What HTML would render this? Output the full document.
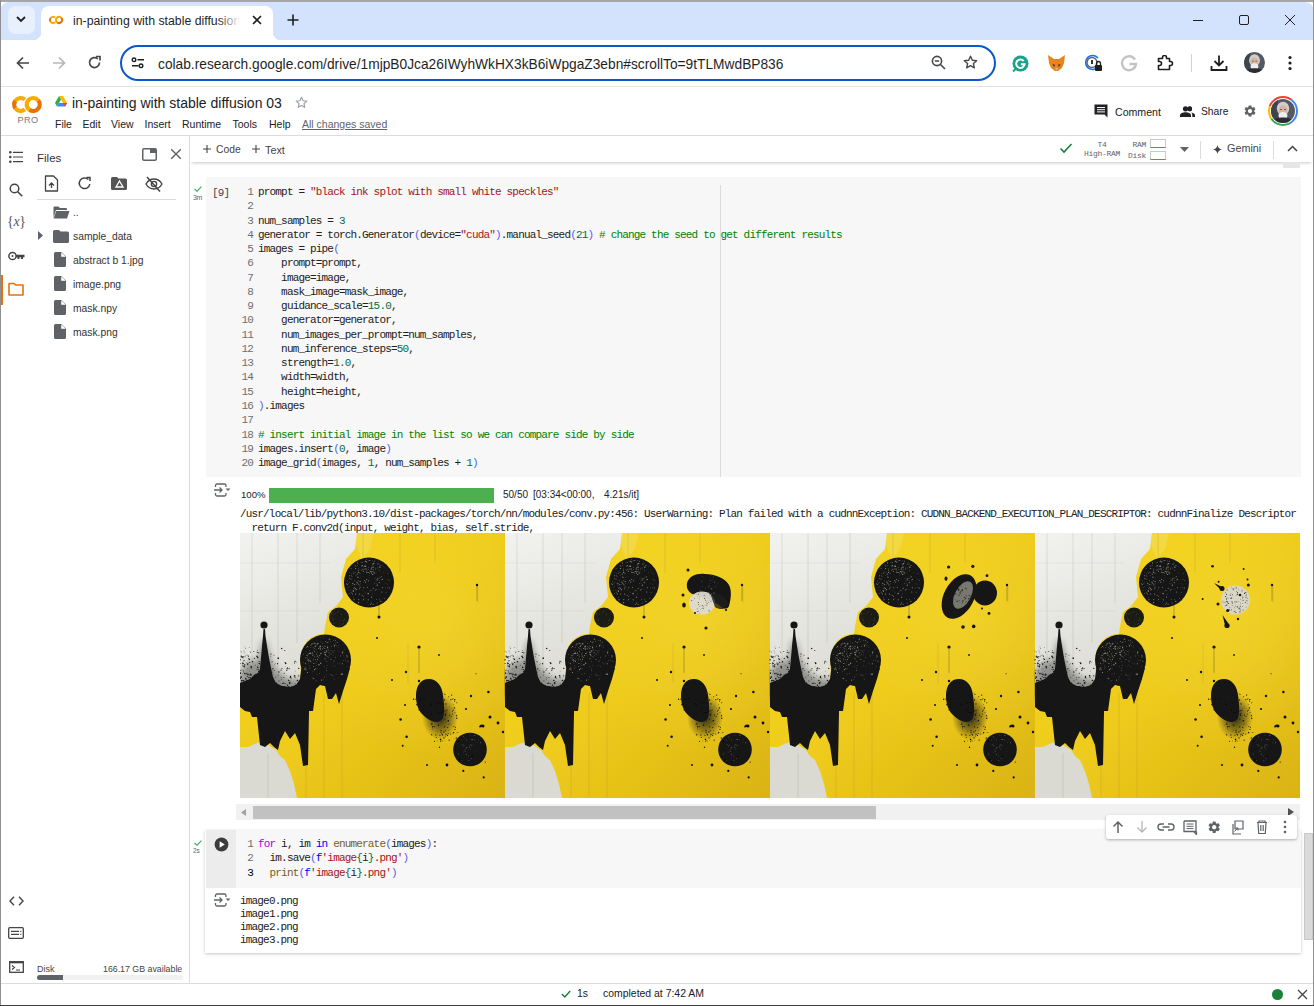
<!DOCTYPE html>
<html><head><meta charset="utf-8">
<style>
*{box-sizing:border-box;margin:0;padding:0}
html,body{width:1314px;height:1006px;overflow:hidden;background:#fff;font-family:"Liberation Sans",sans-serif;color:#202124}
.a{position:absolute}
svg{display:block}
.mono{font-family:"Liberation Mono",monospace}
#tabstrip{left:0;top:0;width:1314px;height:40px;background:#d3e3fd}
.code{font-family:"Liberation Mono",monospace;font-size:11px;letter-spacing:-0.82px;white-space:pre;line-height:14.26px;color:#212121}
.ln{color:#6e6e6e}
.str{color:#a31515}
.num{color:#116644}
.cm{color:#008000}
.br{color:#5060f0}
.kw{color:#af00db}
.kb{color:#0000ff}
.fn{color:#795e26}
</style></head>
<body>
<!-- desktop strip -->
<div class="a" style="left:0;top:0;width:1314px;height:2px;background:#a6a6a6"></div>
<div class="a" id="tabstrip" style="top:1.5px;height:38.5px;border-radius:9px 9px 0 0"></div>
<!-- window borders -->
<div class="a" style="left:0;top:91px;width:1px;height:31px;background:#c0504d"></div>
<div class="a" style="left:0;top:0;width:1px;height:1006px;background:#8f8f8f"></div>
<div class="a" style="left:1313px;top:0;width:1px;height:1006px;background:#8f8f8f"></div>

<!-- tab search button -->
<div class="a" style="left:8px;top:6px;width:27px;height:28px;border-radius:7px;background:#e8f0fe"></div>
<svg class="a" style="left:15px;top:14px" width="12" height="10" viewBox="0 0 12 10"><path d="M2 3 L6 7 L10 3" fill="none" stroke="#1f1f1f" stroke-width="1.8"/></svg>

<!-- active tab -->
<div class="a" style="left:41px;top:6px;width:232px;height:34px;background:#fff;border-radius:8px 8px 0 0"></div>
<div class="a" style="left:33px;top:32px;width:8px;height:8px;background:radial-gradient(circle at 0 0,#d3e3fd 8px,#fff 8.5px)"></div>
<div class="a" style="left:273px;top:32px;width:8px;height:8px;background:radial-gradient(circle at 100% 0,#d3e3fd 8px,#fff 8.5px)"></div>
<!-- colab favicon -->
<svg class="a" style="left:46.9px;top:14.0px" width="18.1" height="11.9" viewBox="0 0 38 25"><path d="M16.88 7.52A6.5 6.5 0 0 0 7.38 8.77" fill="none" stroke="#f9ab00" stroke-width="4.2"/><path d="M7.38 8.77A6.5 6.5 0 0 0 7.38 16.23" fill="none" stroke="#e8710a" stroke-width="4.2"/><path d="M7.38 16.23A6.5 6.5 0 0 0 16.88 17.48" fill="none" stroke="#f9ab00" stroke-width="4.2"/><path d="M30.18 8.32A6.5 6.5 0 1 0 21.47 17.82" fill="none" stroke="#f9ab00" stroke-width="4.2"/><path d="M21.47 17.82A6.5 6.5 0 0 0 30.18 8.32" fill="none" stroke="#e8710a" stroke-width="4.2"/></svg>
<div class="a" style="left:73px;top:14px;width:170px;height:18px;font-size:12.3px;color:#1f1f1f;white-space:nowrap;overflow:hidden">in-painting with stable diffusion 03</div>
<div class="a" style="left:218px;top:10px;width:26px;height:20px;background:linear-gradient(90deg,rgba(255,255,255,0),#fff 85%)"></div>
<svg class="a" style="left:252px;top:15px" width="10" height="10" viewBox="0 0 10 10"><path d="M1 1L9 9M9 1L1 9" stroke="#1f1f1f" stroke-width="1.6"/></svg>
<svg class="a" style="left:287px;top:14px" width="12" height="12" viewBox="0 0 12 12"><path d="M6 0.5V11.5M0.5 6H11.5" stroke="#1f1f1f" stroke-width="1.6"/></svg>

<!-- window controls -->
<div class="a" style="left:1193px;top:20px;width:10px;height:1px;background:#1f1f1f"></div>
<div class="a" style="left:1239px;top:15px;width:10px;height:10px;border:1px solid #1f1f1f;border-radius:2px"></div>
<svg class="a" style="left:1285px;top:15px" width="10" height="10" viewBox="0 0 10 10"><path d="M0 0L10 10M10 0L0 10" stroke="#1f1f1f" stroke-width="1"/></svg>

<!-- toolbar -->
<div class="a" style="left:1px;top:40px;width:1312px;height:46px;background:#fff"></div>
<div class="a" style="left:1px;top:86px;width:1312px;height:1px;background:#e3e3e3"></div>
<svg class="a" style="left:16px;top:56px" width="14" height="14" viewBox="0 0 14 14"><path d="M13 7H1.5M7 1.5L1.5 7L7 12.5" fill="none" stroke="#474747" stroke-width="1.7"/></svg>
<svg class="a" style="left:52px;top:56px" width="14" height="14" viewBox="0 0 14 14"><path d="M1 7H12.5M7 1.5L12.5 7L7 12.5" fill="none" stroke="#b8b8b8" stroke-width="1.7"/></svg>
<svg class="a" style="left:87px;top:55px" width="15" height="15" viewBox="0 0 15 15"><path d="M12.5 7.5A5 5 0 1 1 10.8 3.8" fill="none" stroke="#474747" stroke-width="1.7"/><path d="M9 1.5H13V5.5" fill="none" stroke="#474747" stroke-width="1.7"/></svg>
<div class="a" style="left:120px;top:45px;width:876px;height:36px;border:2px solid #0b57d0;border-radius:18px;background:#fff"></div>
<svg class="a" style="left:131px;top:57px" width="14" height="12" viewBox="0 0 14 12"><circle cx="3" cy="2.8" r="1.8" fill="none" stroke="#1f1f1f" stroke-width="1.4"/><path d="M6.5 2.8H13M1 8.8H7.5" stroke="#1f1f1f" stroke-width="1.5"/><circle cx="10" cy="8.8" r="1.8" fill="none" stroke="#1f1f1f" stroke-width="1.4"/></svg>
<div class="a" style="left:158px;top:56.5px;font-size:13.75px;color:#1f1f1f;white-space:nowrap">colab.research.google.com/drive/1mjpB0Jca26IWyhWkHX3kB6iWpgaZ3ebn#scrollTo=9tTLMwdBP836</div>

<!-- toolbar right icons -->
<svg class="a" style="left:931px;top:55px" width="15" height="15" viewBox="0 0 15 15"><circle cx="6" cy="6" r="4.6" fill="none" stroke="#474747" stroke-width="1.6"/><path d="M9.5 9.5L14 14M3.8 6H8.2" stroke="#474747" stroke-width="1.6"/></svg>
<svg class="a" style="left:962px;top:54px" width="17" height="17" viewBox="0 0 24 24"><path d="M12 3.2l2.6 5.6 6.1.6-4.6 4.1 1.3 6-5.4-3.1-5.4 3.1 1.3-6-4.6-4.1 6.1-.6z" fill="none" stroke="#474747" stroke-width="2" stroke-linejoin="round"/></svg>
<svg class="a" style="left:1012px;top:55px" width="17" height="17" viewBox="0 0 17 17"><circle cx="8.5" cy="8.5" r="8" fill="#15a38a"/><path d="M11.8 6.2A4.2 4.2 0 1 0 12.6 9.2H8.8" fill="none" stroke="#fff" stroke-width="2"/><path d="M1 16.5L4.5 13" stroke="#15a38a" stroke-width="2"/></svg>
<svg class="a" style="left:1047px;top:54px" width="19" height="18" viewBox="0 0 19 18"><path d="M1 1L7 5H12L18 1L17 9L15 14L11 17H8L4 14L2 9Z" fill="#e8831d"/><path d="M5 9L8 11L7 13ZM14 9L11 11L12 13Z" fill="#233447"/><path d="M8 14H11L9.5 16Z" fill="#d7c1b3"/><path d="M3 6L7 8L6 11Z M16 6L12 8L13 11Z" fill="#f6851b"/></svg>
<svg class="a" style="left:1084px;top:54px" width="19" height="18" viewBox="0 0 19 18"><path d="M14 4A7 7 0 1 0 14 13" fill="none" stroke="#1a73e8" stroke-width="1.6"/><circle cx="8" cy="8.5" r="5" fill="#fff" stroke="#5f6368" stroke-width="1.4"/><path d="M8 6V10" stroke="#1f1f1f" stroke-width="1.8"/><rect x="11" y="11" width="7" height="6" rx="1" fill="#1f1f1f"/><path d="M12.5 11V9.5A2 2 0 0 1 16.5 9.5V11" fill="none" stroke="#1f1f1f" stroke-width="1.3"/></svg>
<svg class="a" style="left:1120px;top:54px" width="18" height="18" viewBox="0 0 18 18"><path d="M15 5.5A7 7 0 1 0 16 10H9.5" fill="none" stroke="#c4c4c4" stroke-width="2.4"/></svg>
<svg class="a" style="left:1157px;top:55px" width="17" height="16" viewBox="0 0 17 16"><path d="M1.5 3.5H5.5V2.5A2 2 0 0 1 9.5 2.5V3.5H12.5V6.5H13.5A2 2 0 0 1 13.5 10.5H12.5V14.5H1.5V10.5H2.5A2 2 0 0 0 2.5 6.5H1.5Z" fill="none" stroke="#1f1f1f" stroke-width="1.6" stroke-linejoin="round"/></svg>
<div class="a" style="left:1191px;top:54px;width:1px;height:18px;background:#c2d3f2"></div>
<svg class="a" style="left:1210px;top:54px" width="18" height="18" viewBox="0 0 18 18"><path d="M9 1.5V11.5M4.5 7L9 11.5L13.5 7M1.5 12V16H16.5V12" fill="none" stroke="#1f1f1f" stroke-width="1.8"/></svg>
<svg class="a" style="left:1244px;top:52px" width="21" height="21" viewBox="0 0 24 24"><defs><clipPath id="avc"><circle cx="12" cy="12" r="12"/></clipPath></defs><g clip-path="url(#avc)"><rect width="24" height="24" fill="#555b63"/><rect x="0" y="0" width="7" height="24" fill="#3f454d"/><ellipse cx="12" cy="9.5" rx="6.2" ry="6.8" fill="#cfcfcf"/><ellipse cx="12" cy="11.5" rx="4.6" ry="5.2" fill="#d8b3a3"/><ellipse cx="12" cy="16.5" rx="4.4" ry="3.6" fill="#ededed"/><path d="M2 24C3 19 7 18.5 12 18.5S21 19 22 24Z" fill="#2a2d33"/><path d="M9 10.5H11M13 10.5H15" stroke="#6a5048" stroke-width="0.9"/></g></svg>
<svg class="a" style="left:1288px;top:55px" width="4" height="16" viewBox="0 0 4 16"><circle cx="2" cy="2.5" r="1.6" fill="#1f1f1f"/><circle cx="2" cy="8" r="1.6" fill="#1f1f1f"/><circle cx="2" cy="13.5" r="1.6" fill="#1f1f1f"/></svg>

<!-- colab header -->
<svg class="a" style="left:8px;top:92px" width="38.0" height="25.0" viewBox="0 0 38 25"><path d="M16.88 7.52A6.5 6.5 0 0 0 7.38 8.77" fill="none" stroke="#f9ab00" stroke-width="4.2"/><path d="M7.38 8.77A6.5 6.5 0 0 0 7.38 16.23" fill="none" stroke="#e8710a" stroke-width="4.2"/><path d="M7.38 16.23A6.5 6.5 0 0 0 16.88 17.48" fill="none" stroke="#f9ab00" stroke-width="4.2"/><path d="M30.18 8.32A6.5 6.5 0 1 0 21.47 17.82" fill="none" stroke="#f9ab00" stroke-width="4.2"/><path d="M21.47 17.82A6.5 6.5 0 0 0 30.18 8.32" fill="none" stroke="#e8710a" stroke-width="4.2"/></svg>
<div class="a" style="left:17.5px;top:114.5px;font-size:9.2px;color:#777;letter-spacing:0.4px">PRO</div>
<svg class="a" style="left:55px;top:96px" width="12" height="11" viewBox="0 0 12 11"><path d="M4 0H8L12 7L10 10.5Z" fill="#fbbc04"/><path d="M4 0L0 7L2 10.5L6 3.5Z" fill="#34a853"/><path d="M2 10.5H10L12 7H4Z" fill="#4285f4"/><path d="M10 10.5L12 7L8 7Z" fill="#ea4335"/></svg>
<div class="a" style="left:72px;top:95px;font-size:14px;color:#202124;white-space:nowrap">in-painting with stable diffusion 03</div>
<svg class="a" style="left:295px;top:96px" width="13" height="13" viewBox="0 0 24 24"><path d="M12 2.5l2.9 6.3 6.8.7-5.1 4.6 1.4 6.8L12 17.4l-6 3.5 1.4-6.8-5.1-4.6 6.8-.7z" fill="none" stroke="#9aa0a6" stroke-width="2.2" stroke-linejoin="round"/></svg>
<div class="a" style="top:118px;font-size:10.5px;color:#202124;white-space:nowrap;left:0;width:400px;height:14px">
<span class="a" style="left:55px">File</span><span class="a" style="left:82.5px">Edit</span><span class="a" style="left:111px">View</span><span class="a" style="left:144.5px">Insert</span><span class="a" style="left:182px">Runtime</span><span class="a" style="left:232.5px">Tools</span><span class="a" style="left:269px">Help</span><span class="a" style="left:302px;color:#5f6368;text-decoration:underline">All changes saved</span>
</div>
<svg class="a" style="left:1094px;top:104px" width="14" height="14" viewBox="0 0 14 14"><path d="M0.5 0.5H13.5V13.5L10.5 10.5H0.5Z" fill="#202124"/><path d="M3 3.5H11M3 5.7H11M3 7.9H11" stroke="#fff" stroke-width="1"/></svg>
<div class="a" style="left:1115px;top:105.5px;font-size:10.6px;color:#202124">Comment</div>
<svg class="a" style="left:1180px;top:106px" width="15" height="11" viewBox="0 0 15 11"><circle cx="5.5" cy="2.8" r="2.6" fill="#202124"/><path d="M0 11V9.3C0 7.3 3 6.3 5.5 6.3S11 7.3 11 9.3V11Z" fill="#202124"/><path d="M9.3 5.4A2.6 2.6 0 0 0 9.3 0.2A2.8 2.8 0 0 1 9.3 5.4Z" fill="#202124"/><circle cx="9.6" cy="2.8" r="2.5" fill="#202124"/><path d="M11.3 6.5C13.3 6.9 15 7.8 15 9.3V11H12.3V9.3C12.3 8.2 12 7.2 11.3 6.5Z" fill="#202124"/></svg>
<div class="a" style="left:1201px;top:106px;font-size:10.3px;color:#202124">Share</div>
<svg class="a" style="left:1243px;top:104px" width="14" height="14" viewBox="0 0 24 24"><path fill="#5f6368" d="M19.14 12.94c.04-.3.06-.61.06-.94 0-.32-.02-.64-.07-.94l2.03-1.58a.49.49 0 0 0 .12-.61l-1.92-3.32a.488.488 0 0 0-.59-.22l-2.39.96c-.5-.38-1.03-.7-1.62-.94l-.36-2.54a.484.484 0 0 0-.48-.41h-3.84c-.24 0-.43.17-.47.41l-.36 2.54c-.59.24-1.13.57-1.62.94l-2.39-.96c-.22-.08-.47 0-.59.22L2.74 8.87c-.12.21-.08.47.12.61l2.03 1.58c-.05.3-.09.63-.09.94s.02.64.07.94l-2.03 1.58a.49.49 0 0 0-.12.61l1.92 3.32c.12.22.37.29.59.22l2.39-.96c.5.38 1.03.7 1.62.94l.36 2.54c.05.24.24.41.48.41h3.84c.24 0 .44-.17.47-.41l.36-2.54c.59-.24 1.13-.56 1.62-.94l2.39.96c.22.08.47 0 .59-.22l1.92-3.32c.12-.22.07-.47-.12-.61l-2.01-1.58zM12 15.6c-1.98 0-3.6-1.62-3.6-3.6s1.62-3.6 3.6-3.6 3.6 1.62 3.6 3.6-1.62 3.6-3.6 3.6z"/></svg>
<div class="a" style="left:1268px;top:96px;width:30px;height:30px;border-radius:50%;background:conic-gradient(#ea4335 0 35deg,#4285f4 35deg 150deg,#34a853 150deg 235deg,#fbbc04 235deg 290deg,#ea4335 290deg 360deg)"></div>
<div class="a" style="left:1270px;top:98px;width:26px;height:26px;border-radius:50%;background:#fff"></div>
<svg class="a" style="left:1271px;top:99px" width="24" height="24" viewBox="0 0 24 24"><defs><clipPath id="avc2"><circle cx="12" cy="12" r="12"/></clipPath></defs><g clip-path="url(#avc2)"><rect width="24" height="24" fill="#555b63"/><rect x="0" y="0" width="7" height="24" fill="#3f454d"/><ellipse cx="12" cy="9.5" rx="6.2" ry="6.8" fill="#cfcfcf"/><ellipse cx="12" cy="11.5" rx="4.6" ry="5.2" fill="#d8b3a3"/><ellipse cx="12" cy="16.5" rx="4.4" ry="3.6" fill="#ededed"/><path d="M2 24C3 19 7 18.5 12 18.5S21 19 22 24Z" fill="#2a2d33"/><path d="M9 10.5H11M13 10.5H15" stroke="#6a5048" stroke-width="0.9"/></g></svg>
<div class="a" style="left:1px;top:135px;width:1312px;height:1px;background:#dadce0"></div>

<!-- notebook toolbar -->
<div class="a" style="left:190px;top:136px;width:1123px;height:26px;background:#fff;box-shadow:0 3px 3px -2px rgba(0,0,0,0.22)"></div>
<svg class="a" style="left:203px;top:145px" width="8" height="8" viewBox="0 0 8 8"><path d="M4 0V8M0 4H8" stroke="#444" stroke-width="1.1"/></svg>
<div class="a" style="left:216px;top:144px;font-size:10.3px;color:#444">Code</div>
<svg class="a" style="left:252px;top:145px" width="8" height="8" viewBox="0 0 8 8"><path d="M4 0V8M0 4H8" stroke="#444" stroke-width="1.1"/></svg>
<div class="a" style="left:265px;top:144px;font-size:10.8px;color:#444">Text</div>
<svg class="a" style="left:1059px;top:142px" width="14" height="12" viewBox="0 0 14 12"><path d="M1.5 6.5L5 10L12.5 2" fill="none" stroke="#188038" stroke-width="1.6"/></svg>
<div class="a mono" style="left:1084px;top:140px;font-size:8px;line-height:9px;color:#5f6368;text-align:center;width:36px;letter-spacing:-0.3px">T4<br>High-RAM</div>
<div class="a mono" style="left:1127px;top:139px;font-size:8px;line-height:11px;color:#5f6368;text-align:right;width:19px;letter-spacing:-0.3px">RAM<br>Disk</div>
<div class="a" style="left:1150px;top:139px;width:16px;height:9px;border:1px solid #c8c8c8;border-bottom:1px solid #34a853"></div>
<div class="a" style="left:1150px;top:151px;width:16px;height:9px;border:1px solid #c8c8c8;border-bottom:1px solid #34a853"></div>
<svg class="a" style="left:1180px;top:147px" width="9" height="5" viewBox="0 0 9 5"><path d="M0 0H9L4.5 5Z" fill="#5f6368"/></svg>
<div class="a" style="left:1200px;top:141px;width:1px;height:18px;background:#dadce0"></div>
<svg class="a" style="left:1213px;top:145px" width="9" height="9" viewBox="0 0 10 10"><path d="M5 0C5.5 3 7 4.5 10 5C7 5.5 5.5 7 5 10C4.5 7 3 5.5 0 5C3 4.5 4.5 3 5 0Z" fill="#444"/></svg>
<div class="a" style="left:1227px;top:142px;font-size:10.8px;color:#444">Gemini</div>
<div class="a" style="left:1273px;top:141px;width:1px;height:18px;background:#dadce0"></div>
<svg class="a" style="left:1287px;top:145px" width="11" height="7" viewBox="0 0 11 7"><path d="M1 6L5.5 1.5L10 6" fill="none" stroke="#444" stroke-width="1.5"/></svg>

<!-- sidebar -->
<div class="a" style="left:189px;top:136px;width:1px;height:847px;background:#dadce0"></div>
<svg class="a" style="left:9px;top:151px" width="14" height="12" viewBox="0 0 14 12"><circle cx="1.3" cy="1.3" r="1.3" fill="#444"/><circle cx="1.3" cy="6" r="1.3" fill="#444"/><circle cx="1.3" cy="10.7" r="1.3" fill="#444"/><path d="M4 1.3H14M4 6H14M4 10.7H14" stroke="#444" stroke-width="1.2"/></svg>
<div class="a" style="left:37px;top:151.5px;font-size:11.5px;color:#333">Files</div>
<svg class="a" style="left:141.5px;top:148px" width="15" height="13" viewBox="0 0 15 13"><rect x="0.75" y="0.75" width="13.5" height="11.5" rx="1.2" fill="none" stroke="#5f6368" stroke-width="1.5"/><rect x="8" y="1" width="6" height="4" fill="#5f6368"/></svg>
<svg class="a" style="left:170px;top:148px" width="12" height="12" viewBox="0 0 12 12"><path d="M1.2 1.2L10.8 10.8M10.8 1.2L1.2 10.8" stroke="#5f6368" stroke-width="1.4"/></svg>
<svg class="a" style="left:9px;top:183px" width="14" height="14" viewBox="0 0 14 14"><circle cx="5.5" cy="5.5" r="4.3" fill="none" stroke="#444" stroke-width="1.5"/><path d="M8.7 8.7L13.3 13.3" stroke="#444" stroke-width="1.6"/></svg>
<div class="a" style="left:7px;top:214px;font-family:'Liberation Serif',serif;font-size:14px;color:#555;letter-spacing:-0.3px">{<i>x</i>}</div>
<svg class="a" style="left:8px;top:250px" width="17" height="12" viewBox="0 0 17 12"><circle cx="4.5" cy="6" r="3.6" fill="none" stroke="#444" stroke-width="1.5"/><circle cx="4.5" cy="6" r="1" fill="#444"/><path d="M8 4.8H16.5V7.2H15V9H13V7.2H11.5V9H9.5V7.2H8" fill="#444"/></svg>
<div class="a" style="left:1px;top:275px;width:2px;height:30px;background:#e8710a"></div>
<svg class="a" style="left:8px;top:282px" width="16" height="14" viewBox="0 0 16 14"><path d="M1 1.5H6L7.5 3H15V13H1Z" fill="none" stroke="#e8710a" stroke-width="1.6" stroke-linejoin="round"/></svg>
<svg class="a" style="left:44px;top:175px" width="15" height="17" viewBox="0 0 15 17"><path d="M1.5 1H9.5L13.5 5V16H1.5Z" fill="none" stroke="#444" stroke-width="1.3" stroke-linejoin="round"/><path d="M7.5 13V8M5 10.5L7.5 8L10 10.5" fill="none" stroke="#444" stroke-width="1.3"/></svg>
<svg class="a" style="left:77px;top:176px" width="15" height="15" viewBox="0 0 15 15"><path d="M12.8 8A5.3 5.3 0 1 1 11.4 3.6" fill="none" stroke="#444" stroke-width="1.5"/><path d="M9.5 1.5H13V5" fill="none" stroke="#444" stroke-width="1.5"/></svg>
<svg class="a" style="left:111px;top:177px" width="16" height="13" viewBox="0 0 16 13"><path d="M0 1.5A1.5 1.5 0 0 1 1.5 0H6L7.5 1.5H14.5A1.5 1.5 0 0 1 16 3V11.5A1.5 1.5 0 0 1 14.5 13H1.5A1.5 1.5 0 0 1 0 11.5Z" fill="#555"/><path d="M8.5 4L12 10H5Z" fill="none" stroke="#fff" stroke-width="1.3"/></svg>
<svg class="a" style="left:145px;top:176px" width="18" height="16" viewBox="0 0 18 16"><path d="M1 8C3 4.5 6 3 9 3S15 4.5 17 8C15 11.5 12 13 9 13S3 11.5 1 8Z" fill="none" stroke="#444" stroke-width="1.4"/><circle cx="9" cy="8" r="2.6" fill="none" stroke="#444" stroke-width="1.4"/><path d="M2 1L15 15.5" stroke="#444" stroke-width="1.5"/></svg>
<div class="a" style="left:37px;top:199px;width:139px;height:1px;background:#dadce0"></div>
<svg class="a" style="left:53px;top:206px" width="17" height="13" viewBox="0 0 17 13"><path d="M0.5 12V1.5A1 1 0 0 1 1.5 0.5H5.5L7 2H13A1 1 0 0 1 14 3V4H3L0.5 12Z" fill="#5f6368"/><path d="M3.2 5H16.5L14 12.5H0.7Z" fill="#5f6368"/></svg>
<div class="a" style="left:73px;top:207px;font-size:10.3px;color:#444">..</div>
<svg class="a" style="left:38px;top:231px" width="5" height="9" viewBox="0 0 5 9"><path d="M0 0L5 4.5L0 9Z" fill="#5f6368"/></svg>
<svg class="a" style="left:53px;top:230px" width="16" height="13" viewBox="0 0 16 13"><path d="M0 1.5A1.5 1.5 0 0 1 1.5 0H6L7.5 1.5H14.5A1.5 1.5 0 0 1 16 3V11.5A1.5 1.5 0 0 1 14.5 13H1.5A1.5 1.5 0 0 1 0 11.5Z" fill="#5f6368"/></svg>
<div class="a" style="left:73px;top:231px;font-size:10.3px;color:#333">sample_data</div>
<svg class="a" style="left:54px;top:252px" width="12" height="15" viewBox="0 0 12 15"><path d="M1.5 0H7.5L12 4.5V13.5A1.5 1.5 0 0 1 10.5 15H1.5A1.5 1.5 0 0 1 0 13.5V1.5A1.5 1.5 0 0 1 1.5 0Z" fill="#5f6368"/><path d="M7.5 0.5V4.5H11.5" fill="#fff" stroke="#fff" stroke-width="0.6"/></svg>
<div class="a" style="left:73px;top:255px;font-size:10.3px;color:#333">abstract b 1.jpg</div>
<svg class="a" style="left:54px;top:276px" width="12" height="15" viewBox="0 0 12 15"><path d="M1.5 0H7.5L12 4.5V13.5A1.5 1.5 0 0 1 10.5 15H1.5A1.5 1.5 0 0 1 0 13.5V1.5A1.5 1.5 0 0 1 1.5 0Z" fill="#5f6368"/><path d="M7.5 0.5V4.5H11.5" fill="#fff" stroke="#fff" stroke-width="0.6"/></svg>
<div class="a" style="left:73px;top:279px;font-size:10.3px;color:#333">image.png</div>
<svg class="a" style="left:54px;top:300px" width="12" height="15" viewBox="0 0 12 15"><path d="M1.5 0H7.5L12 4.5V13.5A1.5 1.5 0 0 1 10.5 15H1.5A1.5 1.5 0 0 1 0 13.5V1.5A1.5 1.5 0 0 1 1.5 0Z" fill="#5f6368"/><path d="M7.5 0.5V4.5H11.5" fill="#fff" stroke="#fff" stroke-width="0.6"/></svg>
<div class="a" style="left:73px;top:303px;font-size:10.3px;color:#333">mask.npy</div>
<svg class="a" style="left:54px;top:324px" width="12" height="15" viewBox="0 0 12 15"><path d="M1.5 0H7.5L12 4.5V13.5A1.5 1.5 0 0 1 10.5 15H1.5A1.5 1.5 0 0 1 0 13.5V1.5A1.5 1.5 0 0 1 1.5 0Z" fill="#5f6368"/><path d="M7.5 0.5V4.5H11.5" fill="#fff" stroke="#fff" stroke-width="0.6"/></svg>
<div class="a" style="left:73px;top:327px;font-size:10.3px;color:#333">mask.png</div>

<svg class="a" style="left:9px;top:896px" width="15" height="10" viewBox="0 0 15 10"><path d="M5 0.8L1 5L5 9.2M10 0.8L14 5L10 9.2" fill="none" stroke="#444" stroke-width="1.4"/></svg>
<svg class="a" style="left:8px;top:927px" width="16" height="12" viewBox="0 0 16 12"><rect x="0.7" y="0.7" width="14.6" height="10.6" rx="1" fill="none" stroke="#444" stroke-width="1.3"/><path d="M3 4.3H11M3 7.3H11M12.3 4.3H13.3M12.3 7.3H13.3" stroke="#444" stroke-width="1.2"/></svg>
<svg class="a" style="left:9px;top:961px" width="15" height="12" viewBox="0 0 15 12"><rect x="0.7" y="0.7" width="13.6" height="10.6" fill="none" stroke="#444" stroke-width="1.3"/><rect x="0.7" y="0.7" width="13.6" height="1.6" fill="#444"/><path d="M3 4.5L5.5 6.5L3 8.5M7 9H11" fill="none" stroke="#444" stroke-width="1.2"/></svg>
<div class="a" style="left:37px;top:964px;font-size:9px;color:#444">Disk</div>
<div class="a" style="left:103px;top:964px;font-size:8.8px;color:#444">166.17 GB available</div>
<div class="a" style="left:37px;top:975px;width:146px;height:5px;border-radius:3px;background:#f1f1f1"></div>
<div class="a" style="left:37px;top:975px;width:26px;height:5px;border-radius:3px 0 0 3px;background:#5f6368"></div>

<!-- status bar -->
<div class="a" style="left:1px;top:983px;width:1312px;height:1px;background:#dadce0"></div>
<svg class="a" style="left:561px;top:990px" width="10" height="8" viewBox="0 0 10 8"><path d="M0.8 4L3.8 7L9.2 1" fill="none" stroke="#188038" stroke-width="1.4"/></svg>
<div class="a" style="left:577px;top:988px;font-size:10.4px;color:#202124">1s</div>
<div class="a" style="left:603px;top:988px;font-size:10.44px;color:#202124">completed at 7:42 AM</div>
<div class="a" style="left:1272px;top:989px;width:11px;height:11px;border-radius:50%;background:#188038"></div>
<svg class="a" style="left:1297px;top:989px" width="11" height="11" viewBox="0 0 11 11"><path d="M1 1L10 10M10 1L1 10" stroke="#444" stroke-width="1.3"/></svg>
<div class="a" style="left:0;top:1005px;width:1314px;height:1px;background:#3c3c3c"></div>
<!-- NB START -->
<div class="a" style="left:1283px;top:162px;width:17px;height:6px;background:#e6e6e6"></div>
<!-- cell 1 -->
<div class="a" style="left:206px;top:177px;width:1095px;height:300px;background:#f7f7f7"></div>
<svg class="a" style="left:194px;top:186px" width="8" height="6" viewBox="0 0 8 6"><path d="M0.6 3L3 5.3L7.4 0.7" fill="none" stroke="#34a853" stroke-width="1.1"/></svg>
<div class="a" style="left:193px;top:193.5px;font-size:7px;color:#5f6368;letter-spacing:-0.3px">3m</div>
<div class="a code" style="left:212px;top:186px;color:#444">[9]</div>
<div class="a" style="left:720px;top:185px;width:1px;height:292px;background:#dcdcdc"></div>
<div class="a code ln" style="left:221px;top:185px;width:32px;text-align:right">1
2
3
4
5
6
7
8
9
10
11
12
13
14
15
16
17
18
19
20</div>
<div class="a code" style="left:258px;top:185px">prompt = <span class="str">"black ink splot with small white speckles"</span>

num_samples = <span class="num">3</span>
generator = torch.Generator<span class="br">(</span>device=<span class="str">"cuda"</span><span class="br">)</span>.manual_seed<span class="br">(</span><span class="num">21</span><span class="br">)</span> <span class="cm"># change the seed to get different results</span>
images = pipe<span class="br">(</span>
    prompt=prompt,
    image=image,
    mask_image=mask_image,
    guidance_scale=<span class="num">15.0</span>,
    generator=generator,
    num_images_per_prompt=num_samples,
    num_inference_steps=<span class="num">50</span>,
    strength=<span class="num">1.0</span>,
    width=width,
    height=height,
<span class="br">)</span>.images

<span class="cm"># insert initial image in the list so we can compare side by side</span>
images.insert<span class="br">(</span><span class="num">0</span>, image<span class="br">)</span>
image_grid<span class="br">(</span>images, <span class="num">1</span>, num_samples + <span class="num">1</span><span class="br">)</span></div>

<!-- output 1 -->
<svg class="a" style="left:214px;top:483px" width="17" height="14" viewBox="0 0 17 14"><path d="M1.5 4V2.5A1.5 1.5 0 0 1 3 1H10.5A1.5 1.5 0 0 1 12 2.5V4M1.5 10V11.5A1.5 1.5 0 0 0 3 13H10.5A1.5 1.5 0 0 0 12 11.5V10" fill="none" stroke="#5f6368" stroke-width="1.3"/><path d="M0 7H8M5.5 4.5L8 7L5.5 9.5" fill="none" stroke="#5f6368" stroke-width="1.3"/><path d="M11.5 5.5H16.5L14 8Z" fill="#5f6368"/></svg>
<div class="a" style="left:241px;top:489px;font-size:9.6px;color:#202124">100%</div>
<div class="a" style="left:269px;top:488px;width:225px;height:15px;background:#4caf50"></div>
<div class="a" style="left:503px;top:489px;font-size:10px;color:#202124">50/50</div><div class="a" style="left:533px;top:489px;font-size:10px;color:#202124">[03:34&lt;00:00,</div><div class="a" style="left:604px;top:489px;font-size:10px;color:#202124">4.21s/it]</div>
<div class="a code" style="left:240px;top:508px;line-height:13.5px;letter-spacing:-0.83px">/usr/local/lib/python3.10/dist-packages/torch/nn/modules/conv.py:456: UserWarning: Plan failed with a cudnnException: CUDNN_BACKEND_EXECUTION_PLAN_DESCRIPTOR: cudnnFinalize Descriptor
  return F.conv2d(input, weight, bias, self.stride,</div>
<div class="a" id="imgs" style="left:240px;top:533px;width:1060px;height:265px;overflow:hidden"><svg width="1060" height="265" viewBox="0 0 1060 265"><defs>
<linearGradient id="yel" x1="0" y1="0" x2="1" y2="1"><stop offset="0" stop-color="#f6d824"/><stop offset="0.5" stop-color="#eecb1c"/><stop offset="1" stop-color="#dab312"/></linearGradient>
<radialGradient id="yel2" cx="0.75" cy="0.35" r="0.5"><stop offset="0" stop-color="#f8e040" stop-opacity="0.35"/><stop offset="1" stop-color="#f8e040" stop-opacity="0"/></radialGradient>
<linearGradient id="lig" x1="0" y1="0" x2="0.3" y2="1"><stop offset="0" stop-color="#f2f2f0"/><stop offset="1" stop-color="#dcdcd4"/></linearGradient>
<radialGradient id="scat"><stop offset="0" stop-color="#151515" stop-opacity="0.9"/><stop offset="0.55" stop-color="#151515" stop-opacity="0.45"/><stop offset="1" stop-color="#151515" stop-opacity="0"/></radialGradient>
<filter id="blur3" x="-0.2" y="-0.2" width="1.4" height="1.4"><feGaussianBlur stdDeviation="3"/></filter><filter id="soft" x="0" y="0" width="1" height="1"><feGaussianBlur stdDeviation="0.4"/></filter></defs><g filter="url(#soft)" transform="translate(0,0)">
<rect width="265" height="265" fill="url(#yel)"/>
<rect width="265" height="265" fill="url(#yel2)"/>
<path d="M117 0H134L130 16L122 26L116 12Z" fill="#f3df6a" opacity="0.45"/>
<path d="M0 0H117L115 16L106 26L101 44L103 64L96 73L88 79L85 93L84 101L78 101.5L72 104L67 108L63.5 113L61.5 119L60.5 125L60.5 165L0 165Z" fill="url(#lig)"/>
<path d="M0 214L8 214L14.5 211L20 209L28 212L36 217L40 223L45 227L50 238L54 251L57 265H0Z" fill="#dadad3"/>
<g stroke="#5a5a40" stroke-width="0.45" opacity="0.3" fill="none"><path d="M38 0V140M57 0V110M80 0V70M28 220V265M84 160V265M102 150V265M66 232V265M123 0V24M160 0V40M195 0V30M238 52V70M168 110V150M12 0V130"/></g>
<g stroke="#b0b0a8" stroke-width="0.45" opacity="0.3" fill="none"><path d="M0 30H90M0 78H80"/></g>
<path d="M0 138L6 132L12 126L16 130L20 120L22 108L26 108L30 124L36 136L44 144L52 147L60 144L60 165L0 165Z" fill="#1c1c1c" opacity="0.4" filter="url(#blur3)"/>
<g fill="#1a1a1a"><circle cx="3.0" cy="133.0" r="0.63"/><circle cx="10.7" cy="119.8" r="0.48"/><circle cx="10.1" cy="118.6" r="0.32"/><circle cx="1.4" cy="137.0" r="0.35"/><circle cx="16.5" cy="136.7" r="0.36"/><circle cx="12.5" cy="128.8" r="0.77"/><circle cx="7.9" cy="141.4" r="0.79"/><circle cx="17.2" cy="117.5" r="0.44"/><circle cx="2.4" cy="124.7" r="0.45"/><circle cx="3.6" cy="147.7" r="0.59"/><circle cx="7.4" cy="143.2" r="0.57"/><circle cx="1.2" cy="119.0" r="0.40"/><circle cx="8.6" cy="144.3" r="0.46"/><circle cx="9.1" cy="141.7" r="0.45"/><circle cx="14.0" cy="147.2" r="0.42"/><circle cx="10.5" cy="141.3" r="0.74"/><circle cx="5.8" cy="145.6" r="0.79"/><circle cx="8.4" cy="123.1" r="0.68"/><circle cx="9.8" cy="125.2" r="0.32"/><circle cx="15.3" cy="144.0" r="0.59"/><circle cx="6.3" cy="149.2" r="0.65"/><circle cx="11.6" cy="141.9" r="0.53"/><circle cx="18.9" cy="148.3" r="0.54"/><circle cx="1.2" cy="143.9" r="0.65"/><circle cx="19.9" cy="143.4" r="0.71"/><circle cx="7.7" cy="131.5" r="0.63"/><circle cx="9.2" cy="114.6" r="0.38"/><circle cx="1.2" cy="123.1" r="0.68"/><circle cx="5.0" cy="123.8" r="0.50"/><circle cx="1.6" cy="149.1" r="0.52"/><circle cx="17.7" cy="140.6" r="0.71"/><circle cx="5.6" cy="148.9" r="0.51"/><circle cx="17.7" cy="134.4" r="0.78"/><circle cx="3.5" cy="125.1" r="0.42"/><circle cx="9.7" cy="129.3" r="0.59"/><circle cx="0.1" cy="130.6" r="0.51"/><circle cx="11.3" cy="134.7" r="0.78"/><circle cx="10.3" cy="144.6" r="0.61"/><circle cx="1.1" cy="144.2" r="0.75"/><circle cx="17.5" cy="146.9" r="0.70"/><circle cx="8.0" cy="135.6" r="0.35"/><circle cx="1.2" cy="143.0" r="0.33"/><circle cx="3.2" cy="128.1" r="0.47"/><circle cx="0.0" cy="118.1" r="0.38"/><circle cx="7.3" cy="122.0" r="0.31"/><circle cx="12.3" cy="149.1" r="0.37"/><circle cx="6.9" cy="130.1" r="0.48"/><circle cx="17.0" cy="123.4" r="0.80"/><circle cx="9.7" cy="138.0" r="0.34"/><circle cx="6.9" cy="122.1" r="0.43"/><circle cx="3.2" cy="148.1" r="0.31"/><circle cx="10.6" cy="150.9" r="0.37"/><circle cx="0.5" cy="140.4" r="0.56"/><circle cx="17.3" cy="151.5" r="0.65"/><circle cx="7.3" cy="130.5" r="0.38"/><circle cx="10.7" cy="146.7" r="0.69"/><circle cx="4.5" cy="133.3" r="0.71"/><circle cx="17.1" cy="151.7" r="0.70"/><circle cx="14.8" cy="147.8" r="0.41"/><circle cx="7.1" cy="139.7" r="0.31"/><circle cx="5.6" cy="115.4" r="0.43"/><circle cx="19.1" cy="144.6" r="0.52"/><circle cx="19.8" cy="150.6" r="0.78"/><circle cx="4.4" cy="134.6" r="0.41"/><circle cx="4.1" cy="127.5" r="0.61"/><circle cx="16.8" cy="149.7" r="0.54"/><circle cx="16.0" cy="143.6" r="0.34"/><circle cx="18.2" cy="143.8" r="0.69"/><circle cx="9.6" cy="146.1" r="0.39"/><circle cx="6.7" cy="147.1" r="0.70"/><circle cx="7.9" cy="151.4" r="0.50"/><circle cx="14.5" cy="150.8" r="0.39"/><circle cx="3.0" cy="123.7" r="0.75"/><circle cx="2.9" cy="147.5" r="0.71"/><circle cx="13.1" cy="151.6" r="0.48"/><circle cx="2.6" cy="140.6" r="0.31"/><circle cx="13.0" cy="151.4" r="0.56"/><circle cx="8.7" cy="150.5" r="0.74"/><circle cx="4.2" cy="148.0" r="0.43"/><circle cx="4.8" cy="131.8" r="0.59"/><circle cx="8.4" cy="130.4" r="0.37"/><circle cx="7.1" cy="150.0" r="0.53"/><circle cx="18.1" cy="141.6" r="0.51"/><circle cx="10.0" cy="150.2" r="0.57"/><circle cx="0.4" cy="139.8" r="0.52"/><circle cx="0.1" cy="126.8" r="0.70"/><circle cx="9.5" cy="126.3" r="0.66"/><circle cx="6.5" cy="140.8" r="0.56"/><circle cx="15.7" cy="140.8" r="0.35"/><circle cx="5.0" cy="140.9" r="0.44"/><circle cx="10.2" cy="146.7" r="0.58"/><circle cx="18.2" cy="146.4" r="0.52"/><circle cx="10.1" cy="142.4" r="0.56"/><circle cx="9.0" cy="144.6" r="0.57"/><circle cx="18.8" cy="138.4" r="0.65"/><circle cx="18.8" cy="149.2" r="0.43"/><circle cx="18.9" cy="140.9" r="0.72"/><circle cx="2.4" cy="124.3" r="0.52"/><circle cx="4.8" cy="119.9" r="0.34"/><circle cx="15.7" cy="144.0" r="0.75"/><circle cx="14.3" cy="125.3" r="0.63"/><circle cx="17.7" cy="124.6" r="0.78"/><circle cx="19.1" cy="128.6" r="0.50"/><circle cx="19.8" cy="138.7" r="0.72"/><circle cx="8.6" cy="125.7" r="0.56"/><circle cx="3.9" cy="133.6" r="0.46"/><circle cx="0.4" cy="145.4" r="0.58"/><circle cx="0.4" cy="137.2" r="0.47"/><circle cx="10.2" cy="142.8" r="0.33"/><circle cx="15.8" cy="151.7" r="0.79"/><circle cx="5.3" cy="122.2" r="0.32"/><circle cx="5.4" cy="146.8" r="0.36"/><circle cx="18.2" cy="136.6" r="0.71"/><circle cx="3.0" cy="130.4" r="0.76"/><circle cx="14.0" cy="141.2" r="0.34"/><circle cx="13.8" cy="118.6" r="0.51"/><circle cx="18.8" cy="119.8" r="0.62"/><circle cx="1.7" cy="147.4" r="0.73"/><circle cx="17.3" cy="119.4" r="0.53"/><circle cx="11.1" cy="133.6" r="0.76"/><circle cx="2.6" cy="130.8" r="0.56"/><circle cx="2.2" cy="129.5" r="0.38"/><circle cx="4.0" cy="117.9" r="0.46"/><circle cx="15.2" cy="132.3" r="0.44"/><circle cx="3.6" cy="139.1" r="0.47"/><circle cx="5.0" cy="113.9" r="0.31"/><circle cx="11.0" cy="145.7" r="0.39"/><circle cx="18.7" cy="138.3" r="0.35"/><circle cx="8.6" cy="147.8" r="0.55"/><circle cx="7.9" cy="148.2" r="0.55"/><circle cx="19.6" cy="144.5" r="0.47"/><circle cx="14.1" cy="148.1" r="0.62"/><circle cx="7.0" cy="136.0" r="0.33"/><circle cx="1.4" cy="123.9" r="0.67"/><circle cx="3.3" cy="130.2" r="0.34"/><circle cx="17.4" cy="148.4" r="0.64"/><circle cx="4.8" cy="131.4" r="0.45"/><circle cx="3.2" cy="137.8" r="0.52"/><circle cx="19.2" cy="130.6" r="0.79"/><circle cx="4.9" cy="140.5" r="0.78"/></g>
<g fill="#1a1a1a"><circle cx="40.7" cy="137.8" r="0.30"/><circle cx="44.2" cy="140.3" r="0.55"/><circle cx="45.1" cy="133.4" r="0.30"/><circle cx="32.7" cy="136.1" r="0.50"/><circle cx="30.7" cy="123.4" r="0.45"/><circle cx="47.6" cy="134.8" r="0.56"/><circle cx="49.7" cy="150.5" r="0.66"/><circle cx="41.7" cy="153.4" r="0.46"/><circle cx="34.5" cy="155.7" r="0.66"/><circle cx="31.3" cy="147.9" r="0.72"/><circle cx="48.8" cy="153.7" r="0.67"/><circle cx="34.2" cy="152.0" r="0.56"/><circle cx="55.0" cy="144.1" r="0.70"/><circle cx="47.5" cy="152.3" r="0.75"/><circle cx="50.8" cy="148.9" r="0.41"/><circle cx="34.0" cy="122.2" r="0.48"/><circle cx="55.1" cy="128.3" r="0.58"/><circle cx="48.8" cy="147.5" r="0.64"/><circle cx="30.1" cy="143.7" r="0.70"/><circle cx="45.1" cy="150.5" r="0.57"/><circle cx="32.0" cy="148.3" r="0.67"/><circle cx="32.2" cy="135.6" r="0.43"/><circle cx="36.2" cy="150.0" r="0.67"/><circle cx="44.8" cy="155.5" r="0.49"/><circle cx="50.5" cy="143.4" r="0.68"/><circle cx="49.3" cy="147.2" r="0.34"/><circle cx="37.6" cy="130.7" r="0.67"/><circle cx="47.0" cy="137.6" r="0.31"/><circle cx="38.1" cy="125.1" r="0.64"/><circle cx="50.3" cy="149.1" r="0.45"/><circle cx="43.9" cy="144.5" r="0.53"/><circle cx="56.8" cy="129.1" r="0.40"/><circle cx="58.1" cy="155.5" r="0.31"/><circle cx="54.6" cy="142.8" r="0.78"/><circle cx="38.1" cy="142.5" r="0.40"/><circle cx="36.3" cy="154.9" r="0.59"/><circle cx="45.7" cy="130.4" r="0.78"/><circle cx="54.6" cy="129.9" r="0.55"/><circle cx="51.1" cy="153.6" r="0.42"/><circle cx="44.6" cy="153.8" r="0.31"/><circle cx="44.8" cy="117.5" r="0.53"/><circle cx="34.2" cy="137.5" r="0.47"/><circle cx="55.2" cy="138.1" r="0.30"/><circle cx="55.2" cy="150.5" r="0.36"/><circle cx="51.4" cy="154.5" r="0.75"/><circle cx="41.2" cy="137.1" r="0.50"/><circle cx="47.7" cy="156.0" r="0.48"/><circle cx="38.3" cy="141.8" r="0.32"/><circle cx="55.0" cy="128.1" r="0.44"/><circle cx="37.5" cy="154.7" r="0.43"/><circle cx="35.7" cy="144.3" r="0.49"/><circle cx="56.5" cy="155.1" r="0.71"/><circle cx="57.4" cy="147.6" r="0.77"/><circle cx="51.6" cy="145.4" r="0.32"/><circle cx="43.5" cy="150.1" r="0.68"/><circle cx="38.6" cy="147.9" r="0.32"/><circle cx="33.8" cy="154.5" r="0.54"/><circle cx="38.9" cy="139.0" r="0.67"/><circle cx="37.8" cy="155.5" r="0.63"/><circle cx="46.7" cy="137.5" r="0.50"/><circle cx="34.8" cy="131.8" r="0.40"/><circle cx="44.9" cy="154.0" r="0.41"/><circle cx="59.9" cy="154.0" r="0.52"/><circle cx="35.8" cy="130.3" r="0.35"/><circle cx="32.7" cy="139.0" r="0.42"/><circle cx="47.1" cy="135.8" r="0.74"/><circle cx="42.4" cy="150.5" r="0.51"/><circle cx="41.3" cy="144.7" r="0.47"/><circle cx="38.3" cy="125.2" r="0.78"/><circle cx="45.1" cy="129.5" r="0.61"/><circle cx="36.5" cy="153.1" r="0.44"/><circle cx="42.0" cy="135.4" r="0.52"/><circle cx="55.5" cy="155.0" r="0.74"/><circle cx="31.0" cy="121.1" r="0.65"/><circle cx="44.2" cy="153.8" r="0.59"/><circle cx="41.7" cy="115.5" r="0.76"/><circle cx="55.7" cy="152.3" r="0.79"/><circle cx="33.3" cy="135.4" r="0.38"/><circle cx="50.5" cy="144.6" r="0.77"/><circle cx="49.4" cy="149.8" r="0.68"/><circle cx="46.5" cy="142.7" r="0.32"/><circle cx="37.0" cy="151.3" r="0.76"/><circle cx="39.1" cy="147.9" r="0.36"/><circle cx="49.1" cy="135.6" r="0.65"/><circle cx="32.1" cy="128.7" r="0.56"/><circle cx="41.6" cy="146.3" r="0.41"/><circle cx="30.3" cy="146.8" r="0.45"/><circle cx="58.8" cy="142.8" r="0.62"/><circle cx="44.3" cy="153.5" r="0.42"/><circle cx="58.8" cy="135.4" r="0.65"/></g>
<path d="M0 150L5 148L10 146L14 142L18 140L20 136L21 125L22 113L23 103L23.5 96L25 96L25.5 103L27 113L29 125L31 135L33 144L36 150L42 153L50 154L56 152L60 146L62 130L110 135L107 146L103 158L99 171L96 160L92 166L88 166L85 153L80 152L76 156L73 178L69 178L68 232L63 233L60 212L55 200L50 206L45 198L40 208L38 217L34 214L30 210L25 214L20 212L17 184L12 184L10 179L5 178L0 174Z" fill="#121212"/>
<circle cx="24" cy="92" r="3.6" fill="#161616"/>
<circle cx="129" cy="49.5" r="25" fill="#151514"/>
<circle cx="99" cy="84.5" r="10" fill="#1a1a16"/>
<circle cx="85.5" cy="127" r="25.5" fill="#151514"/>
<g fill="#8d8d84"><circle cx="122.2" cy="36.2" r="0.48"/><circle cx="121.2" cy="62.2" r="0.32"/><circle cx="134.8" cy="30.6" r="0.32"/><circle cx="141.6" cy="47.1" r="0.33"/><circle cx="131.5" cy="64.1" r="0.58"/><circle cx="142.4" cy="54.8" r="0.56"/><circle cx="126.5" cy="26.7" r="0.37"/><circle cx="137.8" cy="69.9" r="0.26"/><circle cx="121.8" cy="37.3" r="0.37"/><circle cx="138.1" cy="30.7" r="0.27"/><circle cx="115.2" cy="51.8" r="0.32"/><circle cx="111.4" cy="60.5" r="0.26"/><circle cx="134.6" cy="50.7" r="0.34"/><circle cx="128.6" cy="27.7" r="0.35"/><circle cx="126.3" cy="36.8" r="0.25"/><circle cx="129.8" cy="27.5" r="0.58"/><circle cx="137.9" cy="45.2" r="0.51"/><circle cx="137.9" cy="31.4" r="0.36"/><circle cx="123.1" cy="62.0" r="0.28"/><circle cx="118.6" cy="69.7" r="0.60"/><circle cx="109.6" cy="49.7" r="0.33"/><circle cx="113.3" cy="58.5" r="0.51"/><circle cx="139.7" cy="34.1" r="0.54"/><circle cx="128.2" cy="39.3" r="0.34"/><circle cx="122.3" cy="62.3" r="0.43"/><circle cx="131.4" cy="70.0" r="0.60"/><circle cx="141.7" cy="59.0" r="0.54"/><circle cx="136.3" cy="56.3" r="0.45"/><circle cx="141.7" cy="43.5" r="0.41"/><circle cx="127.7" cy="69.7" r="0.29"/><circle cx="114.1" cy="39.2" r="0.38"/><circle cx="113.9" cy="38.6" r="0.25"/><circle cx="125.0" cy="59.1" r="0.44"/><circle cx="111.5" cy="43.8" r="0.31"/><circle cx="124.0" cy="35.6" r="0.36"/><circle cx="119.7" cy="61.1" r="0.60"/><circle cx="122.3" cy="57.2" r="0.32"/><circle cx="135.3" cy="36.3" r="0.41"/><circle cx="115.1" cy="32.5" r="0.47"/><circle cx="125.6" cy="65.7" r="0.29"/><circle cx="108.4" cy="50.7" r="0.32"/><circle cx="144.6" cy="65.5" r="0.42"/><circle cx="143.9" cy="39.2" r="0.31"/><circle cx="131.4" cy="38.9" r="0.55"/><circle cx="133.7" cy="40.9" r="0.39"/><circle cx="114.8" cy="47.9" r="0.34"/><circle cx="125.6" cy="28.0" r="0.45"/><circle cx="129.2" cy="45.0" r="0.29"/><circle cx="115.2" cy="39.5" r="0.36"/><circle cx="113.6" cy="58.0" r="0.48"/><circle cx="114.6" cy="54.5" r="0.47"/><circle cx="117.9" cy="50.2" r="0.52"/><circle cx="119.6" cy="52.0" r="0.29"/><circle cx="113.7" cy="55.4" r="0.47"/><circle cx="146.1" cy="59.2" r="0.43"/><circle cx="137.1" cy="46.9" r="0.60"/><circle cx="126.7" cy="28.9" r="0.59"/><circle cx="106.5" cy="50.6" r="0.31"/><circle cx="134.3" cy="28.0" r="0.37"/><circle cx="129.4" cy="40.3" r="0.35"/><circle cx="132.5" cy="41.5" r="0.57"/><circle cx="140.8" cy="68.4" r="0.56"/><circle cx="111.0" cy="46.0" r="0.56"/><circle cx="112.5" cy="43.5" r="0.29"/><circle cx="132.5" cy="38.2" r="0.45"/><circle cx="133.9" cy="39.0" r="0.59"/><circle cx="112.9" cy="39.9" r="0.25"/><circle cx="137.7" cy="51.4" r="0.40"/><circle cx="107.3" cy="47.8" r="0.33"/><circle cx="127.0" cy="46.7" r="0.37"/><circle cx="113.7" cy="40.6" r="0.47"/><circle cx="120.7" cy="50.8" r="0.34"/><circle cx="133.2" cy="55.2" r="0.55"/><circle cx="131.9" cy="35.2" r="0.25"/><circle cx="118.4" cy="35.9" r="0.48"/><circle cx="108.1" cy="57.2" r="0.34"/><circle cx="119.7" cy="55.7" r="0.52"/><circle cx="146.0" cy="50.8" r="0.30"/><circle cx="115.9" cy="33.4" r="0.36"/><circle cx="127.4" cy="54.3" r="0.52"/><circle cx="128.6" cy="47.7" r="0.51"/><circle cx="109.7" cy="53.8" r="0.33"/><circle cx="118.8" cy="66.6" r="0.55"/><circle cx="126.2" cy="38.0" r="0.40"/><circle cx="133.0" cy="33.3" r="0.47"/><circle cx="139.5" cy="47.2" r="0.26"/><circle cx="128.3" cy="60.7" r="0.58"/><circle cx="128.7" cy="36.4" r="0.36"/><circle cx="130.5" cy="71.4" r="0.49"/><circle cx="117.4" cy="29.9" r="0.54"/><circle cx="122.1" cy="29.3" r="0.50"/><circle cx="117.5" cy="44.0" r="0.47"/><circle cx="136.4" cy="50.8" r="0.37"/><circle cx="122.5" cy="32.4" r="0.51"/><circle cx="137.6" cy="30.5" r="0.27"/><circle cx="143.8" cy="33.3" r="0.29"/><circle cx="140.9" cy="32.6" r="0.54"/><circle cx="120.6" cy="40.4" r="0.28"/><circle cx="129.5" cy="39.1" r="0.40"/><circle cx="126.0" cy="35.9" r="0.59"/><circle cx="107.8" cy="49.0" r="0.26"/><circle cx="116.0" cy="57.4" r="0.37"/><circle cx="124.3" cy="33.3" r="0.55"/><circle cx="139.3" cy="49.6" r="0.59"/><circle cx="131.9" cy="40.0" r="0.37"/><circle cx="134.8" cy="39.3" r="0.35"/><circle cx="133.5" cy="30.8" r="0.47"/><circle cx="134.2" cy="45.2" r="0.26"/><circle cx="132.2" cy="60.9" r="0.43"/><circle cx="113.3" cy="64.4" r="0.41"/><circle cx="109.4" cy="45.6" r="0.48"/><circle cx="139.3" cy="33.9" r="0.31"/><circle cx="110.2" cy="57.1" r="0.29"/><circle cx="108.0" cy="54.6" r="0.32"/><circle cx="122.9" cy="67.8" r="0.30"/><circle cx="119.9" cy="48.2" r="0.32"/><circle cx="149.4" cy="47.4" r="0.40"/><circle cx="112.5" cy="61.6" r="0.43"/><circle cx="118.5" cy="37.9" r="0.46"/><circle cx="112.6" cy="60.7" r="0.40"/><circle cx="111.2" cy="40.6" r="0.33"/><circle cx="125.3" cy="28.3" r="0.50"/><circle cx="140.4" cy="34.3" r="0.41"/><circle cx="111.2" cy="59.3" r="0.47"/><circle cx="118.4" cy="39.3" r="0.58"/><circle cx="136.6" cy="66.5" r="0.39"/><circle cx="106.3" cy="50.9" r="0.44"/><circle cx="139.8" cy="66.7" r="0.43"/><circle cx="125.6" cy="33.4" r="0.54"/><circle cx="114.4" cy="47.5" r="0.32"/><circle cx="123.2" cy="36.3" r="0.29"/><circle cx="116.0" cy="56.8" r="0.37"/><circle cx="128.0" cy="60.3" r="0.58"/><circle cx="118.4" cy="47.7" r="0.39"/><circle cx="131.0" cy="57.5" r="0.53"/><circle cx="118.5" cy="37.7" r="0.33"/><circle cx="142.3" cy="46.4" r="0.54"/><circle cx="135.4" cy="35.1" r="0.44"/><circle cx="136.0" cy="39.9" r="0.34"/><circle cx="120.1" cy="53.9" r="0.50"/><circle cx="114.1" cy="51.4" r="0.48"/><circle cx="114.6" cy="66.4" r="0.27"/><circle cx="139.3" cy="30.2" r="0.30"/><circle cx="138.0" cy="33.5" r="0.25"/><circle cx="131.2" cy="36.1" r="0.57"/><circle cx="131.4" cy="40.4" r="0.46"/><circle cx="132.7" cy="31.1" r="0.53"/><circle cx="134.4" cy="40.8" r="0.44"/><circle cx="128.2" cy="34.3" r="0.44"/><circle cx="123.4" cy="49.7" r="0.30"/><circle cx="112.8" cy="50.4" r="0.55"/><circle cx="111.7" cy="42.3" r="0.38"/><circle cx="109.3" cy="60.5" r="0.47"/><circle cx="126.5" cy="46.6" r="0.49"/><circle cx="141.0" cy="44.0" r="0.43"/><circle cx="107.3" cy="51.6" r="0.50"/><circle cx="119.6" cy="40.0" r="0.38"/><circle cx="112.5" cy="52.2" r="0.32"/><circle cx="115.3" cy="55.4" r="0.54"/><circle cx="117.0" cy="49.2" r="0.59"/><circle cx="117.4" cy="32.6" r="0.36"/><circle cx="123.6" cy="66.3" r="0.52"/><circle cx="147.9" cy="54.4" r="0.44"/><circle cx="137.1" cy="70.0" r="0.48"/><circle cx="134.3" cy="28.2" r="0.47"/><circle cx="115.6" cy="35.8" r="0.49"/><circle cx="129.6" cy="42.2" r="0.26"/><circle cx="132.4" cy="27.8" r="0.38"/><circle cx="138.0" cy="31.2" r="0.34"/><circle cx="112.3" cy="57.3" r="0.27"/><circle cx="124.8" cy="47.6" r="0.53"/><circle cx="109.4" cy="39.5" r="0.25"/><circle cx="115.6" cy="61.0" r="0.59"/><circle cx="114.4" cy="51.8" r="0.48"/><circle cx="135.7" cy="48.1" r="0.30"/><circle cx="128.0" cy="39.6" r="0.52"/><circle cx="124.2" cy="28.8" r="0.28"/><circle cx="115.6" cy="35.5" r="0.58"/><circle cx="128.4" cy="72.1" r="0.25"/><circle cx="147.5" cy="51.2" r="0.28"/><circle cx="139.3" cy="37.2" r="0.38"/><circle cx="115.4" cy="42.6" r="0.30"/><circle cx="133.1" cy="36.2" r="0.47"/><circle cx="116.6" cy="56.5" r="0.58"/><circle cx="132.7" cy="32.6" r="0.27"/><circle cx="148.0" cy="46.4" r="0.37"/><circle cx="111.1" cy="35.5" r="0.46"/><circle cx="123.6" cy="63.5" r="0.38"/><circle cx="121.9" cy="33.1" r="0.53"/><circle cx="113.4" cy="57.7" r="0.56"/><circle cx="149.3" cy="55.0" r="0.55"/><circle cx="118.2" cy="44.2" r="0.53"/><circle cx="120.2" cy="29.3" r="0.28"/><circle cx="109.6" cy="42.7" r="0.51"/><circle cx="139.1" cy="44.9" r="0.49"/><circle cx="118.8" cy="51.8" r="0.51"/><circle cx="133.0" cy="34.4" r="0.53"/><circle cx="130.5" cy="38.5" r="0.56"/><circle cx="120.5" cy="44.2" r="0.31"/><circle cx="124.8" cy="36.3" r="0.39"/><circle cx="120.2" cy="48.5" r="0.60"/><circle cx="123.7" cy="54.8" r="0.53"/><circle cx="125.7" cy="49.1" r="0.60"/><circle cx="139.7" cy="37.5" r="0.34"/><circle cx="131.7" cy="34.7" r="0.52"/><circle cx="138.5" cy="29.0" r="0.26"/><circle cx="145.3" cy="54.9" r="0.41"/><circle cx="117.2" cy="41.1" r="0.59"/><circle cx="128.2" cy="66.8" r="0.58"/><circle cx="122.0" cy="36.9" r="0.31"/><circle cx="146.9" cy="37.0" r="0.27"/><circle cx="133.4" cy="30.6" r="0.59"/><circle cx="137.2" cy="52.5" r="0.58"/><circle cx="123.4" cy="38.2" r="0.52"/><circle cx="129.6" cy="58.2" r="0.25"/><circle cx="126.9" cy="39.6" r="0.57"/><circle cx="133.1" cy="71.3" r="0.56"/><circle cx="148.0" cy="40.4" r="0.41"/><circle cx="123.0" cy="43.2" r="0.27"/><circle cx="125.1" cy="32.8" r="0.55"/><circle cx="135.4" cy="45.1" r="0.27"/><circle cx="116.8" cy="51.2" r="0.32"/><circle cx="113.9" cy="66.7" r="0.57"/><circle cx="139.1" cy="56.6" r="0.27"/><circle cx="127.2" cy="37.2" r="0.26"/><circle cx="133.7" cy="36.9" r="0.25"/><circle cx="137.2" cy="35.0" r="0.40"/><circle cx="135.3" cy="56.9" r="0.50"/></g>
<g fill="#8d8d84"><circle cx="72.9" cy="116.8" r="0.32"/><circle cx="70.8" cy="114.4" r="0.45"/><circle cx="87.2" cy="132.6" r="0.39"/><circle cx="84.5" cy="121.7" r="0.37"/><circle cx="97.2" cy="109.1" r="0.26"/><circle cx="98.9" cy="118.5" r="0.34"/><circle cx="77.5" cy="126.2" r="0.54"/><circle cx="94.1" cy="117.3" r="0.38"/><circle cx="85.5" cy="121.3" r="0.58"/><circle cx="69.0" cy="127.5" r="0.44"/><circle cx="87.1" cy="123.4" r="0.49"/><circle cx="70.8" cy="119.3" r="0.29"/><circle cx="98.8" cy="112.8" r="0.29"/><circle cx="69.2" cy="127.7" r="0.29"/><circle cx="78.4" cy="131.8" r="0.55"/><circle cx="96.0" cy="140.9" r="0.31"/><circle cx="95.7" cy="107.2" r="0.40"/><circle cx="94.4" cy="112.9" r="0.58"/><circle cx="87.8" cy="113.8" r="0.37"/><circle cx="64.6" cy="136.0" r="0.57"/><circle cx="93.9" cy="107.6" r="0.43"/><circle cx="69.4" cy="135.6" r="0.44"/><circle cx="94.0" cy="128.1" r="0.52"/><circle cx="102.4" cy="119.9" r="0.56"/><circle cx="88.7" cy="124.2" r="0.34"/><circle cx="80.3" cy="116.2" r="0.57"/><circle cx="77.2" cy="119.1" r="0.40"/><circle cx="80.7" cy="120.6" r="0.58"/><circle cx="73.6" cy="126.0" r="0.44"/><circle cx="95.1" cy="111.8" r="0.48"/><circle cx="68.3" cy="121.6" r="0.36"/><circle cx="72.4" cy="138.8" r="0.37"/><circle cx="92.8" cy="118.4" r="0.42"/><circle cx="86.8" cy="117.9" r="0.55"/><circle cx="80.2" cy="129.1" r="0.40"/><circle cx="84.8" cy="119.4" r="0.59"/><circle cx="84.9" cy="118.0" r="0.37"/><circle cx="77.3" cy="110.9" r="0.54"/><circle cx="65.9" cy="124.8" r="0.52"/><circle cx="65.4" cy="130.2" r="0.57"/><circle cx="87.2" cy="109.5" r="0.59"/><circle cx="72.1" cy="120.5" r="0.56"/><circle cx="74.4" cy="118.2" r="0.41"/><circle cx="83.4" cy="114.7" r="0.44"/><circle cx="75.7" cy="135.7" r="0.55"/><circle cx="70.2" cy="127.0" r="0.36"/><circle cx="97.2" cy="109.5" r="0.32"/><circle cx="65.9" cy="136.8" r="0.27"/><circle cx="70.6" cy="120.6" r="0.52"/><circle cx="63.2" cy="121.5" r="0.43"/><circle cx="79.8" cy="113.8" r="0.46"/><circle cx="72.2" cy="145.0" r="0.43"/><circle cx="69.4" cy="120.4" r="0.59"/><circle cx="70.3" cy="128.3" r="0.60"/><circle cx="76.2" cy="141.0" r="0.31"/><circle cx="76.1" cy="147.7" r="0.43"/><circle cx="102.2" cy="140.9" r="0.54"/><circle cx="75.5" cy="126.7" r="0.47"/><circle cx="74.6" cy="118.7" r="0.47"/><circle cx="99.7" cy="130.9" r="0.36"/><circle cx="85.0" cy="125.7" r="0.54"/><circle cx="69.4" cy="117.3" r="0.42"/><circle cx="74.3" cy="123.1" r="0.44"/><circle cx="92.1" cy="133.3" r="0.29"/><circle cx="93.5" cy="110.9" r="0.27"/><circle cx="82.6" cy="113.6" r="0.34"/><circle cx="100.3" cy="123.2" r="0.34"/><circle cx="106.8" cy="133.1" r="0.36"/><circle cx="67.5" cy="113.5" r="0.58"/><circle cx="86.1" cy="141.3" r="0.33"/><circle cx="88.5" cy="116.1" r="0.38"/><circle cx="78.3" cy="124.1" r="0.38"/><circle cx="80.7" cy="130.4" r="0.54"/><circle cx="78.6" cy="115.5" r="0.50"/><circle cx="95.5" cy="133.6" r="0.29"/><circle cx="65.8" cy="134.3" r="0.31"/><circle cx="95.6" cy="124.3" r="0.43"/><circle cx="82.3" cy="115.7" r="0.46"/><circle cx="77.8" cy="135.4" r="0.32"/><circle cx="91.1" cy="121.2" r="0.44"/><circle cx="76.0" cy="112.5" r="0.39"/><circle cx="93.8" cy="132.0" r="0.36"/><circle cx="81.5" cy="120.5" r="0.38"/><circle cx="73.0" cy="127.0" r="0.36"/><circle cx="86.7" cy="135.1" r="0.35"/><circle cx="67.5" cy="139.5" r="0.56"/><circle cx="90.9" cy="120.6" r="0.26"/><circle cx="77.5" cy="110.1" r="0.39"/><circle cx="75.1" cy="110.8" r="0.55"/><circle cx="102.0" cy="141.6" r="0.50"/><circle cx="97.9" cy="130.1" r="0.31"/><circle cx="94.8" cy="112.3" r="0.34"/><circle cx="68.0" cy="134.6" r="0.25"/><circle cx="95.7" cy="109.5" r="0.27"/><circle cx="96.4" cy="112.8" r="0.34"/><circle cx="80.6" cy="113.4" r="0.54"/><circle cx="84.2" cy="133.8" r="0.40"/><circle cx="102.8" cy="118.9" r="0.54"/><circle cx="74.8" cy="115.8" r="0.49"/><circle cx="70.7" cy="134.2" r="0.29"/><circle cx="85.9" cy="122.2" r="0.53"/><circle cx="84.3" cy="144.0" r="0.47"/><circle cx="74.4" cy="123.9" r="0.38"/><circle cx="76.7" cy="132.4" r="0.30"/><circle cx="80.5" cy="108.9" r="0.33"/><circle cx="70.2" cy="125.5" r="0.37"/><circle cx="73.3" cy="121.9" r="0.44"/><circle cx="86.1" cy="117.6" r="0.46"/><circle cx="66.0" cy="131.9" r="0.29"/><circle cx="80.9" cy="112.3" r="0.36"/><circle cx="71.9" cy="129.7" r="0.28"/><circle cx="108.4" cy="128.6" r="0.28"/><circle cx="80.8" cy="104.7" r="0.29"/><circle cx="70.4" cy="128.1" r="0.44"/><circle cx="107.5" cy="128.1" r="0.47"/><circle cx="88.7" cy="106.2" r="0.32"/><circle cx="71.8" cy="110.9" r="0.31"/><circle cx="90.0" cy="106.5" r="0.36"/><circle cx="91.0" cy="117.2" r="0.45"/><circle cx="71.1" cy="112.0" r="0.57"/><circle cx="64.3" cy="134.9" r="0.26"/><circle cx="76.2" cy="130.7" r="0.25"/><circle cx="97.0" cy="109.1" r="0.40"/><circle cx="73.7" cy="133.4" r="0.48"/><circle cx="95.6" cy="107.6" r="0.35"/><circle cx="69.3" cy="133.0" r="0.32"/><circle cx="107.1" cy="123.1" r="0.59"/><circle cx="103.1" cy="122.7" r="0.27"/><circle cx="77.5" cy="110.9" r="0.45"/><circle cx="100.8" cy="122.3" r="0.35"/><circle cx="72.5" cy="119.8" r="0.45"/><circle cx="79.3" cy="131.7" r="0.56"/><circle cx="78.1" cy="124.7" r="0.34"/><circle cx="68.4" cy="128.2" r="0.45"/><circle cx="65.7" cy="134.9" r="0.50"/><circle cx="85.8" cy="119.2" r="0.50"/><circle cx="86.8" cy="118.6" r="0.27"/><circle cx="76.7" cy="121.1" r="0.50"/><circle cx="66.1" cy="136.7" r="0.56"/><circle cx="65.2" cy="118.5" r="0.31"/><circle cx="85.1" cy="113.6" r="0.49"/><circle cx="89.2" cy="119.8" r="0.51"/><circle cx="79.7" cy="122.6" r="0.53"/><circle cx="102.3" cy="141.4" r="0.34"/><circle cx="90.9" cy="141.4" r="0.45"/><circle cx="88.6" cy="117.6" r="0.35"/><circle cx="80.0" cy="113.9" r="0.56"/><circle cx="67.0" cy="122.4" r="0.58"/><circle cx="64.0" cy="126.8" r="0.26"/><circle cx="94.1" cy="146.0" r="0.39"/><circle cx="76.5" cy="128.4" r="0.39"/><circle cx="98.1" cy="114.1" r="0.37"/><circle cx="68.4" cy="130.5" r="0.37"/><circle cx="101.0" cy="129.0" r="0.27"/><circle cx="70.3" cy="120.0" r="0.60"/><circle cx="102.3" cy="130.7" r="0.56"/><circle cx="88.3" cy="108.9" r="0.38"/><circle cx="81.5" cy="147.1" r="0.58"/><circle cx="80.2" cy="115.5" r="0.51"/><circle cx="67.2" cy="126.0" r="0.44"/><circle cx="80.8" cy="130.2" r="0.36"/><circle cx="86.8" cy="128.5" r="0.41"/><circle cx="69.2" cy="132.8" r="0.31"/><circle cx="83.0" cy="110.1" r="0.37"/><circle cx="93.1" cy="142.8" r="0.37"/><circle cx="87.8" cy="112.1" r="0.27"/><circle cx="63.8" cy="129.1" r="0.34"/><circle cx="82.5" cy="116.7" r="0.32"/><circle cx="68.4" cy="114.1" r="0.32"/><circle cx="83.2" cy="104.5" r="0.28"/><circle cx="93.4" cy="107.0" r="0.30"/><circle cx="91.9" cy="142.6" r="0.47"/><circle cx="85.4" cy="108.5" r="0.49"/><circle cx="67.7" cy="127.6" r="0.41"/><circle cx="90.9" cy="126.6" r="0.50"/><circle cx="91.4" cy="113.2" r="0.46"/><circle cx="68.0" cy="120.7" r="0.37"/><circle cx="84.8" cy="115.3" r="0.52"/><circle cx="87.6" cy="114.4" r="0.59"/><circle cx="73.9" cy="130.5" r="0.58"/><circle cx="74.2" cy="110.2" r="0.60"/><circle cx="68.4" cy="126.8" r="0.58"/><circle cx="83.8" cy="105.0" r="0.26"/><circle cx="87.5" cy="115.8" r="0.42"/><circle cx="76.6" cy="116.8" r="0.41"/><circle cx="84.9" cy="121.1" r="0.39"/><circle cx="89.2" cy="122.8" r="0.39"/><circle cx="105.0" cy="116.1" r="0.33"/><circle cx="86.7" cy="137.3" r="0.47"/><circle cx="77.2" cy="123.1" r="0.55"/><circle cx="83.3" cy="146.8" r="0.35"/><circle cx="77.6" cy="141.0" r="0.31"/><circle cx="78.2" cy="110.8" r="0.45"/><circle cx="93.3" cy="119.9" r="0.38"/><circle cx="89.5" cy="106.0" r="0.55"/><circle cx="93.1" cy="122.3" r="0.28"/><circle cx="73.7" cy="145.6" r="0.56"/><circle cx="90.5" cy="108.6" r="0.43"/><circle cx="82.0" cy="118.9" r="0.43"/><circle cx="106.7" cy="122.6" r="0.35"/><circle cx="72.5" cy="122.2" r="0.49"/><circle cx="75.8" cy="113.1" r="0.49"/><circle cx="106.9" cy="124.6" r="0.39"/><circle cx="79.3" cy="140.5" r="0.39"/><circle cx="74.4" cy="136.7" r="0.60"/><circle cx="103.4" cy="127.6" r="0.34"/><circle cx="74.7" cy="117.9" r="0.32"/><circle cx="101.2" cy="141.1" r="0.57"/><circle cx="75.2" cy="113.5" r="0.59"/><circle cx="105.4" cy="127.1" r="0.43"/><circle cx="66.3" cy="114.4" r="0.47"/><circle cx="84.9" cy="112.9" r="0.39"/><circle cx="67.7" cy="124.0" r="0.36"/><circle cx="73.8" cy="114.7" r="0.46"/><circle cx="82.5" cy="110.6" r="0.33"/><circle cx="69.0" cy="124.5" r="0.33"/><circle cx="72.2" cy="110.8" r="0.55"/></g>
<g fill="#6d6a50"><circle cx="104.4" cy="86.0" r="0.45"/><circle cx="101.5" cy="87.0" r="0.28"/><circle cx="94.0" cy="90.8" r="0.36"/><circle cx="103.8" cy="87.5" r="0.42"/><circle cx="93.1" cy="86.4" r="0.44"/><circle cx="103.4" cy="90.5" r="0.38"/><circle cx="99.4" cy="90.0" r="0.35"/><circle cx="103.0" cy="84.9" r="0.26"/><circle cx="102.3" cy="91.4" r="0.33"/><circle cx="99.4" cy="92.7" r="0.41"/><circle cx="101.6" cy="81.4" r="0.45"/><circle cx="95.0" cy="80.8" r="0.36"/><circle cx="93.9" cy="90.1" r="0.35"/><circle cx="94.2" cy="78.0" r="0.35"/><circle cx="91.4" cy="80.4" r="0.49"/><circle cx="97.7" cy="79.2" r="0.33"/><circle cx="106.1" cy="87.9" r="0.38"/><circle cx="90.5" cy="84.7" r="0.26"/><circle cx="93.9" cy="81.1" r="0.46"/><circle cx="93.7" cy="87.7" r="0.36"/><circle cx="92.6" cy="84.9" r="0.42"/><circle cx="98.7" cy="78.8" r="0.42"/><circle cx="91.6" cy="81.9" r="0.28"/><circle cx="99.5" cy="87.0" r="0.28"/><circle cx="105.6" cy="88.6" r="0.26"/></g>
<ellipse cx="200" cy="184" rx="18" ry="23" fill="url(#scat)"/>
<path d="M176 163C176 152 181 146 189 146C197 146 202 153 203 162C204 170 205 178 203 185C200 190 194 190 188 186C180 181 176 174 176 163Z" fill="#141414"/>
<g fill="#141414"><circle cx="183.3" cy="153.8" r="0.43"/><circle cx="185.3" cy="156.4" r="1.00"/><circle cx="195.1" cy="152.4" r="0.60"/><circle cx="187.8" cy="165.9" r="0.56"/><circle cx="188.3" cy="174.9" r="0.92"/><circle cx="178.3" cy="162.1" r="0.43"/><circle cx="184.0" cy="180.0" r="0.91"/><circle cx="188.7" cy="173.2" r="0.72"/><circle cx="181.3" cy="173.8" r="0.75"/><circle cx="179.5" cy="176.7" r="0.95"/><circle cx="185.6" cy="164.8" r="0.72"/><circle cx="178.9" cy="172.5" r="0.56"/><circle cx="191.5" cy="157.7" r="0.88"/><circle cx="180.0" cy="160.1" r="0.67"/><circle cx="191.8" cy="163.3" r="0.78"/><circle cx="203.2" cy="170.5" r="0.76"/><circle cx="195.5" cy="179.9" r="0.88"/><circle cx="175.9" cy="166.1" r="0.58"/><circle cx="192.6" cy="180.2" r="0.95"/><circle cx="190.4" cy="170.9" r="0.87"/><circle cx="198.8" cy="162.9" r="0.55"/><circle cx="200.0" cy="158.6" r="0.43"/><circle cx="187.9" cy="162.9" r="0.58"/><circle cx="190.3" cy="178.1" r="0.74"/><circle cx="197.7" cy="178.6" r="0.90"/><circle cx="197.3" cy="177.7" r="0.63"/><circle cx="198.7" cy="168.0" r="0.53"/><circle cx="184.3" cy="164.6" r="0.84"/><circle cx="177.1" cy="171.6" r="0.90"/><circle cx="200.1" cy="176.7" r="0.96"/><circle cx="180.5" cy="164.6" r="0.85"/><circle cx="173.6" cy="166.3" r="0.69"/><circle cx="197.1" cy="156.7" r="0.45"/><circle cx="194.3" cy="172.4" r="0.91"/><circle cx="191.2" cy="181.2" r="0.76"/><circle cx="198.2" cy="164.1" r="0.79"/><circle cx="197.8" cy="168.9" r="0.55"/><circle cx="188.7" cy="159.2" r="0.58"/><circle cx="199.8" cy="171.1" r="0.73"/><circle cx="191.9" cy="154.0" r="0.42"/><circle cx="184.0" cy="165.6" r="0.48"/><circle cx="180.6" cy="161.5" r="0.80"/><circle cx="192.4" cy="171.6" r="0.60"/><circle cx="197.2" cy="153.5" r="0.49"/><circle cx="201.5" cy="174.4" r="0.70"/><circle cx="183.7" cy="164.8" r="0.50"/><circle cx="177.9" cy="163.5" r="0.52"/><circle cx="183.1" cy="170.1" r="0.54"/><circle cx="196.8" cy="157.8" r="0.41"/><circle cx="199.5" cy="162.1" r="0.74"/><circle cx="186.1" cy="158.9" r="0.49"/><circle cx="188.7" cy="168.8" r="0.71"/><circle cx="185.1" cy="180.6" r="0.75"/><circle cx="190.2" cy="178.3" r="0.83"/><circle cx="196.3" cy="169.0" r="0.99"/><circle cx="201.2" cy="169.2" r="0.89"/><circle cx="181.1" cy="178.1" r="0.95"/><circle cx="204.5" cy="167.0" r="0.64"/><circle cx="195.7" cy="170.2" r="0.81"/><circle cx="194.5" cy="173.6" r="0.52"/></g>
<g fill="#111" opacity="1"><circle cx="196.2" cy="176.6" r="0.69"/><circle cx="217.9" cy="199.6" r="0.47"/><circle cx="203.9" cy="199.0" r="0.66"/><circle cx="211.0" cy="191.8" r="0.34"/><circle cx="207.5" cy="202.3" r="0.60"/><circle cx="192.6" cy="195.9" r="0.41"/><circle cx="194.5" cy="208.3" r="0.55"/><circle cx="210.9" cy="166.7" r="0.62"/><circle cx="216.2" cy="205.2" r="0.59"/><circle cx="213.3" cy="200.1" r="0.52"/><circle cx="202.2" cy="201.3" r="0.60"/><circle cx="214.4" cy="174.9" r="0.68"/><circle cx="204.9" cy="207.3" r="0.30"/><circle cx="217.1" cy="199.4" r="0.36"/><circle cx="213.5" cy="171.6" r="0.34"/><circle cx="202.8" cy="171.8" r="0.47"/><circle cx="215.4" cy="194.3" r="0.57"/><circle cx="201.0" cy="199.2" r="0.61"/><circle cx="209.1" cy="207.1" r="0.62"/><circle cx="201.4" cy="164.4" r="0.54"/><circle cx="213.4" cy="177.0" r="0.52"/><circle cx="213.4" cy="199.6" r="0.25"/><circle cx="203.7" cy="160.8" r="0.30"/><circle cx="212.7" cy="180.9" r="0.52"/><circle cx="202.8" cy="176.8" r="0.35"/><circle cx="199.9" cy="202.2" r="0.53"/><circle cx="198.2" cy="164.4" r="0.37"/><circle cx="209.6" cy="182.1" r="0.55"/><circle cx="212.6" cy="166.0" r="0.56"/><circle cx="191.2" cy="201.1" r="0.33"/><circle cx="197.6" cy="207.9" r="0.41"/><circle cx="196.3" cy="204.5" r="0.52"/><circle cx="215.0" cy="179.7" r="0.47"/><circle cx="216.8" cy="185.3" r="0.69"/><circle cx="195.3" cy="201.5" r="0.32"/><circle cx="204.8" cy="160.0" r="0.33"/><circle cx="216.5" cy="182.7" r="0.61"/><circle cx="197.0" cy="177.6" r="0.30"/><circle cx="205.5" cy="203.1" r="0.48"/><circle cx="200.5" cy="206.4" r="0.65"/><circle cx="208.7" cy="163.8" r="0.53"/><circle cx="202.4" cy="207.9" r="0.41"/><circle cx="208.5" cy="191.6" r="0.42"/><circle cx="204.6" cy="193.8" r="0.66"/><circle cx="203.9" cy="178.2" r="0.69"/><circle cx="191.6" cy="201.7" r="0.56"/><circle cx="205.6" cy="182.4" r="0.59"/><circle cx="215.0" cy="196.4" r="0.59"/><circle cx="191.0" cy="176.3" r="0.31"/><circle cx="216.7" cy="204.6" r="0.32"/><circle cx="206.5" cy="188.8" r="0.27"/><circle cx="201.0" cy="197.4" r="0.54"/><circle cx="197.9" cy="198.1" r="0.38"/><circle cx="205.2" cy="181.0" r="0.69"/><circle cx="208.2" cy="200.2" r="0.55"/><circle cx="200.7" cy="208.2" r="0.57"/><circle cx="209.3" cy="173.9" r="0.32"/><circle cx="206.1" cy="201.3" r="0.61"/><circle cx="199.7" cy="167.0" r="0.48"/><circle cx="214.6" cy="168.1" r="0.58"/><circle cx="194.8" cy="175.6" r="0.27"/><circle cx="198.3" cy="179.1" r="0.69"/><circle cx="216.9" cy="169.4" r="0.39"/><circle cx="216.4" cy="169.9" r="0.39"/><circle cx="202.3" cy="165.4" r="0.37"/><circle cx="201.0" cy="179.3" r="0.68"/><circle cx="197.5" cy="170.2" r="0.66"/><circle cx="202.6" cy="201.9" r="0.54"/><circle cx="211.8" cy="175.7" r="0.32"/><circle cx="211.2" cy="183.5" r="0.50"/><circle cx="208.8" cy="197.6" r="0.37"/><circle cx="200.2" cy="205.9" r="0.49"/><circle cx="198.1" cy="191.5" r="0.37"/><circle cx="211.6" cy="162.1" r="0.62"/><circle cx="205.9" cy="177.7" r="0.67"/><circle cx="197.4" cy="172.2" r="0.28"/><circle cx="205.4" cy="197.7" r="0.56"/><circle cx="201.6" cy="200.4" r="0.30"/><circle cx="198.6" cy="192.2" r="0.69"/><circle cx="207.7" cy="194.6" r="0.60"/><circle cx="201.0" cy="207.0" r="0.58"/><circle cx="199.6" cy="179.6" r="0.61"/><circle cx="199.8" cy="169.3" r="0.64"/><circle cx="204.9" cy="186.1" r="0.55"/><circle cx="215.2" cy="166.7" r="0.40"/><circle cx="191.8" cy="180.7" r="0.48"/><circle cx="213.9" cy="193.4" r="0.51"/><circle cx="201.3" cy="188.7" r="0.37"/><circle cx="213.7" cy="199.4" r="0.63"/><circle cx="194.2" cy="193.6" r="0.59"/><circle cx="204.0" cy="204.9" r="0.65"/><circle cx="210.8" cy="201.0" r="0.54"/><circle cx="214.6" cy="166.6" r="0.57"/><circle cx="209.7" cy="190.6" r="0.37"/><circle cx="191.9" cy="190.2" r="0.62"/><circle cx="197.6" cy="170.7" r="0.35"/><circle cx="192.6" cy="193.8" r="0.69"/><circle cx="212.5" cy="178.0" r="0.56"/><circle cx="192.0" cy="201.9" r="0.40"/><circle cx="190.1" cy="191.5" r="0.31"/><circle cx="197.7" cy="163.0" r="0.45"/><circle cx="205.5" cy="200.4" r="0.27"/><circle cx="213.2" cy="165.5" r="0.35"/><circle cx="207.6" cy="177.0" r="0.40"/><circle cx="205.9" cy="170.9" r="0.61"/><circle cx="195.9" cy="202.0" r="0.61"/><circle cx="205.0" cy="161.5" r="0.60"/><circle cx="190.8" cy="185.2" r="0.44"/><circle cx="191.8" cy="191.5" r="0.58"/><circle cx="206.4" cy="180.0" r="0.48"/></g>
<circle cx="230" cy="216.5" r="16.8" fill="#151515"/>
<g fill="#7a7a70"><circle cx="223.9" cy="212.7" r="0.50"/><circle cx="234.9" cy="202.6" r="0.50"/><circle cx="218.1" cy="220.0" r="0.36"/><circle cx="228.7" cy="223.0" r="0.38"/><circle cx="223.8" cy="219.0" r="0.30"/><circle cx="228.9" cy="227.7" r="0.49"/><circle cx="229.8" cy="201.9" r="0.43"/><circle cx="229.3" cy="212.8" r="0.25"/><circle cx="238.3" cy="206.9" r="0.32"/><circle cx="226.3" cy="221.3" r="0.50"/><circle cx="221.3" cy="227.7" r="0.36"/><circle cx="231.8" cy="206.4" r="0.48"/><circle cx="232.9" cy="206.6" r="0.28"/><circle cx="240.6" cy="209.7" r="0.50"/><circle cx="218.2" cy="221.5" r="0.45"/><circle cx="233.0" cy="211.9" r="0.30"/><circle cx="222.1" cy="211.8" r="0.46"/><circle cx="232.3" cy="206.5" r="0.47"/><circle cx="226.1" cy="215.6" r="0.41"/><circle cx="237.8" cy="209.6" r="0.30"/><circle cx="221.7" cy="207.0" r="0.27"/><circle cx="229.4" cy="213.1" r="0.35"/><circle cx="224.1" cy="205.3" r="0.41"/><circle cx="226.3" cy="206.9" r="0.48"/><circle cx="226.9" cy="214.3" r="0.50"/><circle cx="231.3" cy="225.8" r="0.46"/><circle cx="221.4" cy="206.9" r="0.27"/><circle cx="237.0" cy="218.7" r="0.30"/><circle cx="223.2" cy="203.7" r="0.48"/><circle cx="230.2" cy="211.7" r="0.43"/><circle cx="225.1" cy="216.1" r="0.47"/><circle cx="230.6" cy="216.1" r="0.39"/><circle cx="234.6" cy="206.9" r="0.40"/><circle cx="231.3" cy="212.5" r="0.39"/><circle cx="229.9" cy="214.2" r="0.45"/><circle cx="224.9" cy="217.9" r="0.30"/><circle cx="225.5" cy="218.6" r="0.39"/></g>
<g fill="#111" opacity="1"><circle cx="189.5" cy="149.9" r="1.08"/><circle cx="245.2" cy="229.1" r="0.58"/><circle cx="191.2" cy="171.8" r="1.11"/><circle cx="166.6" cy="203.7" r="1.28"/><circle cx="236.1" cy="140.7" r="0.56"/><circle cx="162.7" cy="212.7" r="0.98"/><circle cx="208.3" cy="187.8" r="0.83"/><circle cx="218.4" cy="208.1" r="1.23"/><circle cx="232.1" cy="223.6" r="1.23"/><circle cx="243.8" cy="215.3" r="0.52"/><circle cx="226.3" cy="229.2" r="0.84"/><circle cx="248.4" cy="158.9" r="1.25"/><circle cx="199.5" cy="214.2" r="0.70"/><circle cx="183.7" cy="176.6" r="0.76"/><circle cx="160.6" cy="186.5" r="1.28"/><circle cx="223.3" cy="237.9" r="1.11"/><circle cx="243.7" cy="244.4" r="1.10"/><circle cx="180.7" cy="166.2" r="0.83"/></g>
<g fill="#111"><circle cx="237" cy="52" r="1.2"/><circle cx="139" cy="84" r="1.5"/><circle cx="137" cy="105" r="1"/><circle cx="179" cy="114" r="1.6"/><circle cx="179" cy="148" r="1.2"/><circle cx="166" cy="139" r="1.2"/><circle cx="152" cy="147" r="1"/><circle cx="199" cy="122" r="0.9"/><circle cx="250" cy="184" r="1.5"/><circle cx="258" cy="190" r="1.4"/><circle cx="263" cy="199" r="1.2"/><circle cx="243" cy="193" r="1.5"/><circle cx="226" cy="176" r="1.1"/><circle cx="187" cy="232" r="1"/><circle cx="207" cy="232" r="1.4"/><circle cx="220" cy="227" r="1"/><circle cx="165" cy="172" r="1"/><circle cx="231" cy="163" r="1.2"/><ellipse cx="241" cy="193" rx="2" ry="1.2" transform="rotate(-30 241 193)"/></g>
<g stroke="#222" stroke-width="0.5" opacity="0.6"><path d="M139 84V72M179 114V140M237 52V68"/></g>
</g><g filter="url(#soft)" transform="translate(265,0)">
<rect width="265" height="265" fill="url(#yel)"/>
<rect width="265" height="265" fill="url(#yel2)"/>
<path d="M117 0H134L130 16L122 26L116 12Z" fill="#f3df6a" opacity="0.45"/>
<path d="M0 0H117L115 16L106 26L101 44L103 64L96 73L88 79L85 93L84 101L78 101.5L72 104L67 108L63.5 113L61.5 119L60.5 125L60.5 165L0 165Z" fill="url(#lig)"/>
<path d="M0 214L8 214L14.5 211L20 209L28 212L36 217L40 223L45 227L50 238L54 251L57 265H0Z" fill="#dadad3"/>
<g stroke="#5a5a40" stroke-width="0.45" opacity="0.3" fill="none"><path d="M38 0V140M57 0V110M80 0V70M28 220V265M84 160V265M102 150V265M66 232V265M123 0V24M160 0V40M195 0V30M238 52V70M168 110V150M12 0V130"/></g>
<g stroke="#b0b0a8" stroke-width="0.45" opacity="0.3" fill="none"><path d="M0 30H90M0 78H80"/></g>
<path d="M0 138L6 132L12 126L16 130L20 120L22 108L26 108L30 124L36 136L44 144L52 147L60 144L60 165L0 165Z" fill="#1c1c1c" opacity="0.4" filter="url(#blur3)"/>
<g fill="#1a1a1a"><circle cx="3.0" cy="133.0" r="0.63"/><circle cx="10.7" cy="119.8" r="0.48"/><circle cx="10.1" cy="118.6" r="0.32"/><circle cx="1.4" cy="137.0" r="0.35"/><circle cx="16.5" cy="136.7" r="0.36"/><circle cx="12.5" cy="128.8" r="0.77"/><circle cx="7.9" cy="141.4" r="0.79"/><circle cx="17.2" cy="117.5" r="0.44"/><circle cx="2.4" cy="124.7" r="0.45"/><circle cx="3.6" cy="147.7" r="0.59"/><circle cx="7.4" cy="143.2" r="0.57"/><circle cx="1.2" cy="119.0" r="0.40"/><circle cx="8.6" cy="144.3" r="0.46"/><circle cx="9.1" cy="141.7" r="0.45"/><circle cx="14.0" cy="147.2" r="0.42"/><circle cx="10.5" cy="141.3" r="0.74"/><circle cx="5.8" cy="145.6" r="0.79"/><circle cx="8.4" cy="123.1" r="0.68"/><circle cx="9.8" cy="125.2" r="0.32"/><circle cx="15.3" cy="144.0" r="0.59"/><circle cx="6.3" cy="149.2" r="0.65"/><circle cx="11.6" cy="141.9" r="0.53"/><circle cx="18.9" cy="148.3" r="0.54"/><circle cx="1.2" cy="143.9" r="0.65"/><circle cx="19.9" cy="143.4" r="0.71"/><circle cx="7.7" cy="131.5" r="0.63"/><circle cx="9.2" cy="114.6" r="0.38"/><circle cx="1.2" cy="123.1" r="0.68"/><circle cx="5.0" cy="123.8" r="0.50"/><circle cx="1.6" cy="149.1" r="0.52"/><circle cx="17.7" cy="140.6" r="0.71"/><circle cx="5.6" cy="148.9" r="0.51"/><circle cx="17.7" cy="134.4" r="0.78"/><circle cx="3.5" cy="125.1" r="0.42"/><circle cx="9.7" cy="129.3" r="0.59"/><circle cx="0.1" cy="130.6" r="0.51"/><circle cx="11.3" cy="134.7" r="0.78"/><circle cx="10.3" cy="144.6" r="0.61"/><circle cx="1.1" cy="144.2" r="0.75"/><circle cx="17.5" cy="146.9" r="0.70"/><circle cx="8.0" cy="135.6" r="0.35"/><circle cx="1.2" cy="143.0" r="0.33"/><circle cx="3.2" cy="128.1" r="0.47"/><circle cx="0.0" cy="118.1" r="0.38"/><circle cx="7.3" cy="122.0" r="0.31"/><circle cx="12.3" cy="149.1" r="0.37"/><circle cx="6.9" cy="130.1" r="0.48"/><circle cx="17.0" cy="123.4" r="0.80"/><circle cx="9.7" cy="138.0" r="0.34"/><circle cx="6.9" cy="122.1" r="0.43"/><circle cx="3.2" cy="148.1" r="0.31"/><circle cx="10.6" cy="150.9" r="0.37"/><circle cx="0.5" cy="140.4" r="0.56"/><circle cx="17.3" cy="151.5" r="0.65"/><circle cx="7.3" cy="130.5" r="0.38"/><circle cx="10.7" cy="146.7" r="0.69"/><circle cx="4.5" cy="133.3" r="0.71"/><circle cx="17.1" cy="151.7" r="0.70"/><circle cx="14.8" cy="147.8" r="0.41"/><circle cx="7.1" cy="139.7" r="0.31"/><circle cx="5.6" cy="115.4" r="0.43"/><circle cx="19.1" cy="144.6" r="0.52"/><circle cx="19.8" cy="150.6" r="0.78"/><circle cx="4.4" cy="134.6" r="0.41"/><circle cx="4.1" cy="127.5" r="0.61"/><circle cx="16.8" cy="149.7" r="0.54"/><circle cx="16.0" cy="143.6" r="0.34"/><circle cx="18.2" cy="143.8" r="0.69"/><circle cx="9.6" cy="146.1" r="0.39"/><circle cx="6.7" cy="147.1" r="0.70"/><circle cx="7.9" cy="151.4" r="0.50"/><circle cx="14.5" cy="150.8" r="0.39"/><circle cx="3.0" cy="123.7" r="0.75"/><circle cx="2.9" cy="147.5" r="0.71"/><circle cx="13.1" cy="151.6" r="0.48"/><circle cx="2.6" cy="140.6" r="0.31"/><circle cx="13.0" cy="151.4" r="0.56"/><circle cx="8.7" cy="150.5" r="0.74"/><circle cx="4.2" cy="148.0" r="0.43"/><circle cx="4.8" cy="131.8" r="0.59"/><circle cx="8.4" cy="130.4" r="0.37"/><circle cx="7.1" cy="150.0" r="0.53"/><circle cx="18.1" cy="141.6" r="0.51"/><circle cx="10.0" cy="150.2" r="0.57"/><circle cx="0.4" cy="139.8" r="0.52"/><circle cx="0.1" cy="126.8" r="0.70"/><circle cx="9.5" cy="126.3" r="0.66"/><circle cx="6.5" cy="140.8" r="0.56"/><circle cx="15.7" cy="140.8" r="0.35"/><circle cx="5.0" cy="140.9" r="0.44"/><circle cx="10.2" cy="146.7" r="0.58"/><circle cx="18.2" cy="146.4" r="0.52"/><circle cx="10.1" cy="142.4" r="0.56"/><circle cx="9.0" cy="144.6" r="0.57"/><circle cx="18.8" cy="138.4" r="0.65"/><circle cx="18.8" cy="149.2" r="0.43"/><circle cx="18.9" cy="140.9" r="0.72"/><circle cx="2.4" cy="124.3" r="0.52"/><circle cx="4.8" cy="119.9" r="0.34"/><circle cx="15.7" cy="144.0" r="0.75"/><circle cx="14.3" cy="125.3" r="0.63"/><circle cx="17.7" cy="124.6" r="0.78"/><circle cx="19.1" cy="128.6" r="0.50"/><circle cx="19.8" cy="138.7" r="0.72"/><circle cx="8.6" cy="125.7" r="0.56"/><circle cx="3.9" cy="133.6" r="0.46"/><circle cx="0.4" cy="145.4" r="0.58"/><circle cx="0.4" cy="137.2" r="0.47"/><circle cx="10.2" cy="142.8" r="0.33"/><circle cx="15.8" cy="151.7" r="0.79"/><circle cx="5.3" cy="122.2" r="0.32"/><circle cx="5.4" cy="146.8" r="0.36"/><circle cx="18.2" cy="136.6" r="0.71"/><circle cx="3.0" cy="130.4" r="0.76"/><circle cx="14.0" cy="141.2" r="0.34"/><circle cx="13.8" cy="118.6" r="0.51"/><circle cx="18.8" cy="119.8" r="0.62"/><circle cx="1.7" cy="147.4" r="0.73"/><circle cx="17.3" cy="119.4" r="0.53"/><circle cx="11.1" cy="133.6" r="0.76"/><circle cx="2.6" cy="130.8" r="0.56"/><circle cx="2.2" cy="129.5" r="0.38"/><circle cx="4.0" cy="117.9" r="0.46"/><circle cx="15.2" cy="132.3" r="0.44"/><circle cx="3.6" cy="139.1" r="0.47"/><circle cx="5.0" cy="113.9" r="0.31"/><circle cx="11.0" cy="145.7" r="0.39"/><circle cx="18.7" cy="138.3" r="0.35"/><circle cx="8.6" cy="147.8" r="0.55"/><circle cx="7.9" cy="148.2" r="0.55"/><circle cx="19.6" cy="144.5" r="0.47"/><circle cx="14.1" cy="148.1" r="0.62"/><circle cx="7.0" cy="136.0" r="0.33"/><circle cx="1.4" cy="123.9" r="0.67"/><circle cx="3.3" cy="130.2" r="0.34"/><circle cx="17.4" cy="148.4" r="0.64"/><circle cx="4.8" cy="131.4" r="0.45"/><circle cx="3.2" cy="137.8" r="0.52"/><circle cx="19.2" cy="130.6" r="0.79"/><circle cx="4.9" cy="140.5" r="0.78"/></g>
<g fill="#1a1a1a"><circle cx="40.7" cy="137.8" r="0.30"/><circle cx="44.2" cy="140.3" r="0.55"/><circle cx="45.1" cy="133.4" r="0.30"/><circle cx="32.7" cy="136.1" r="0.50"/><circle cx="30.7" cy="123.4" r="0.45"/><circle cx="47.6" cy="134.8" r="0.56"/><circle cx="49.7" cy="150.5" r="0.66"/><circle cx="41.7" cy="153.4" r="0.46"/><circle cx="34.5" cy="155.7" r="0.66"/><circle cx="31.3" cy="147.9" r="0.72"/><circle cx="48.8" cy="153.7" r="0.67"/><circle cx="34.2" cy="152.0" r="0.56"/><circle cx="55.0" cy="144.1" r="0.70"/><circle cx="47.5" cy="152.3" r="0.75"/><circle cx="50.8" cy="148.9" r="0.41"/><circle cx="34.0" cy="122.2" r="0.48"/><circle cx="55.1" cy="128.3" r="0.58"/><circle cx="48.8" cy="147.5" r="0.64"/><circle cx="30.1" cy="143.7" r="0.70"/><circle cx="45.1" cy="150.5" r="0.57"/><circle cx="32.0" cy="148.3" r="0.67"/><circle cx="32.2" cy="135.6" r="0.43"/><circle cx="36.2" cy="150.0" r="0.67"/><circle cx="44.8" cy="155.5" r="0.49"/><circle cx="50.5" cy="143.4" r="0.68"/><circle cx="49.3" cy="147.2" r="0.34"/><circle cx="37.6" cy="130.7" r="0.67"/><circle cx="47.0" cy="137.6" r="0.31"/><circle cx="38.1" cy="125.1" r="0.64"/><circle cx="50.3" cy="149.1" r="0.45"/><circle cx="43.9" cy="144.5" r="0.53"/><circle cx="56.8" cy="129.1" r="0.40"/><circle cx="58.1" cy="155.5" r="0.31"/><circle cx="54.6" cy="142.8" r="0.78"/><circle cx="38.1" cy="142.5" r="0.40"/><circle cx="36.3" cy="154.9" r="0.59"/><circle cx="45.7" cy="130.4" r="0.78"/><circle cx="54.6" cy="129.9" r="0.55"/><circle cx="51.1" cy="153.6" r="0.42"/><circle cx="44.6" cy="153.8" r="0.31"/><circle cx="44.8" cy="117.5" r="0.53"/><circle cx="34.2" cy="137.5" r="0.47"/><circle cx="55.2" cy="138.1" r="0.30"/><circle cx="55.2" cy="150.5" r="0.36"/><circle cx="51.4" cy="154.5" r="0.75"/><circle cx="41.2" cy="137.1" r="0.50"/><circle cx="47.7" cy="156.0" r="0.48"/><circle cx="38.3" cy="141.8" r="0.32"/><circle cx="55.0" cy="128.1" r="0.44"/><circle cx="37.5" cy="154.7" r="0.43"/><circle cx="35.7" cy="144.3" r="0.49"/><circle cx="56.5" cy="155.1" r="0.71"/><circle cx="57.4" cy="147.6" r="0.77"/><circle cx="51.6" cy="145.4" r="0.32"/><circle cx="43.5" cy="150.1" r="0.68"/><circle cx="38.6" cy="147.9" r="0.32"/><circle cx="33.8" cy="154.5" r="0.54"/><circle cx="38.9" cy="139.0" r="0.67"/><circle cx="37.8" cy="155.5" r="0.63"/><circle cx="46.7" cy="137.5" r="0.50"/><circle cx="34.8" cy="131.8" r="0.40"/><circle cx="44.9" cy="154.0" r="0.41"/><circle cx="59.9" cy="154.0" r="0.52"/><circle cx="35.8" cy="130.3" r="0.35"/><circle cx="32.7" cy="139.0" r="0.42"/><circle cx="47.1" cy="135.8" r="0.74"/><circle cx="42.4" cy="150.5" r="0.51"/><circle cx="41.3" cy="144.7" r="0.47"/><circle cx="38.3" cy="125.2" r="0.78"/><circle cx="45.1" cy="129.5" r="0.61"/><circle cx="36.5" cy="153.1" r="0.44"/><circle cx="42.0" cy="135.4" r="0.52"/><circle cx="55.5" cy="155.0" r="0.74"/><circle cx="31.0" cy="121.1" r="0.65"/><circle cx="44.2" cy="153.8" r="0.59"/><circle cx="41.7" cy="115.5" r="0.76"/><circle cx="55.7" cy="152.3" r="0.79"/><circle cx="33.3" cy="135.4" r="0.38"/><circle cx="50.5" cy="144.6" r="0.77"/><circle cx="49.4" cy="149.8" r="0.68"/><circle cx="46.5" cy="142.7" r="0.32"/><circle cx="37.0" cy="151.3" r="0.76"/><circle cx="39.1" cy="147.9" r="0.36"/><circle cx="49.1" cy="135.6" r="0.65"/><circle cx="32.1" cy="128.7" r="0.56"/><circle cx="41.6" cy="146.3" r="0.41"/><circle cx="30.3" cy="146.8" r="0.45"/><circle cx="58.8" cy="142.8" r="0.62"/><circle cx="44.3" cy="153.5" r="0.42"/><circle cx="58.8" cy="135.4" r="0.65"/></g>
<path d="M0 150L5 148L10 146L14 142L18 140L20 136L21 125L22 113L23 103L23.5 96L25 96L25.5 103L27 113L29 125L31 135L33 144L36 150L42 153L50 154L56 152L60 146L62 130L110 135L107 146L103 158L99 171L96 160L92 166L88 166L85 153L80 152L76 156L73 178L69 178L68 232L63 233L60 212L55 200L50 206L45 198L40 208L38 217L34 214L30 210L25 214L20 212L17 184L12 184L10 179L5 178L0 174Z" fill="#121212"/>
<circle cx="24" cy="92" r="3.6" fill="#161616"/>
<circle cx="129" cy="49.5" r="25" fill="#151514"/>
<circle cx="99" cy="84.5" r="10" fill="#1a1a16"/>
<circle cx="85.5" cy="127" r="25.5" fill="#151514"/>
<g fill="#8d8d84"><circle cx="122.2" cy="36.2" r="0.48"/><circle cx="121.2" cy="62.2" r="0.32"/><circle cx="134.8" cy="30.6" r="0.32"/><circle cx="141.6" cy="47.1" r="0.33"/><circle cx="131.5" cy="64.1" r="0.58"/><circle cx="142.4" cy="54.8" r="0.56"/><circle cx="126.5" cy="26.7" r="0.37"/><circle cx="137.8" cy="69.9" r="0.26"/><circle cx="121.8" cy="37.3" r="0.37"/><circle cx="138.1" cy="30.7" r="0.27"/><circle cx="115.2" cy="51.8" r="0.32"/><circle cx="111.4" cy="60.5" r="0.26"/><circle cx="134.6" cy="50.7" r="0.34"/><circle cx="128.6" cy="27.7" r="0.35"/><circle cx="126.3" cy="36.8" r="0.25"/><circle cx="129.8" cy="27.5" r="0.58"/><circle cx="137.9" cy="45.2" r="0.51"/><circle cx="137.9" cy="31.4" r="0.36"/><circle cx="123.1" cy="62.0" r="0.28"/><circle cx="118.6" cy="69.7" r="0.60"/><circle cx="109.6" cy="49.7" r="0.33"/><circle cx="113.3" cy="58.5" r="0.51"/><circle cx="139.7" cy="34.1" r="0.54"/><circle cx="128.2" cy="39.3" r="0.34"/><circle cx="122.3" cy="62.3" r="0.43"/><circle cx="131.4" cy="70.0" r="0.60"/><circle cx="141.7" cy="59.0" r="0.54"/><circle cx="136.3" cy="56.3" r="0.45"/><circle cx="141.7" cy="43.5" r="0.41"/><circle cx="127.7" cy="69.7" r="0.29"/><circle cx="114.1" cy="39.2" r="0.38"/><circle cx="113.9" cy="38.6" r="0.25"/><circle cx="125.0" cy="59.1" r="0.44"/><circle cx="111.5" cy="43.8" r="0.31"/><circle cx="124.0" cy="35.6" r="0.36"/><circle cx="119.7" cy="61.1" r="0.60"/><circle cx="122.3" cy="57.2" r="0.32"/><circle cx="135.3" cy="36.3" r="0.41"/><circle cx="115.1" cy="32.5" r="0.47"/><circle cx="125.6" cy="65.7" r="0.29"/><circle cx="108.4" cy="50.7" r="0.32"/><circle cx="144.6" cy="65.5" r="0.42"/><circle cx="143.9" cy="39.2" r="0.31"/><circle cx="131.4" cy="38.9" r="0.55"/><circle cx="133.7" cy="40.9" r="0.39"/><circle cx="114.8" cy="47.9" r="0.34"/><circle cx="125.6" cy="28.0" r="0.45"/><circle cx="129.2" cy="45.0" r="0.29"/><circle cx="115.2" cy="39.5" r="0.36"/><circle cx="113.6" cy="58.0" r="0.48"/><circle cx="114.6" cy="54.5" r="0.47"/><circle cx="117.9" cy="50.2" r="0.52"/><circle cx="119.6" cy="52.0" r="0.29"/><circle cx="113.7" cy="55.4" r="0.47"/><circle cx="146.1" cy="59.2" r="0.43"/><circle cx="137.1" cy="46.9" r="0.60"/><circle cx="126.7" cy="28.9" r="0.59"/><circle cx="106.5" cy="50.6" r="0.31"/><circle cx="134.3" cy="28.0" r="0.37"/><circle cx="129.4" cy="40.3" r="0.35"/><circle cx="132.5" cy="41.5" r="0.57"/><circle cx="140.8" cy="68.4" r="0.56"/><circle cx="111.0" cy="46.0" r="0.56"/><circle cx="112.5" cy="43.5" r="0.29"/><circle cx="132.5" cy="38.2" r="0.45"/><circle cx="133.9" cy="39.0" r="0.59"/><circle cx="112.9" cy="39.9" r="0.25"/><circle cx="137.7" cy="51.4" r="0.40"/><circle cx="107.3" cy="47.8" r="0.33"/><circle cx="127.0" cy="46.7" r="0.37"/><circle cx="113.7" cy="40.6" r="0.47"/><circle cx="120.7" cy="50.8" r="0.34"/><circle cx="133.2" cy="55.2" r="0.55"/><circle cx="131.9" cy="35.2" r="0.25"/><circle cx="118.4" cy="35.9" r="0.48"/><circle cx="108.1" cy="57.2" r="0.34"/><circle cx="119.7" cy="55.7" r="0.52"/><circle cx="146.0" cy="50.8" r="0.30"/><circle cx="115.9" cy="33.4" r="0.36"/><circle cx="127.4" cy="54.3" r="0.52"/><circle cx="128.6" cy="47.7" r="0.51"/><circle cx="109.7" cy="53.8" r="0.33"/><circle cx="118.8" cy="66.6" r="0.55"/><circle cx="126.2" cy="38.0" r="0.40"/><circle cx="133.0" cy="33.3" r="0.47"/><circle cx="139.5" cy="47.2" r="0.26"/><circle cx="128.3" cy="60.7" r="0.58"/><circle cx="128.7" cy="36.4" r="0.36"/><circle cx="130.5" cy="71.4" r="0.49"/><circle cx="117.4" cy="29.9" r="0.54"/><circle cx="122.1" cy="29.3" r="0.50"/><circle cx="117.5" cy="44.0" r="0.47"/><circle cx="136.4" cy="50.8" r="0.37"/><circle cx="122.5" cy="32.4" r="0.51"/><circle cx="137.6" cy="30.5" r="0.27"/><circle cx="143.8" cy="33.3" r="0.29"/><circle cx="140.9" cy="32.6" r="0.54"/><circle cx="120.6" cy="40.4" r="0.28"/><circle cx="129.5" cy="39.1" r="0.40"/><circle cx="126.0" cy="35.9" r="0.59"/><circle cx="107.8" cy="49.0" r="0.26"/><circle cx="116.0" cy="57.4" r="0.37"/><circle cx="124.3" cy="33.3" r="0.55"/><circle cx="139.3" cy="49.6" r="0.59"/><circle cx="131.9" cy="40.0" r="0.37"/><circle cx="134.8" cy="39.3" r="0.35"/><circle cx="133.5" cy="30.8" r="0.47"/><circle cx="134.2" cy="45.2" r="0.26"/><circle cx="132.2" cy="60.9" r="0.43"/><circle cx="113.3" cy="64.4" r="0.41"/><circle cx="109.4" cy="45.6" r="0.48"/><circle cx="139.3" cy="33.9" r="0.31"/><circle cx="110.2" cy="57.1" r="0.29"/><circle cx="108.0" cy="54.6" r="0.32"/><circle cx="122.9" cy="67.8" r="0.30"/><circle cx="119.9" cy="48.2" r="0.32"/><circle cx="149.4" cy="47.4" r="0.40"/><circle cx="112.5" cy="61.6" r="0.43"/><circle cx="118.5" cy="37.9" r="0.46"/><circle cx="112.6" cy="60.7" r="0.40"/><circle cx="111.2" cy="40.6" r="0.33"/><circle cx="125.3" cy="28.3" r="0.50"/><circle cx="140.4" cy="34.3" r="0.41"/><circle cx="111.2" cy="59.3" r="0.47"/><circle cx="118.4" cy="39.3" r="0.58"/><circle cx="136.6" cy="66.5" r="0.39"/><circle cx="106.3" cy="50.9" r="0.44"/><circle cx="139.8" cy="66.7" r="0.43"/><circle cx="125.6" cy="33.4" r="0.54"/><circle cx="114.4" cy="47.5" r="0.32"/><circle cx="123.2" cy="36.3" r="0.29"/><circle cx="116.0" cy="56.8" r="0.37"/><circle cx="128.0" cy="60.3" r="0.58"/><circle cx="118.4" cy="47.7" r="0.39"/><circle cx="131.0" cy="57.5" r="0.53"/><circle cx="118.5" cy="37.7" r="0.33"/><circle cx="142.3" cy="46.4" r="0.54"/><circle cx="135.4" cy="35.1" r="0.44"/><circle cx="136.0" cy="39.9" r="0.34"/><circle cx="120.1" cy="53.9" r="0.50"/><circle cx="114.1" cy="51.4" r="0.48"/><circle cx="114.6" cy="66.4" r="0.27"/><circle cx="139.3" cy="30.2" r="0.30"/><circle cx="138.0" cy="33.5" r="0.25"/><circle cx="131.2" cy="36.1" r="0.57"/><circle cx="131.4" cy="40.4" r="0.46"/><circle cx="132.7" cy="31.1" r="0.53"/><circle cx="134.4" cy="40.8" r="0.44"/><circle cx="128.2" cy="34.3" r="0.44"/><circle cx="123.4" cy="49.7" r="0.30"/><circle cx="112.8" cy="50.4" r="0.55"/><circle cx="111.7" cy="42.3" r="0.38"/><circle cx="109.3" cy="60.5" r="0.47"/><circle cx="126.5" cy="46.6" r="0.49"/><circle cx="141.0" cy="44.0" r="0.43"/><circle cx="107.3" cy="51.6" r="0.50"/><circle cx="119.6" cy="40.0" r="0.38"/><circle cx="112.5" cy="52.2" r="0.32"/><circle cx="115.3" cy="55.4" r="0.54"/><circle cx="117.0" cy="49.2" r="0.59"/><circle cx="117.4" cy="32.6" r="0.36"/><circle cx="123.6" cy="66.3" r="0.52"/><circle cx="147.9" cy="54.4" r="0.44"/><circle cx="137.1" cy="70.0" r="0.48"/><circle cx="134.3" cy="28.2" r="0.47"/><circle cx="115.6" cy="35.8" r="0.49"/><circle cx="129.6" cy="42.2" r="0.26"/><circle cx="132.4" cy="27.8" r="0.38"/><circle cx="138.0" cy="31.2" r="0.34"/><circle cx="112.3" cy="57.3" r="0.27"/><circle cx="124.8" cy="47.6" r="0.53"/><circle cx="109.4" cy="39.5" r="0.25"/><circle cx="115.6" cy="61.0" r="0.59"/><circle cx="114.4" cy="51.8" r="0.48"/><circle cx="135.7" cy="48.1" r="0.30"/><circle cx="128.0" cy="39.6" r="0.52"/><circle cx="124.2" cy="28.8" r="0.28"/><circle cx="115.6" cy="35.5" r="0.58"/><circle cx="128.4" cy="72.1" r="0.25"/><circle cx="147.5" cy="51.2" r="0.28"/><circle cx="139.3" cy="37.2" r="0.38"/><circle cx="115.4" cy="42.6" r="0.30"/><circle cx="133.1" cy="36.2" r="0.47"/><circle cx="116.6" cy="56.5" r="0.58"/><circle cx="132.7" cy="32.6" r="0.27"/><circle cx="148.0" cy="46.4" r="0.37"/><circle cx="111.1" cy="35.5" r="0.46"/><circle cx="123.6" cy="63.5" r="0.38"/><circle cx="121.9" cy="33.1" r="0.53"/><circle cx="113.4" cy="57.7" r="0.56"/><circle cx="149.3" cy="55.0" r="0.55"/><circle cx="118.2" cy="44.2" r="0.53"/><circle cx="120.2" cy="29.3" r="0.28"/><circle cx="109.6" cy="42.7" r="0.51"/><circle cx="139.1" cy="44.9" r="0.49"/><circle cx="118.8" cy="51.8" r="0.51"/><circle cx="133.0" cy="34.4" r="0.53"/><circle cx="130.5" cy="38.5" r="0.56"/><circle cx="120.5" cy="44.2" r="0.31"/><circle cx="124.8" cy="36.3" r="0.39"/><circle cx="120.2" cy="48.5" r="0.60"/><circle cx="123.7" cy="54.8" r="0.53"/><circle cx="125.7" cy="49.1" r="0.60"/><circle cx="139.7" cy="37.5" r="0.34"/><circle cx="131.7" cy="34.7" r="0.52"/><circle cx="138.5" cy="29.0" r="0.26"/><circle cx="145.3" cy="54.9" r="0.41"/><circle cx="117.2" cy="41.1" r="0.59"/><circle cx="128.2" cy="66.8" r="0.58"/><circle cx="122.0" cy="36.9" r="0.31"/><circle cx="146.9" cy="37.0" r="0.27"/><circle cx="133.4" cy="30.6" r="0.59"/><circle cx="137.2" cy="52.5" r="0.58"/><circle cx="123.4" cy="38.2" r="0.52"/><circle cx="129.6" cy="58.2" r="0.25"/><circle cx="126.9" cy="39.6" r="0.57"/><circle cx="133.1" cy="71.3" r="0.56"/><circle cx="148.0" cy="40.4" r="0.41"/><circle cx="123.0" cy="43.2" r="0.27"/><circle cx="125.1" cy="32.8" r="0.55"/><circle cx="135.4" cy="45.1" r="0.27"/><circle cx="116.8" cy="51.2" r="0.32"/><circle cx="113.9" cy="66.7" r="0.57"/><circle cx="139.1" cy="56.6" r="0.27"/><circle cx="127.2" cy="37.2" r="0.26"/><circle cx="133.7" cy="36.9" r="0.25"/><circle cx="137.2" cy="35.0" r="0.40"/><circle cx="135.3" cy="56.9" r="0.50"/></g>
<g fill="#8d8d84"><circle cx="72.9" cy="116.8" r="0.32"/><circle cx="70.8" cy="114.4" r="0.45"/><circle cx="87.2" cy="132.6" r="0.39"/><circle cx="84.5" cy="121.7" r="0.37"/><circle cx="97.2" cy="109.1" r="0.26"/><circle cx="98.9" cy="118.5" r="0.34"/><circle cx="77.5" cy="126.2" r="0.54"/><circle cx="94.1" cy="117.3" r="0.38"/><circle cx="85.5" cy="121.3" r="0.58"/><circle cx="69.0" cy="127.5" r="0.44"/><circle cx="87.1" cy="123.4" r="0.49"/><circle cx="70.8" cy="119.3" r="0.29"/><circle cx="98.8" cy="112.8" r="0.29"/><circle cx="69.2" cy="127.7" r="0.29"/><circle cx="78.4" cy="131.8" r="0.55"/><circle cx="96.0" cy="140.9" r="0.31"/><circle cx="95.7" cy="107.2" r="0.40"/><circle cx="94.4" cy="112.9" r="0.58"/><circle cx="87.8" cy="113.8" r="0.37"/><circle cx="64.6" cy="136.0" r="0.57"/><circle cx="93.9" cy="107.6" r="0.43"/><circle cx="69.4" cy="135.6" r="0.44"/><circle cx="94.0" cy="128.1" r="0.52"/><circle cx="102.4" cy="119.9" r="0.56"/><circle cx="88.7" cy="124.2" r="0.34"/><circle cx="80.3" cy="116.2" r="0.57"/><circle cx="77.2" cy="119.1" r="0.40"/><circle cx="80.7" cy="120.6" r="0.58"/><circle cx="73.6" cy="126.0" r="0.44"/><circle cx="95.1" cy="111.8" r="0.48"/><circle cx="68.3" cy="121.6" r="0.36"/><circle cx="72.4" cy="138.8" r="0.37"/><circle cx="92.8" cy="118.4" r="0.42"/><circle cx="86.8" cy="117.9" r="0.55"/><circle cx="80.2" cy="129.1" r="0.40"/><circle cx="84.8" cy="119.4" r="0.59"/><circle cx="84.9" cy="118.0" r="0.37"/><circle cx="77.3" cy="110.9" r="0.54"/><circle cx="65.9" cy="124.8" r="0.52"/><circle cx="65.4" cy="130.2" r="0.57"/><circle cx="87.2" cy="109.5" r="0.59"/><circle cx="72.1" cy="120.5" r="0.56"/><circle cx="74.4" cy="118.2" r="0.41"/><circle cx="83.4" cy="114.7" r="0.44"/><circle cx="75.7" cy="135.7" r="0.55"/><circle cx="70.2" cy="127.0" r="0.36"/><circle cx="97.2" cy="109.5" r="0.32"/><circle cx="65.9" cy="136.8" r="0.27"/><circle cx="70.6" cy="120.6" r="0.52"/><circle cx="63.2" cy="121.5" r="0.43"/><circle cx="79.8" cy="113.8" r="0.46"/><circle cx="72.2" cy="145.0" r="0.43"/><circle cx="69.4" cy="120.4" r="0.59"/><circle cx="70.3" cy="128.3" r="0.60"/><circle cx="76.2" cy="141.0" r="0.31"/><circle cx="76.1" cy="147.7" r="0.43"/><circle cx="102.2" cy="140.9" r="0.54"/><circle cx="75.5" cy="126.7" r="0.47"/><circle cx="74.6" cy="118.7" r="0.47"/><circle cx="99.7" cy="130.9" r="0.36"/><circle cx="85.0" cy="125.7" r="0.54"/><circle cx="69.4" cy="117.3" r="0.42"/><circle cx="74.3" cy="123.1" r="0.44"/><circle cx="92.1" cy="133.3" r="0.29"/><circle cx="93.5" cy="110.9" r="0.27"/><circle cx="82.6" cy="113.6" r="0.34"/><circle cx="100.3" cy="123.2" r="0.34"/><circle cx="106.8" cy="133.1" r="0.36"/><circle cx="67.5" cy="113.5" r="0.58"/><circle cx="86.1" cy="141.3" r="0.33"/><circle cx="88.5" cy="116.1" r="0.38"/><circle cx="78.3" cy="124.1" r="0.38"/><circle cx="80.7" cy="130.4" r="0.54"/><circle cx="78.6" cy="115.5" r="0.50"/><circle cx="95.5" cy="133.6" r="0.29"/><circle cx="65.8" cy="134.3" r="0.31"/><circle cx="95.6" cy="124.3" r="0.43"/><circle cx="82.3" cy="115.7" r="0.46"/><circle cx="77.8" cy="135.4" r="0.32"/><circle cx="91.1" cy="121.2" r="0.44"/><circle cx="76.0" cy="112.5" r="0.39"/><circle cx="93.8" cy="132.0" r="0.36"/><circle cx="81.5" cy="120.5" r="0.38"/><circle cx="73.0" cy="127.0" r="0.36"/><circle cx="86.7" cy="135.1" r="0.35"/><circle cx="67.5" cy="139.5" r="0.56"/><circle cx="90.9" cy="120.6" r="0.26"/><circle cx="77.5" cy="110.1" r="0.39"/><circle cx="75.1" cy="110.8" r="0.55"/><circle cx="102.0" cy="141.6" r="0.50"/><circle cx="97.9" cy="130.1" r="0.31"/><circle cx="94.8" cy="112.3" r="0.34"/><circle cx="68.0" cy="134.6" r="0.25"/><circle cx="95.7" cy="109.5" r="0.27"/><circle cx="96.4" cy="112.8" r="0.34"/><circle cx="80.6" cy="113.4" r="0.54"/><circle cx="84.2" cy="133.8" r="0.40"/><circle cx="102.8" cy="118.9" r="0.54"/><circle cx="74.8" cy="115.8" r="0.49"/><circle cx="70.7" cy="134.2" r="0.29"/><circle cx="85.9" cy="122.2" r="0.53"/><circle cx="84.3" cy="144.0" r="0.47"/><circle cx="74.4" cy="123.9" r="0.38"/><circle cx="76.7" cy="132.4" r="0.30"/><circle cx="80.5" cy="108.9" r="0.33"/><circle cx="70.2" cy="125.5" r="0.37"/><circle cx="73.3" cy="121.9" r="0.44"/><circle cx="86.1" cy="117.6" r="0.46"/><circle cx="66.0" cy="131.9" r="0.29"/><circle cx="80.9" cy="112.3" r="0.36"/><circle cx="71.9" cy="129.7" r="0.28"/><circle cx="108.4" cy="128.6" r="0.28"/><circle cx="80.8" cy="104.7" r="0.29"/><circle cx="70.4" cy="128.1" r="0.44"/><circle cx="107.5" cy="128.1" r="0.47"/><circle cx="88.7" cy="106.2" r="0.32"/><circle cx="71.8" cy="110.9" r="0.31"/><circle cx="90.0" cy="106.5" r="0.36"/><circle cx="91.0" cy="117.2" r="0.45"/><circle cx="71.1" cy="112.0" r="0.57"/><circle cx="64.3" cy="134.9" r="0.26"/><circle cx="76.2" cy="130.7" r="0.25"/><circle cx="97.0" cy="109.1" r="0.40"/><circle cx="73.7" cy="133.4" r="0.48"/><circle cx="95.6" cy="107.6" r="0.35"/><circle cx="69.3" cy="133.0" r="0.32"/><circle cx="107.1" cy="123.1" r="0.59"/><circle cx="103.1" cy="122.7" r="0.27"/><circle cx="77.5" cy="110.9" r="0.45"/><circle cx="100.8" cy="122.3" r="0.35"/><circle cx="72.5" cy="119.8" r="0.45"/><circle cx="79.3" cy="131.7" r="0.56"/><circle cx="78.1" cy="124.7" r="0.34"/><circle cx="68.4" cy="128.2" r="0.45"/><circle cx="65.7" cy="134.9" r="0.50"/><circle cx="85.8" cy="119.2" r="0.50"/><circle cx="86.8" cy="118.6" r="0.27"/><circle cx="76.7" cy="121.1" r="0.50"/><circle cx="66.1" cy="136.7" r="0.56"/><circle cx="65.2" cy="118.5" r="0.31"/><circle cx="85.1" cy="113.6" r="0.49"/><circle cx="89.2" cy="119.8" r="0.51"/><circle cx="79.7" cy="122.6" r="0.53"/><circle cx="102.3" cy="141.4" r="0.34"/><circle cx="90.9" cy="141.4" r="0.45"/><circle cx="88.6" cy="117.6" r="0.35"/><circle cx="80.0" cy="113.9" r="0.56"/><circle cx="67.0" cy="122.4" r="0.58"/><circle cx="64.0" cy="126.8" r="0.26"/><circle cx="94.1" cy="146.0" r="0.39"/><circle cx="76.5" cy="128.4" r="0.39"/><circle cx="98.1" cy="114.1" r="0.37"/><circle cx="68.4" cy="130.5" r="0.37"/><circle cx="101.0" cy="129.0" r="0.27"/><circle cx="70.3" cy="120.0" r="0.60"/><circle cx="102.3" cy="130.7" r="0.56"/><circle cx="88.3" cy="108.9" r="0.38"/><circle cx="81.5" cy="147.1" r="0.58"/><circle cx="80.2" cy="115.5" r="0.51"/><circle cx="67.2" cy="126.0" r="0.44"/><circle cx="80.8" cy="130.2" r="0.36"/><circle cx="86.8" cy="128.5" r="0.41"/><circle cx="69.2" cy="132.8" r="0.31"/><circle cx="83.0" cy="110.1" r="0.37"/><circle cx="93.1" cy="142.8" r="0.37"/><circle cx="87.8" cy="112.1" r="0.27"/><circle cx="63.8" cy="129.1" r="0.34"/><circle cx="82.5" cy="116.7" r="0.32"/><circle cx="68.4" cy="114.1" r="0.32"/><circle cx="83.2" cy="104.5" r="0.28"/><circle cx="93.4" cy="107.0" r="0.30"/><circle cx="91.9" cy="142.6" r="0.47"/><circle cx="85.4" cy="108.5" r="0.49"/><circle cx="67.7" cy="127.6" r="0.41"/><circle cx="90.9" cy="126.6" r="0.50"/><circle cx="91.4" cy="113.2" r="0.46"/><circle cx="68.0" cy="120.7" r="0.37"/><circle cx="84.8" cy="115.3" r="0.52"/><circle cx="87.6" cy="114.4" r="0.59"/><circle cx="73.9" cy="130.5" r="0.58"/><circle cx="74.2" cy="110.2" r="0.60"/><circle cx="68.4" cy="126.8" r="0.58"/><circle cx="83.8" cy="105.0" r="0.26"/><circle cx="87.5" cy="115.8" r="0.42"/><circle cx="76.6" cy="116.8" r="0.41"/><circle cx="84.9" cy="121.1" r="0.39"/><circle cx="89.2" cy="122.8" r="0.39"/><circle cx="105.0" cy="116.1" r="0.33"/><circle cx="86.7" cy="137.3" r="0.47"/><circle cx="77.2" cy="123.1" r="0.55"/><circle cx="83.3" cy="146.8" r="0.35"/><circle cx="77.6" cy="141.0" r="0.31"/><circle cx="78.2" cy="110.8" r="0.45"/><circle cx="93.3" cy="119.9" r="0.38"/><circle cx="89.5" cy="106.0" r="0.55"/><circle cx="93.1" cy="122.3" r="0.28"/><circle cx="73.7" cy="145.6" r="0.56"/><circle cx="90.5" cy="108.6" r="0.43"/><circle cx="82.0" cy="118.9" r="0.43"/><circle cx="106.7" cy="122.6" r="0.35"/><circle cx="72.5" cy="122.2" r="0.49"/><circle cx="75.8" cy="113.1" r="0.49"/><circle cx="106.9" cy="124.6" r="0.39"/><circle cx="79.3" cy="140.5" r="0.39"/><circle cx="74.4" cy="136.7" r="0.60"/><circle cx="103.4" cy="127.6" r="0.34"/><circle cx="74.7" cy="117.9" r="0.32"/><circle cx="101.2" cy="141.1" r="0.57"/><circle cx="75.2" cy="113.5" r="0.59"/><circle cx="105.4" cy="127.1" r="0.43"/><circle cx="66.3" cy="114.4" r="0.47"/><circle cx="84.9" cy="112.9" r="0.39"/><circle cx="67.7" cy="124.0" r="0.36"/><circle cx="73.8" cy="114.7" r="0.46"/><circle cx="82.5" cy="110.6" r="0.33"/><circle cx="69.0" cy="124.5" r="0.33"/><circle cx="72.2" cy="110.8" r="0.55"/></g>
<g fill="#6d6a50"><circle cx="104.4" cy="86.0" r="0.45"/><circle cx="101.5" cy="87.0" r="0.28"/><circle cx="94.0" cy="90.8" r="0.36"/><circle cx="103.8" cy="87.5" r="0.42"/><circle cx="93.1" cy="86.4" r="0.44"/><circle cx="103.4" cy="90.5" r="0.38"/><circle cx="99.4" cy="90.0" r="0.35"/><circle cx="103.0" cy="84.9" r="0.26"/><circle cx="102.3" cy="91.4" r="0.33"/><circle cx="99.4" cy="92.7" r="0.41"/><circle cx="101.6" cy="81.4" r="0.45"/><circle cx="95.0" cy="80.8" r="0.36"/><circle cx="93.9" cy="90.1" r="0.35"/><circle cx="94.2" cy="78.0" r="0.35"/><circle cx="91.4" cy="80.4" r="0.49"/><circle cx="97.7" cy="79.2" r="0.33"/><circle cx="106.1" cy="87.9" r="0.38"/><circle cx="90.5" cy="84.7" r="0.26"/><circle cx="93.9" cy="81.1" r="0.46"/><circle cx="93.7" cy="87.7" r="0.36"/><circle cx="92.6" cy="84.9" r="0.42"/><circle cx="98.7" cy="78.8" r="0.42"/><circle cx="91.6" cy="81.9" r="0.28"/><circle cx="99.5" cy="87.0" r="0.28"/><circle cx="105.6" cy="88.6" r="0.26"/></g>
<ellipse cx="200" cy="184" rx="18" ry="23" fill="url(#scat)"/>
<path d="M176 163C176 152 181 146 189 146C197 146 202 153 203 162C204 170 205 178 203 185C200 190 194 190 188 186C180 181 176 174 176 163Z" fill="#141414"/>
<g fill="#141414"><circle cx="183.3" cy="153.8" r="0.43"/><circle cx="185.3" cy="156.4" r="1.00"/><circle cx="195.1" cy="152.4" r="0.60"/><circle cx="187.8" cy="165.9" r="0.56"/><circle cx="188.3" cy="174.9" r="0.92"/><circle cx="178.3" cy="162.1" r="0.43"/><circle cx="184.0" cy="180.0" r="0.91"/><circle cx="188.7" cy="173.2" r="0.72"/><circle cx="181.3" cy="173.8" r="0.75"/><circle cx="179.5" cy="176.7" r="0.95"/><circle cx="185.6" cy="164.8" r="0.72"/><circle cx="178.9" cy="172.5" r="0.56"/><circle cx="191.5" cy="157.7" r="0.88"/><circle cx="180.0" cy="160.1" r="0.67"/><circle cx="191.8" cy="163.3" r="0.78"/><circle cx="203.2" cy="170.5" r="0.76"/><circle cx="195.5" cy="179.9" r="0.88"/><circle cx="175.9" cy="166.1" r="0.58"/><circle cx="192.6" cy="180.2" r="0.95"/><circle cx="190.4" cy="170.9" r="0.87"/><circle cx="198.8" cy="162.9" r="0.55"/><circle cx="200.0" cy="158.6" r="0.43"/><circle cx="187.9" cy="162.9" r="0.58"/><circle cx="190.3" cy="178.1" r="0.74"/><circle cx="197.7" cy="178.6" r="0.90"/><circle cx="197.3" cy="177.7" r="0.63"/><circle cx="198.7" cy="168.0" r="0.53"/><circle cx="184.3" cy="164.6" r="0.84"/><circle cx="177.1" cy="171.6" r="0.90"/><circle cx="200.1" cy="176.7" r="0.96"/><circle cx="180.5" cy="164.6" r="0.85"/><circle cx="173.6" cy="166.3" r="0.69"/><circle cx="197.1" cy="156.7" r="0.45"/><circle cx="194.3" cy="172.4" r="0.91"/><circle cx="191.2" cy="181.2" r="0.76"/><circle cx="198.2" cy="164.1" r="0.79"/><circle cx="197.8" cy="168.9" r="0.55"/><circle cx="188.7" cy="159.2" r="0.58"/><circle cx="199.8" cy="171.1" r="0.73"/><circle cx="191.9" cy="154.0" r="0.42"/><circle cx="184.0" cy="165.6" r="0.48"/><circle cx="180.6" cy="161.5" r="0.80"/><circle cx="192.4" cy="171.6" r="0.60"/><circle cx="197.2" cy="153.5" r="0.49"/><circle cx="201.5" cy="174.4" r="0.70"/><circle cx="183.7" cy="164.8" r="0.50"/><circle cx="177.9" cy="163.5" r="0.52"/><circle cx="183.1" cy="170.1" r="0.54"/><circle cx="196.8" cy="157.8" r="0.41"/><circle cx="199.5" cy="162.1" r="0.74"/><circle cx="186.1" cy="158.9" r="0.49"/><circle cx="188.7" cy="168.8" r="0.71"/><circle cx="185.1" cy="180.6" r="0.75"/><circle cx="190.2" cy="178.3" r="0.83"/><circle cx="196.3" cy="169.0" r="0.99"/><circle cx="201.2" cy="169.2" r="0.89"/><circle cx="181.1" cy="178.1" r="0.95"/><circle cx="204.5" cy="167.0" r="0.64"/><circle cx="195.7" cy="170.2" r="0.81"/><circle cx="194.5" cy="173.6" r="0.52"/></g>
<g fill="#111" opacity="1"><circle cx="196.2" cy="176.6" r="0.69"/><circle cx="217.9" cy="199.6" r="0.47"/><circle cx="203.9" cy="199.0" r="0.66"/><circle cx="211.0" cy="191.8" r="0.34"/><circle cx="207.5" cy="202.3" r="0.60"/><circle cx="192.6" cy="195.9" r="0.41"/><circle cx="194.5" cy="208.3" r="0.55"/><circle cx="210.9" cy="166.7" r="0.62"/><circle cx="216.2" cy="205.2" r="0.59"/><circle cx="213.3" cy="200.1" r="0.52"/><circle cx="202.2" cy="201.3" r="0.60"/><circle cx="214.4" cy="174.9" r="0.68"/><circle cx="204.9" cy="207.3" r="0.30"/><circle cx="217.1" cy="199.4" r="0.36"/><circle cx="213.5" cy="171.6" r="0.34"/><circle cx="202.8" cy="171.8" r="0.47"/><circle cx="215.4" cy="194.3" r="0.57"/><circle cx="201.0" cy="199.2" r="0.61"/><circle cx="209.1" cy="207.1" r="0.62"/><circle cx="201.4" cy="164.4" r="0.54"/><circle cx="213.4" cy="177.0" r="0.52"/><circle cx="213.4" cy="199.6" r="0.25"/><circle cx="203.7" cy="160.8" r="0.30"/><circle cx="212.7" cy="180.9" r="0.52"/><circle cx="202.8" cy="176.8" r="0.35"/><circle cx="199.9" cy="202.2" r="0.53"/><circle cx="198.2" cy="164.4" r="0.37"/><circle cx="209.6" cy="182.1" r="0.55"/><circle cx="212.6" cy="166.0" r="0.56"/><circle cx="191.2" cy="201.1" r="0.33"/><circle cx="197.6" cy="207.9" r="0.41"/><circle cx="196.3" cy="204.5" r="0.52"/><circle cx="215.0" cy="179.7" r="0.47"/><circle cx="216.8" cy="185.3" r="0.69"/><circle cx="195.3" cy="201.5" r="0.32"/><circle cx="204.8" cy="160.0" r="0.33"/><circle cx="216.5" cy="182.7" r="0.61"/><circle cx="197.0" cy="177.6" r="0.30"/><circle cx="205.5" cy="203.1" r="0.48"/><circle cx="200.5" cy="206.4" r="0.65"/><circle cx="208.7" cy="163.8" r="0.53"/><circle cx="202.4" cy="207.9" r="0.41"/><circle cx="208.5" cy="191.6" r="0.42"/><circle cx="204.6" cy="193.8" r="0.66"/><circle cx="203.9" cy="178.2" r="0.69"/><circle cx="191.6" cy="201.7" r="0.56"/><circle cx="205.6" cy="182.4" r="0.59"/><circle cx="215.0" cy="196.4" r="0.59"/><circle cx="191.0" cy="176.3" r="0.31"/><circle cx="216.7" cy="204.6" r="0.32"/><circle cx="206.5" cy="188.8" r="0.27"/><circle cx="201.0" cy="197.4" r="0.54"/><circle cx="197.9" cy="198.1" r="0.38"/><circle cx="205.2" cy="181.0" r="0.69"/><circle cx="208.2" cy="200.2" r="0.55"/><circle cx="200.7" cy="208.2" r="0.57"/><circle cx="209.3" cy="173.9" r="0.32"/><circle cx="206.1" cy="201.3" r="0.61"/><circle cx="199.7" cy="167.0" r="0.48"/><circle cx="214.6" cy="168.1" r="0.58"/><circle cx="194.8" cy="175.6" r="0.27"/><circle cx="198.3" cy="179.1" r="0.69"/><circle cx="216.9" cy="169.4" r="0.39"/><circle cx="216.4" cy="169.9" r="0.39"/><circle cx="202.3" cy="165.4" r="0.37"/><circle cx="201.0" cy="179.3" r="0.68"/><circle cx="197.5" cy="170.2" r="0.66"/><circle cx="202.6" cy="201.9" r="0.54"/><circle cx="211.8" cy="175.7" r="0.32"/><circle cx="211.2" cy="183.5" r="0.50"/><circle cx="208.8" cy="197.6" r="0.37"/><circle cx="200.2" cy="205.9" r="0.49"/><circle cx="198.1" cy="191.5" r="0.37"/><circle cx="211.6" cy="162.1" r="0.62"/><circle cx="205.9" cy="177.7" r="0.67"/><circle cx="197.4" cy="172.2" r="0.28"/><circle cx="205.4" cy="197.7" r="0.56"/><circle cx="201.6" cy="200.4" r="0.30"/><circle cx="198.6" cy="192.2" r="0.69"/><circle cx="207.7" cy="194.6" r="0.60"/><circle cx="201.0" cy="207.0" r="0.58"/><circle cx="199.6" cy="179.6" r="0.61"/><circle cx="199.8" cy="169.3" r="0.64"/><circle cx="204.9" cy="186.1" r="0.55"/><circle cx="215.2" cy="166.7" r="0.40"/><circle cx="191.8" cy="180.7" r="0.48"/><circle cx="213.9" cy="193.4" r="0.51"/><circle cx="201.3" cy="188.7" r="0.37"/><circle cx="213.7" cy="199.4" r="0.63"/><circle cx="194.2" cy="193.6" r="0.59"/><circle cx="204.0" cy="204.9" r="0.65"/><circle cx="210.8" cy="201.0" r="0.54"/><circle cx="214.6" cy="166.6" r="0.57"/><circle cx="209.7" cy="190.6" r="0.37"/><circle cx="191.9" cy="190.2" r="0.62"/><circle cx="197.6" cy="170.7" r="0.35"/><circle cx="192.6" cy="193.8" r="0.69"/><circle cx="212.5" cy="178.0" r="0.56"/><circle cx="192.0" cy="201.9" r="0.40"/><circle cx="190.1" cy="191.5" r="0.31"/><circle cx="197.7" cy="163.0" r="0.45"/><circle cx="205.5" cy="200.4" r="0.27"/><circle cx="213.2" cy="165.5" r="0.35"/><circle cx="207.6" cy="177.0" r="0.40"/><circle cx="205.9" cy="170.9" r="0.61"/><circle cx="195.9" cy="202.0" r="0.61"/><circle cx="205.0" cy="161.5" r="0.60"/><circle cx="190.8" cy="185.2" r="0.44"/><circle cx="191.8" cy="191.5" r="0.58"/><circle cx="206.4" cy="180.0" r="0.48"/></g>
<circle cx="230" cy="216.5" r="16.8" fill="#151515"/>
<g fill="#7a7a70"><circle cx="223.9" cy="212.7" r="0.50"/><circle cx="234.9" cy="202.6" r="0.50"/><circle cx="218.1" cy="220.0" r="0.36"/><circle cx="228.7" cy="223.0" r="0.38"/><circle cx="223.8" cy="219.0" r="0.30"/><circle cx="228.9" cy="227.7" r="0.49"/><circle cx="229.8" cy="201.9" r="0.43"/><circle cx="229.3" cy="212.8" r="0.25"/><circle cx="238.3" cy="206.9" r="0.32"/><circle cx="226.3" cy="221.3" r="0.50"/><circle cx="221.3" cy="227.7" r="0.36"/><circle cx="231.8" cy="206.4" r="0.48"/><circle cx="232.9" cy="206.6" r="0.28"/><circle cx="240.6" cy="209.7" r="0.50"/><circle cx="218.2" cy="221.5" r="0.45"/><circle cx="233.0" cy="211.9" r="0.30"/><circle cx="222.1" cy="211.8" r="0.46"/><circle cx="232.3" cy="206.5" r="0.47"/><circle cx="226.1" cy="215.6" r="0.41"/><circle cx="237.8" cy="209.6" r="0.30"/><circle cx="221.7" cy="207.0" r="0.27"/><circle cx="229.4" cy="213.1" r="0.35"/><circle cx="224.1" cy="205.3" r="0.41"/><circle cx="226.3" cy="206.9" r="0.48"/><circle cx="226.9" cy="214.3" r="0.50"/><circle cx="231.3" cy="225.8" r="0.46"/><circle cx="221.4" cy="206.9" r="0.27"/><circle cx="237.0" cy="218.7" r="0.30"/><circle cx="223.2" cy="203.7" r="0.48"/><circle cx="230.2" cy="211.7" r="0.43"/><circle cx="225.1" cy="216.1" r="0.47"/><circle cx="230.6" cy="216.1" r="0.39"/><circle cx="234.6" cy="206.9" r="0.40"/><circle cx="231.3" cy="212.5" r="0.39"/><circle cx="229.9" cy="214.2" r="0.45"/><circle cx="224.9" cy="217.9" r="0.30"/><circle cx="225.5" cy="218.6" r="0.39"/></g>
<g fill="#111" opacity="1"><circle cx="189.5" cy="149.9" r="1.08"/><circle cx="245.2" cy="229.1" r="0.58"/><circle cx="191.2" cy="171.8" r="1.11"/><circle cx="166.6" cy="203.7" r="1.28"/><circle cx="236.1" cy="140.7" r="0.56"/><circle cx="162.7" cy="212.7" r="0.98"/><circle cx="208.3" cy="187.8" r="0.83"/><circle cx="218.4" cy="208.1" r="1.23"/><circle cx="232.1" cy="223.6" r="1.23"/><circle cx="243.8" cy="215.3" r="0.52"/><circle cx="226.3" cy="229.2" r="0.84"/><circle cx="248.4" cy="158.9" r="1.25"/><circle cx="199.5" cy="214.2" r="0.70"/><circle cx="183.7" cy="176.6" r="0.76"/><circle cx="160.6" cy="186.5" r="1.28"/><circle cx="223.3" cy="237.9" r="1.11"/><circle cx="243.7" cy="244.4" r="1.10"/><circle cx="180.7" cy="166.2" r="0.83"/></g>
<g fill="#111"><circle cx="237" cy="52" r="1.2"/><circle cx="139" cy="84" r="1.5"/><circle cx="137" cy="105" r="1"/><circle cx="179" cy="114" r="1.6"/><circle cx="179" cy="148" r="1.2"/><circle cx="166" cy="139" r="1.2"/><circle cx="152" cy="147" r="1"/><circle cx="199" cy="122" r="0.9"/><circle cx="250" cy="184" r="1.5"/><circle cx="258" cy="190" r="1.4"/><circle cx="263" cy="199" r="1.2"/><circle cx="243" cy="193" r="1.5"/><circle cx="226" cy="176" r="1.1"/><circle cx="187" cy="232" r="1"/><circle cx="207" cy="232" r="1.4"/><circle cx="220" cy="227" r="1"/><circle cx="165" cy="172" r="1"/><circle cx="231" cy="163" r="1.2"/><ellipse cx="241" cy="193" rx="2" ry="1.2" transform="rotate(-30 241 193)"/></g>
<g stroke="#222" stroke-width="0.5" opacity="0.6"><path d="M139 84V72M179 114V140M237 52V68"/></g>
<path d="M182 50C184 43 192 40 200 41C210 41 220 45 224 52C227 58 226 66 224 73C222 77 218 76 214 72C208 68 198 64 190 62C184 60 181 56 182 50Z" fill="#141414"/><ellipse cx="197" cy="70" rx="13" ry="11.5" fill="#dcdad0" opacity="0.95"/><path d="M205 60C212 58 220 62 224 70C222 76 216 78 210 74Z" fill="#1c1c1c" opacity="0.8"/><g fill="#555"><circle cx="202.2" cy="70.7" r="0.57"/><circle cx="192.4" cy="78.5" r="0.56"/><circle cx="199.2" cy="62.3" r="0.54"/><circle cx="193.6" cy="78.0" r="0.44"/><circle cx="201.3" cy="69.1" r="0.48"/><circle cx="186.7" cy="67.5" r="0.57"/><circle cx="193.0" cy="59.9" r="0.32"/><circle cx="194.6" cy="80.2" r="0.34"/><circle cx="194.7" cy="59.3" r="0.40"/><circle cx="193.5" cy="61.6" r="0.51"/><circle cx="197.1" cy="75.6" r="0.49"/><circle cx="198.4" cy="75.4" r="0.48"/><circle cx="189.5" cy="65.2" r="0.49"/><circle cx="196.1" cy="72.6" r="0.26"/><circle cx="194.3" cy="73.2" r="0.42"/><circle cx="206.0" cy="68.3" r="0.52"/><circle cx="198.5" cy="73.1" r="0.39"/><circle cx="194.3" cy="63.2" r="0.28"/><circle cx="202.9" cy="67.3" r="0.26"/><circle cx="199.5" cy="65.4" r="0.53"/><circle cx="194.2" cy="64.9" r="0.32"/><circle cx="200.6" cy="67.5" r="0.46"/><circle cx="194.5" cy="66.0" r="0.28"/><circle cx="203.8" cy="69.3" r="0.45"/><circle cx="197.5" cy="72.8" r="0.55"/><circle cx="204.4" cy="77.9" r="0.50"/><circle cx="203.3" cy="77.5" r="0.38"/><circle cx="193.4" cy="69.5" r="0.53"/><circle cx="195.5" cy="76.6" r="0.33"/><circle cx="198.8" cy="74.8" r="0.38"/><circle cx="192.2" cy="64.1" r="0.27"/><circle cx="191.8" cy="61.4" r="0.26"/><circle cx="193.5" cy="71.4" r="0.50"/><circle cx="200.1" cy="72.1" r="0.31"/><circle cx="197.9" cy="77.2" r="0.27"/><circle cx="192.2" cy="75.8" r="0.44"/><circle cx="201.7" cy="72.3" r="0.45"/><circle cx="204.4" cy="62.1" r="0.29"/><circle cx="204.5" cy="67.2" r="0.31"/><circle cx="200.3" cy="66.2" r="0.34"/></g><g fill="#888"><circle cx="209.6" cy="48.6" r="0.27"/><circle cx="197.1" cy="53.8" r="0.42"/><circle cx="200.6" cy="54.9" r="0.37"/><circle cx="203.5" cy="53.0" r="0.38"/><circle cx="210.5" cy="53.2" r="0.38"/><circle cx="203.8" cy="59.7" r="0.41"/><circle cx="209.0" cy="59.8" r="0.44"/><circle cx="207.2" cy="46.8" r="0.30"/><circle cx="204.2" cy="60.4" r="0.27"/><circle cx="203.4" cy="54.0" r="0.29"/><circle cx="206.4" cy="60.9" r="0.48"/><circle cx="195.6" cy="57.2" r="0.49"/><circle cx="203.8" cy="59.6" r="0.49"/><circle cx="192.1" cy="52.5" r="0.30"/><circle cx="205.5" cy="47.7" r="0.36"/><circle cx="204.6" cy="62.7" r="0.35"/><circle cx="198.0" cy="59.5" r="0.34"/><circle cx="208.3" cy="60.5" r="0.40"/><circle cx="202.6" cy="59.4" r="0.43"/><circle cx="206.5" cy="56.1" r="0.49"/><circle cx="205.4" cy="55.3" r="0.40"/><circle cx="205.0" cy="50.3" r="0.29"/><circle cx="196.6" cy="48.2" r="0.47"/><circle cx="197.6" cy="43.3" r="0.32"/><circle cx="209.6" cy="49.5" r="0.48"/><circle cx="204.2" cy="52.9" r="0.32"/><circle cx="213.0" cy="49.9" r="0.38"/><circle cx="208.7" cy="44.0" r="0.38"/><circle cx="207.0" cy="55.6" r="0.40"/><circle cx="206.3" cy="42.1" r="0.30"/></g><g fill="#121212"><circle cx="178" cy="62" r="1.5"/><ellipse cx="179" cy="72" rx="1.8" ry="2.6"/><circle cx="201" cy="95" r="1.6"/><circle cx="183" cy="37" r="1.5"/><circle cx="221" cy="77" r="1.1"/><circle cx="190" cy="80" r="1"/></g></g><g filter="url(#soft)" transform="translate(530,0)">
<rect width="265" height="265" fill="url(#yel)"/>
<rect width="265" height="265" fill="url(#yel2)"/>
<path d="M117 0H134L130 16L122 26L116 12Z" fill="#f3df6a" opacity="0.45"/>
<path d="M0 0H117L115 16L106 26L101 44L103 64L96 73L88 79L85 93L84 101L78 101.5L72 104L67 108L63.5 113L61.5 119L60.5 125L60.5 165L0 165Z" fill="url(#lig)"/>
<path d="M0 214L8 214L14.5 211L20 209L28 212L36 217L40 223L45 227L50 238L54 251L57 265H0Z" fill="#dadad3"/>
<g stroke="#5a5a40" stroke-width="0.45" opacity="0.3" fill="none"><path d="M38 0V140M57 0V110M80 0V70M28 220V265M84 160V265M102 150V265M66 232V265M123 0V24M160 0V40M195 0V30M238 52V70M168 110V150M12 0V130"/></g>
<g stroke="#b0b0a8" stroke-width="0.45" opacity="0.3" fill="none"><path d="M0 30H90M0 78H80"/></g>
<path d="M0 138L6 132L12 126L16 130L20 120L22 108L26 108L30 124L36 136L44 144L52 147L60 144L60 165L0 165Z" fill="#1c1c1c" opacity="0.4" filter="url(#blur3)"/>
<g fill="#1a1a1a"><circle cx="3.0" cy="133.0" r="0.63"/><circle cx="10.7" cy="119.8" r="0.48"/><circle cx="10.1" cy="118.6" r="0.32"/><circle cx="1.4" cy="137.0" r="0.35"/><circle cx="16.5" cy="136.7" r="0.36"/><circle cx="12.5" cy="128.8" r="0.77"/><circle cx="7.9" cy="141.4" r="0.79"/><circle cx="17.2" cy="117.5" r="0.44"/><circle cx="2.4" cy="124.7" r="0.45"/><circle cx="3.6" cy="147.7" r="0.59"/><circle cx="7.4" cy="143.2" r="0.57"/><circle cx="1.2" cy="119.0" r="0.40"/><circle cx="8.6" cy="144.3" r="0.46"/><circle cx="9.1" cy="141.7" r="0.45"/><circle cx="14.0" cy="147.2" r="0.42"/><circle cx="10.5" cy="141.3" r="0.74"/><circle cx="5.8" cy="145.6" r="0.79"/><circle cx="8.4" cy="123.1" r="0.68"/><circle cx="9.8" cy="125.2" r="0.32"/><circle cx="15.3" cy="144.0" r="0.59"/><circle cx="6.3" cy="149.2" r="0.65"/><circle cx="11.6" cy="141.9" r="0.53"/><circle cx="18.9" cy="148.3" r="0.54"/><circle cx="1.2" cy="143.9" r="0.65"/><circle cx="19.9" cy="143.4" r="0.71"/><circle cx="7.7" cy="131.5" r="0.63"/><circle cx="9.2" cy="114.6" r="0.38"/><circle cx="1.2" cy="123.1" r="0.68"/><circle cx="5.0" cy="123.8" r="0.50"/><circle cx="1.6" cy="149.1" r="0.52"/><circle cx="17.7" cy="140.6" r="0.71"/><circle cx="5.6" cy="148.9" r="0.51"/><circle cx="17.7" cy="134.4" r="0.78"/><circle cx="3.5" cy="125.1" r="0.42"/><circle cx="9.7" cy="129.3" r="0.59"/><circle cx="0.1" cy="130.6" r="0.51"/><circle cx="11.3" cy="134.7" r="0.78"/><circle cx="10.3" cy="144.6" r="0.61"/><circle cx="1.1" cy="144.2" r="0.75"/><circle cx="17.5" cy="146.9" r="0.70"/><circle cx="8.0" cy="135.6" r="0.35"/><circle cx="1.2" cy="143.0" r="0.33"/><circle cx="3.2" cy="128.1" r="0.47"/><circle cx="0.0" cy="118.1" r="0.38"/><circle cx="7.3" cy="122.0" r="0.31"/><circle cx="12.3" cy="149.1" r="0.37"/><circle cx="6.9" cy="130.1" r="0.48"/><circle cx="17.0" cy="123.4" r="0.80"/><circle cx="9.7" cy="138.0" r="0.34"/><circle cx="6.9" cy="122.1" r="0.43"/><circle cx="3.2" cy="148.1" r="0.31"/><circle cx="10.6" cy="150.9" r="0.37"/><circle cx="0.5" cy="140.4" r="0.56"/><circle cx="17.3" cy="151.5" r="0.65"/><circle cx="7.3" cy="130.5" r="0.38"/><circle cx="10.7" cy="146.7" r="0.69"/><circle cx="4.5" cy="133.3" r="0.71"/><circle cx="17.1" cy="151.7" r="0.70"/><circle cx="14.8" cy="147.8" r="0.41"/><circle cx="7.1" cy="139.7" r="0.31"/><circle cx="5.6" cy="115.4" r="0.43"/><circle cx="19.1" cy="144.6" r="0.52"/><circle cx="19.8" cy="150.6" r="0.78"/><circle cx="4.4" cy="134.6" r="0.41"/><circle cx="4.1" cy="127.5" r="0.61"/><circle cx="16.8" cy="149.7" r="0.54"/><circle cx="16.0" cy="143.6" r="0.34"/><circle cx="18.2" cy="143.8" r="0.69"/><circle cx="9.6" cy="146.1" r="0.39"/><circle cx="6.7" cy="147.1" r="0.70"/><circle cx="7.9" cy="151.4" r="0.50"/><circle cx="14.5" cy="150.8" r="0.39"/><circle cx="3.0" cy="123.7" r="0.75"/><circle cx="2.9" cy="147.5" r="0.71"/><circle cx="13.1" cy="151.6" r="0.48"/><circle cx="2.6" cy="140.6" r="0.31"/><circle cx="13.0" cy="151.4" r="0.56"/><circle cx="8.7" cy="150.5" r="0.74"/><circle cx="4.2" cy="148.0" r="0.43"/><circle cx="4.8" cy="131.8" r="0.59"/><circle cx="8.4" cy="130.4" r="0.37"/><circle cx="7.1" cy="150.0" r="0.53"/><circle cx="18.1" cy="141.6" r="0.51"/><circle cx="10.0" cy="150.2" r="0.57"/><circle cx="0.4" cy="139.8" r="0.52"/><circle cx="0.1" cy="126.8" r="0.70"/><circle cx="9.5" cy="126.3" r="0.66"/><circle cx="6.5" cy="140.8" r="0.56"/><circle cx="15.7" cy="140.8" r="0.35"/><circle cx="5.0" cy="140.9" r="0.44"/><circle cx="10.2" cy="146.7" r="0.58"/><circle cx="18.2" cy="146.4" r="0.52"/><circle cx="10.1" cy="142.4" r="0.56"/><circle cx="9.0" cy="144.6" r="0.57"/><circle cx="18.8" cy="138.4" r="0.65"/><circle cx="18.8" cy="149.2" r="0.43"/><circle cx="18.9" cy="140.9" r="0.72"/><circle cx="2.4" cy="124.3" r="0.52"/><circle cx="4.8" cy="119.9" r="0.34"/><circle cx="15.7" cy="144.0" r="0.75"/><circle cx="14.3" cy="125.3" r="0.63"/><circle cx="17.7" cy="124.6" r="0.78"/><circle cx="19.1" cy="128.6" r="0.50"/><circle cx="19.8" cy="138.7" r="0.72"/><circle cx="8.6" cy="125.7" r="0.56"/><circle cx="3.9" cy="133.6" r="0.46"/><circle cx="0.4" cy="145.4" r="0.58"/><circle cx="0.4" cy="137.2" r="0.47"/><circle cx="10.2" cy="142.8" r="0.33"/><circle cx="15.8" cy="151.7" r="0.79"/><circle cx="5.3" cy="122.2" r="0.32"/><circle cx="5.4" cy="146.8" r="0.36"/><circle cx="18.2" cy="136.6" r="0.71"/><circle cx="3.0" cy="130.4" r="0.76"/><circle cx="14.0" cy="141.2" r="0.34"/><circle cx="13.8" cy="118.6" r="0.51"/><circle cx="18.8" cy="119.8" r="0.62"/><circle cx="1.7" cy="147.4" r="0.73"/><circle cx="17.3" cy="119.4" r="0.53"/><circle cx="11.1" cy="133.6" r="0.76"/><circle cx="2.6" cy="130.8" r="0.56"/><circle cx="2.2" cy="129.5" r="0.38"/><circle cx="4.0" cy="117.9" r="0.46"/><circle cx="15.2" cy="132.3" r="0.44"/><circle cx="3.6" cy="139.1" r="0.47"/><circle cx="5.0" cy="113.9" r="0.31"/><circle cx="11.0" cy="145.7" r="0.39"/><circle cx="18.7" cy="138.3" r="0.35"/><circle cx="8.6" cy="147.8" r="0.55"/><circle cx="7.9" cy="148.2" r="0.55"/><circle cx="19.6" cy="144.5" r="0.47"/><circle cx="14.1" cy="148.1" r="0.62"/><circle cx="7.0" cy="136.0" r="0.33"/><circle cx="1.4" cy="123.9" r="0.67"/><circle cx="3.3" cy="130.2" r="0.34"/><circle cx="17.4" cy="148.4" r="0.64"/><circle cx="4.8" cy="131.4" r="0.45"/><circle cx="3.2" cy="137.8" r="0.52"/><circle cx="19.2" cy="130.6" r="0.79"/><circle cx="4.9" cy="140.5" r="0.78"/></g>
<g fill="#1a1a1a"><circle cx="40.7" cy="137.8" r="0.30"/><circle cx="44.2" cy="140.3" r="0.55"/><circle cx="45.1" cy="133.4" r="0.30"/><circle cx="32.7" cy="136.1" r="0.50"/><circle cx="30.7" cy="123.4" r="0.45"/><circle cx="47.6" cy="134.8" r="0.56"/><circle cx="49.7" cy="150.5" r="0.66"/><circle cx="41.7" cy="153.4" r="0.46"/><circle cx="34.5" cy="155.7" r="0.66"/><circle cx="31.3" cy="147.9" r="0.72"/><circle cx="48.8" cy="153.7" r="0.67"/><circle cx="34.2" cy="152.0" r="0.56"/><circle cx="55.0" cy="144.1" r="0.70"/><circle cx="47.5" cy="152.3" r="0.75"/><circle cx="50.8" cy="148.9" r="0.41"/><circle cx="34.0" cy="122.2" r="0.48"/><circle cx="55.1" cy="128.3" r="0.58"/><circle cx="48.8" cy="147.5" r="0.64"/><circle cx="30.1" cy="143.7" r="0.70"/><circle cx="45.1" cy="150.5" r="0.57"/><circle cx="32.0" cy="148.3" r="0.67"/><circle cx="32.2" cy="135.6" r="0.43"/><circle cx="36.2" cy="150.0" r="0.67"/><circle cx="44.8" cy="155.5" r="0.49"/><circle cx="50.5" cy="143.4" r="0.68"/><circle cx="49.3" cy="147.2" r="0.34"/><circle cx="37.6" cy="130.7" r="0.67"/><circle cx="47.0" cy="137.6" r="0.31"/><circle cx="38.1" cy="125.1" r="0.64"/><circle cx="50.3" cy="149.1" r="0.45"/><circle cx="43.9" cy="144.5" r="0.53"/><circle cx="56.8" cy="129.1" r="0.40"/><circle cx="58.1" cy="155.5" r="0.31"/><circle cx="54.6" cy="142.8" r="0.78"/><circle cx="38.1" cy="142.5" r="0.40"/><circle cx="36.3" cy="154.9" r="0.59"/><circle cx="45.7" cy="130.4" r="0.78"/><circle cx="54.6" cy="129.9" r="0.55"/><circle cx="51.1" cy="153.6" r="0.42"/><circle cx="44.6" cy="153.8" r="0.31"/><circle cx="44.8" cy="117.5" r="0.53"/><circle cx="34.2" cy="137.5" r="0.47"/><circle cx="55.2" cy="138.1" r="0.30"/><circle cx="55.2" cy="150.5" r="0.36"/><circle cx="51.4" cy="154.5" r="0.75"/><circle cx="41.2" cy="137.1" r="0.50"/><circle cx="47.7" cy="156.0" r="0.48"/><circle cx="38.3" cy="141.8" r="0.32"/><circle cx="55.0" cy="128.1" r="0.44"/><circle cx="37.5" cy="154.7" r="0.43"/><circle cx="35.7" cy="144.3" r="0.49"/><circle cx="56.5" cy="155.1" r="0.71"/><circle cx="57.4" cy="147.6" r="0.77"/><circle cx="51.6" cy="145.4" r="0.32"/><circle cx="43.5" cy="150.1" r="0.68"/><circle cx="38.6" cy="147.9" r="0.32"/><circle cx="33.8" cy="154.5" r="0.54"/><circle cx="38.9" cy="139.0" r="0.67"/><circle cx="37.8" cy="155.5" r="0.63"/><circle cx="46.7" cy="137.5" r="0.50"/><circle cx="34.8" cy="131.8" r="0.40"/><circle cx="44.9" cy="154.0" r="0.41"/><circle cx="59.9" cy="154.0" r="0.52"/><circle cx="35.8" cy="130.3" r="0.35"/><circle cx="32.7" cy="139.0" r="0.42"/><circle cx="47.1" cy="135.8" r="0.74"/><circle cx="42.4" cy="150.5" r="0.51"/><circle cx="41.3" cy="144.7" r="0.47"/><circle cx="38.3" cy="125.2" r="0.78"/><circle cx="45.1" cy="129.5" r="0.61"/><circle cx="36.5" cy="153.1" r="0.44"/><circle cx="42.0" cy="135.4" r="0.52"/><circle cx="55.5" cy="155.0" r="0.74"/><circle cx="31.0" cy="121.1" r="0.65"/><circle cx="44.2" cy="153.8" r="0.59"/><circle cx="41.7" cy="115.5" r="0.76"/><circle cx="55.7" cy="152.3" r="0.79"/><circle cx="33.3" cy="135.4" r="0.38"/><circle cx="50.5" cy="144.6" r="0.77"/><circle cx="49.4" cy="149.8" r="0.68"/><circle cx="46.5" cy="142.7" r="0.32"/><circle cx="37.0" cy="151.3" r="0.76"/><circle cx="39.1" cy="147.9" r="0.36"/><circle cx="49.1" cy="135.6" r="0.65"/><circle cx="32.1" cy="128.7" r="0.56"/><circle cx="41.6" cy="146.3" r="0.41"/><circle cx="30.3" cy="146.8" r="0.45"/><circle cx="58.8" cy="142.8" r="0.62"/><circle cx="44.3" cy="153.5" r="0.42"/><circle cx="58.8" cy="135.4" r="0.65"/></g>
<path d="M0 150L5 148L10 146L14 142L18 140L20 136L21 125L22 113L23 103L23.5 96L25 96L25.5 103L27 113L29 125L31 135L33 144L36 150L42 153L50 154L56 152L60 146L62 130L110 135L107 146L103 158L99 171L96 160L92 166L88 166L85 153L80 152L76 156L73 178L69 178L68 232L63 233L60 212L55 200L50 206L45 198L40 208L38 217L34 214L30 210L25 214L20 212L17 184L12 184L10 179L5 178L0 174Z" fill="#121212"/>
<circle cx="24" cy="92" r="3.6" fill="#161616"/>
<circle cx="129" cy="49.5" r="25" fill="#151514"/>
<circle cx="99" cy="84.5" r="10" fill="#1a1a16"/>
<circle cx="85.5" cy="127" r="25.5" fill="#151514"/>
<g fill="#8d8d84"><circle cx="122.2" cy="36.2" r="0.48"/><circle cx="121.2" cy="62.2" r="0.32"/><circle cx="134.8" cy="30.6" r="0.32"/><circle cx="141.6" cy="47.1" r="0.33"/><circle cx="131.5" cy="64.1" r="0.58"/><circle cx="142.4" cy="54.8" r="0.56"/><circle cx="126.5" cy="26.7" r="0.37"/><circle cx="137.8" cy="69.9" r="0.26"/><circle cx="121.8" cy="37.3" r="0.37"/><circle cx="138.1" cy="30.7" r="0.27"/><circle cx="115.2" cy="51.8" r="0.32"/><circle cx="111.4" cy="60.5" r="0.26"/><circle cx="134.6" cy="50.7" r="0.34"/><circle cx="128.6" cy="27.7" r="0.35"/><circle cx="126.3" cy="36.8" r="0.25"/><circle cx="129.8" cy="27.5" r="0.58"/><circle cx="137.9" cy="45.2" r="0.51"/><circle cx="137.9" cy="31.4" r="0.36"/><circle cx="123.1" cy="62.0" r="0.28"/><circle cx="118.6" cy="69.7" r="0.60"/><circle cx="109.6" cy="49.7" r="0.33"/><circle cx="113.3" cy="58.5" r="0.51"/><circle cx="139.7" cy="34.1" r="0.54"/><circle cx="128.2" cy="39.3" r="0.34"/><circle cx="122.3" cy="62.3" r="0.43"/><circle cx="131.4" cy="70.0" r="0.60"/><circle cx="141.7" cy="59.0" r="0.54"/><circle cx="136.3" cy="56.3" r="0.45"/><circle cx="141.7" cy="43.5" r="0.41"/><circle cx="127.7" cy="69.7" r="0.29"/><circle cx="114.1" cy="39.2" r="0.38"/><circle cx="113.9" cy="38.6" r="0.25"/><circle cx="125.0" cy="59.1" r="0.44"/><circle cx="111.5" cy="43.8" r="0.31"/><circle cx="124.0" cy="35.6" r="0.36"/><circle cx="119.7" cy="61.1" r="0.60"/><circle cx="122.3" cy="57.2" r="0.32"/><circle cx="135.3" cy="36.3" r="0.41"/><circle cx="115.1" cy="32.5" r="0.47"/><circle cx="125.6" cy="65.7" r="0.29"/><circle cx="108.4" cy="50.7" r="0.32"/><circle cx="144.6" cy="65.5" r="0.42"/><circle cx="143.9" cy="39.2" r="0.31"/><circle cx="131.4" cy="38.9" r="0.55"/><circle cx="133.7" cy="40.9" r="0.39"/><circle cx="114.8" cy="47.9" r="0.34"/><circle cx="125.6" cy="28.0" r="0.45"/><circle cx="129.2" cy="45.0" r="0.29"/><circle cx="115.2" cy="39.5" r="0.36"/><circle cx="113.6" cy="58.0" r="0.48"/><circle cx="114.6" cy="54.5" r="0.47"/><circle cx="117.9" cy="50.2" r="0.52"/><circle cx="119.6" cy="52.0" r="0.29"/><circle cx="113.7" cy="55.4" r="0.47"/><circle cx="146.1" cy="59.2" r="0.43"/><circle cx="137.1" cy="46.9" r="0.60"/><circle cx="126.7" cy="28.9" r="0.59"/><circle cx="106.5" cy="50.6" r="0.31"/><circle cx="134.3" cy="28.0" r="0.37"/><circle cx="129.4" cy="40.3" r="0.35"/><circle cx="132.5" cy="41.5" r="0.57"/><circle cx="140.8" cy="68.4" r="0.56"/><circle cx="111.0" cy="46.0" r="0.56"/><circle cx="112.5" cy="43.5" r="0.29"/><circle cx="132.5" cy="38.2" r="0.45"/><circle cx="133.9" cy="39.0" r="0.59"/><circle cx="112.9" cy="39.9" r="0.25"/><circle cx="137.7" cy="51.4" r="0.40"/><circle cx="107.3" cy="47.8" r="0.33"/><circle cx="127.0" cy="46.7" r="0.37"/><circle cx="113.7" cy="40.6" r="0.47"/><circle cx="120.7" cy="50.8" r="0.34"/><circle cx="133.2" cy="55.2" r="0.55"/><circle cx="131.9" cy="35.2" r="0.25"/><circle cx="118.4" cy="35.9" r="0.48"/><circle cx="108.1" cy="57.2" r="0.34"/><circle cx="119.7" cy="55.7" r="0.52"/><circle cx="146.0" cy="50.8" r="0.30"/><circle cx="115.9" cy="33.4" r="0.36"/><circle cx="127.4" cy="54.3" r="0.52"/><circle cx="128.6" cy="47.7" r="0.51"/><circle cx="109.7" cy="53.8" r="0.33"/><circle cx="118.8" cy="66.6" r="0.55"/><circle cx="126.2" cy="38.0" r="0.40"/><circle cx="133.0" cy="33.3" r="0.47"/><circle cx="139.5" cy="47.2" r="0.26"/><circle cx="128.3" cy="60.7" r="0.58"/><circle cx="128.7" cy="36.4" r="0.36"/><circle cx="130.5" cy="71.4" r="0.49"/><circle cx="117.4" cy="29.9" r="0.54"/><circle cx="122.1" cy="29.3" r="0.50"/><circle cx="117.5" cy="44.0" r="0.47"/><circle cx="136.4" cy="50.8" r="0.37"/><circle cx="122.5" cy="32.4" r="0.51"/><circle cx="137.6" cy="30.5" r="0.27"/><circle cx="143.8" cy="33.3" r="0.29"/><circle cx="140.9" cy="32.6" r="0.54"/><circle cx="120.6" cy="40.4" r="0.28"/><circle cx="129.5" cy="39.1" r="0.40"/><circle cx="126.0" cy="35.9" r="0.59"/><circle cx="107.8" cy="49.0" r="0.26"/><circle cx="116.0" cy="57.4" r="0.37"/><circle cx="124.3" cy="33.3" r="0.55"/><circle cx="139.3" cy="49.6" r="0.59"/><circle cx="131.9" cy="40.0" r="0.37"/><circle cx="134.8" cy="39.3" r="0.35"/><circle cx="133.5" cy="30.8" r="0.47"/><circle cx="134.2" cy="45.2" r="0.26"/><circle cx="132.2" cy="60.9" r="0.43"/><circle cx="113.3" cy="64.4" r="0.41"/><circle cx="109.4" cy="45.6" r="0.48"/><circle cx="139.3" cy="33.9" r="0.31"/><circle cx="110.2" cy="57.1" r="0.29"/><circle cx="108.0" cy="54.6" r="0.32"/><circle cx="122.9" cy="67.8" r="0.30"/><circle cx="119.9" cy="48.2" r="0.32"/><circle cx="149.4" cy="47.4" r="0.40"/><circle cx="112.5" cy="61.6" r="0.43"/><circle cx="118.5" cy="37.9" r="0.46"/><circle cx="112.6" cy="60.7" r="0.40"/><circle cx="111.2" cy="40.6" r="0.33"/><circle cx="125.3" cy="28.3" r="0.50"/><circle cx="140.4" cy="34.3" r="0.41"/><circle cx="111.2" cy="59.3" r="0.47"/><circle cx="118.4" cy="39.3" r="0.58"/><circle cx="136.6" cy="66.5" r="0.39"/><circle cx="106.3" cy="50.9" r="0.44"/><circle cx="139.8" cy="66.7" r="0.43"/><circle cx="125.6" cy="33.4" r="0.54"/><circle cx="114.4" cy="47.5" r="0.32"/><circle cx="123.2" cy="36.3" r="0.29"/><circle cx="116.0" cy="56.8" r="0.37"/><circle cx="128.0" cy="60.3" r="0.58"/><circle cx="118.4" cy="47.7" r="0.39"/><circle cx="131.0" cy="57.5" r="0.53"/><circle cx="118.5" cy="37.7" r="0.33"/><circle cx="142.3" cy="46.4" r="0.54"/><circle cx="135.4" cy="35.1" r="0.44"/><circle cx="136.0" cy="39.9" r="0.34"/><circle cx="120.1" cy="53.9" r="0.50"/><circle cx="114.1" cy="51.4" r="0.48"/><circle cx="114.6" cy="66.4" r="0.27"/><circle cx="139.3" cy="30.2" r="0.30"/><circle cx="138.0" cy="33.5" r="0.25"/><circle cx="131.2" cy="36.1" r="0.57"/><circle cx="131.4" cy="40.4" r="0.46"/><circle cx="132.7" cy="31.1" r="0.53"/><circle cx="134.4" cy="40.8" r="0.44"/><circle cx="128.2" cy="34.3" r="0.44"/><circle cx="123.4" cy="49.7" r="0.30"/><circle cx="112.8" cy="50.4" r="0.55"/><circle cx="111.7" cy="42.3" r="0.38"/><circle cx="109.3" cy="60.5" r="0.47"/><circle cx="126.5" cy="46.6" r="0.49"/><circle cx="141.0" cy="44.0" r="0.43"/><circle cx="107.3" cy="51.6" r="0.50"/><circle cx="119.6" cy="40.0" r="0.38"/><circle cx="112.5" cy="52.2" r="0.32"/><circle cx="115.3" cy="55.4" r="0.54"/><circle cx="117.0" cy="49.2" r="0.59"/><circle cx="117.4" cy="32.6" r="0.36"/><circle cx="123.6" cy="66.3" r="0.52"/><circle cx="147.9" cy="54.4" r="0.44"/><circle cx="137.1" cy="70.0" r="0.48"/><circle cx="134.3" cy="28.2" r="0.47"/><circle cx="115.6" cy="35.8" r="0.49"/><circle cx="129.6" cy="42.2" r="0.26"/><circle cx="132.4" cy="27.8" r="0.38"/><circle cx="138.0" cy="31.2" r="0.34"/><circle cx="112.3" cy="57.3" r="0.27"/><circle cx="124.8" cy="47.6" r="0.53"/><circle cx="109.4" cy="39.5" r="0.25"/><circle cx="115.6" cy="61.0" r="0.59"/><circle cx="114.4" cy="51.8" r="0.48"/><circle cx="135.7" cy="48.1" r="0.30"/><circle cx="128.0" cy="39.6" r="0.52"/><circle cx="124.2" cy="28.8" r="0.28"/><circle cx="115.6" cy="35.5" r="0.58"/><circle cx="128.4" cy="72.1" r="0.25"/><circle cx="147.5" cy="51.2" r="0.28"/><circle cx="139.3" cy="37.2" r="0.38"/><circle cx="115.4" cy="42.6" r="0.30"/><circle cx="133.1" cy="36.2" r="0.47"/><circle cx="116.6" cy="56.5" r="0.58"/><circle cx="132.7" cy="32.6" r="0.27"/><circle cx="148.0" cy="46.4" r="0.37"/><circle cx="111.1" cy="35.5" r="0.46"/><circle cx="123.6" cy="63.5" r="0.38"/><circle cx="121.9" cy="33.1" r="0.53"/><circle cx="113.4" cy="57.7" r="0.56"/><circle cx="149.3" cy="55.0" r="0.55"/><circle cx="118.2" cy="44.2" r="0.53"/><circle cx="120.2" cy="29.3" r="0.28"/><circle cx="109.6" cy="42.7" r="0.51"/><circle cx="139.1" cy="44.9" r="0.49"/><circle cx="118.8" cy="51.8" r="0.51"/><circle cx="133.0" cy="34.4" r="0.53"/><circle cx="130.5" cy="38.5" r="0.56"/><circle cx="120.5" cy="44.2" r="0.31"/><circle cx="124.8" cy="36.3" r="0.39"/><circle cx="120.2" cy="48.5" r="0.60"/><circle cx="123.7" cy="54.8" r="0.53"/><circle cx="125.7" cy="49.1" r="0.60"/><circle cx="139.7" cy="37.5" r="0.34"/><circle cx="131.7" cy="34.7" r="0.52"/><circle cx="138.5" cy="29.0" r="0.26"/><circle cx="145.3" cy="54.9" r="0.41"/><circle cx="117.2" cy="41.1" r="0.59"/><circle cx="128.2" cy="66.8" r="0.58"/><circle cx="122.0" cy="36.9" r="0.31"/><circle cx="146.9" cy="37.0" r="0.27"/><circle cx="133.4" cy="30.6" r="0.59"/><circle cx="137.2" cy="52.5" r="0.58"/><circle cx="123.4" cy="38.2" r="0.52"/><circle cx="129.6" cy="58.2" r="0.25"/><circle cx="126.9" cy="39.6" r="0.57"/><circle cx="133.1" cy="71.3" r="0.56"/><circle cx="148.0" cy="40.4" r="0.41"/><circle cx="123.0" cy="43.2" r="0.27"/><circle cx="125.1" cy="32.8" r="0.55"/><circle cx="135.4" cy="45.1" r="0.27"/><circle cx="116.8" cy="51.2" r="0.32"/><circle cx="113.9" cy="66.7" r="0.57"/><circle cx="139.1" cy="56.6" r="0.27"/><circle cx="127.2" cy="37.2" r="0.26"/><circle cx="133.7" cy="36.9" r="0.25"/><circle cx="137.2" cy="35.0" r="0.40"/><circle cx="135.3" cy="56.9" r="0.50"/></g>
<g fill="#8d8d84"><circle cx="72.9" cy="116.8" r="0.32"/><circle cx="70.8" cy="114.4" r="0.45"/><circle cx="87.2" cy="132.6" r="0.39"/><circle cx="84.5" cy="121.7" r="0.37"/><circle cx="97.2" cy="109.1" r="0.26"/><circle cx="98.9" cy="118.5" r="0.34"/><circle cx="77.5" cy="126.2" r="0.54"/><circle cx="94.1" cy="117.3" r="0.38"/><circle cx="85.5" cy="121.3" r="0.58"/><circle cx="69.0" cy="127.5" r="0.44"/><circle cx="87.1" cy="123.4" r="0.49"/><circle cx="70.8" cy="119.3" r="0.29"/><circle cx="98.8" cy="112.8" r="0.29"/><circle cx="69.2" cy="127.7" r="0.29"/><circle cx="78.4" cy="131.8" r="0.55"/><circle cx="96.0" cy="140.9" r="0.31"/><circle cx="95.7" cy="107.2" r="0.40"/><circle cx="94.4" cy="112.9" r="0.58"/><circle cx="87.8" cy="113.8" r="0.37"/><circle cx="64.6" cy="136.0" r="0.57"/><circle cx="93.9" cy="107.6" r="0.43"/><circle cx="69.4" cy="135.6" r="0.44"/><circle cx="94.0" cy="128.1" r="0.52"/><circle cx="102.4" cy="119.9" r="0.56"/><circle cx="88.7" cy="124.2" r="0.34"/><circle cx="80.3" cy="116.2" r="0.57"/><circle cx="77.2" cy="119.1" r="0.40"/><circle cx="80.7" cy="120.6" r="0.58"/><circle cx="73.6" cy="126.0" r="0.44"/><circle cx="95.1" cy="111.8" r="0.48"/><circle cx="68.3" cy="121.6" r="0.36"/><circle cx="72.4" cy="138.8" r="0.37"/><circle cx="92.8" cy="118.4" r="0.42"/><circle cx="86.8" cy="117.9" r="0.55"/><circle cx="80.2" cy="129.1" r="0.40"/><circle cx="84.8" cy="119.4" r="0.59"/><circle cx="84.9" cy="118.0" r="0.37"/><circle cx="77.3" cy="110.9" r="0.54"/><circle cx="65.9" cy="124.8" r="0.52"/><circle cx="65.4" cy="130.2" r="0.57"/><circle cx="87.2" cy="109.5" r="0.59"/><circle cx="72.1" cy="120.5" r="0.56"/><circle cx="74.4" cy="118.2" r="0.41"/><circle cx="83.4" cy="114.7" r="0.44"/><circle cx="75.7" cy="135.7" r="0.55"/><circle cx="70.2" cy="127.0" r="0.36"/><circle cx="97.2" cy="109.5" r="0.32"/><circle cx="65.9" cy="136.8" r="0.27"/><circle cx="70.6" cy="120.6" r="0.52"/><circle cx="63.2" cy="121.5" r="0.43"/><circle cx="79.8" cy="113.8" r="0.46"/><circle cx="72.2" cy="145.0" r="0.43"/><circle cx="69.4" cy="120.4" r="0.59"/><circle cx="70.3" cy="128.3" r="0.60"/><circle cx="76.2" cy="141.0" r="0.31"/><circle cx="76.1" cy="147.7" r="0.43"/><circle cx="102.2" cy="140.9" r="0.54"/><circle cx="75.5" cy="126.7" r="0.47"/><circle cx="74.6" cy="118.7" r="0.47"/><circle cx="99.7" cy="130.9" r="0.36"/><circle cx="85.0" cy="125.7" r="0.54"/><circle cx="69.4" cy="117.3" r="0.42"/><circle cx="74.3" cy="123.1" r="0.44"/><circle cx="92.1" cy="133.3" r="0.29"/><circle cx="93.5" cy="110.9" r="0.27"/><circle cx="82.6" cy="113.6" r="0.34"/><circle cx="100.3" cy="123.2" r="0.34"/><circle cx="106.8" cy="133.1" r="0.36"/><circle cx="67.5" cy="113.5" r="0.58"/><circle cx="86.1" cy="141.3" r="0.33"/><circle cx="88.5" cy="116.1" r="0.38"/><circle cx="78.3" cy="124.1" r="0.38"/><circle cx="80.7" cy="130.4" r="0.54"/><circle cx="78.6" cy="115.5" r="0.50"/><circle cx="95.5" cy="133.6" r="0.29"/><circle cx="65.8" cy="134.3" r="0.31"/><circle cx="95.6" cy="124.3" r="0.43"/><circle cx="82.3" cy="115.7" r="0.46"/><circle cx="77.8" cy="135.4" r="0.32"/><circle cx="91.1" cy="121.2" r="0.44"/><circle cx="76.0" cy="112.5" r="0.39"/><circle cx="93.8" cy="132.0" r="0.36"/><circle cx="81.5" cy="120.5" r="0.38"/><circle cx="73.0" cy="127.0" r="0.36"/><circle cx="86.7" cy="135.1" r="0.35"/><circle cx="67.5" cy="139.5" r="0.56"/><circle cx="90.9" cy="120.6" r="0.26"/><circle cx="77.5" cy="110.1" r="0.39"/><circle cx="75.1" cy="110.8" r="0.55"/><circle cx="102.0" cy="141.6" r="0.50"/><circle cx="97.9" cy="130.1" r="0.31"/><circle cx="94.8" cy="112.3" r="0.34"/><circle cx="68.0" cy="134.6" r="0.25"/><circle cx="95.7" cy="109.5" r="0.27"/><circle cx="96.4" cy="112.8" r="0.34"/><circle cx="80.6" cy="113.4" r="0.54"/><circle cx="84.2" cy="133.8" r="0.40"/><circle cx="102.8" cy="118.9" r="0.54"/><circle cx="74.8" cy="115.8" r="0.49"/><circle cx="70.7" cy="134.2" r="0.29"/><circle cx="85.9" cy="122.2" r="0.53"/><circle cx="84.3" cy="144.0" r="0.47"/><circle cx="74.4" cy="123.9" r="0.38"/><circle cx="76.7" cy="132.4" r="0.30"/><circle cx="80.5" cy="108.9" r="0.33"/><circle cx="70.2" cy="125.5" r="0.37"/><circle cx="73.3" cy="121.9" r="0.44"/><circle cx="86.1" cy="117.6" r="0.46"/><circle cx="66.0" cy="131.9" r="0.29"/><circle cx="80.9" cy="112.3" r="0.36"/><circle cx="71.9" cy="129.7" r="0.28"/><circle cx="108.4" cy="128.6" r="0.28"/><circle cx="80.8" cy="104.7" r="0.29"/><circle cx="70.4" cy="128.1" r="0.44"/><circle cx="107.5" cy="128.1" r="0.47"/><circle cx="88.7" cy="106.2" r="0.32"/><circle cx="71.8" cy="110.9" r="0.31"/><circle cx="90.0" cy="106.5" r="0.36"/><circle cx="91.0" cy="117.2" r="0.45"/><circle cx="71.1" cy="112.0" r="0.57"/><circle cx="64.3" cy="134.9" r="0.26"/><circle cx="76.2" cy="130.7" r="0.25"/><circle cx="97.0" cy="109.1" r="0.40"/><circle cx="73.7" cy="133.4" r="0.48"/><circle cx="95.6" cy="107.6" r="0.35"/><circle cx="69.3" cy="133.0" r="0.32"/><circle cx="107.1" cy="123.1" r="0.59"/><circle cx="103.1" cy="122.7" r="0.27"/><circle cx="77.5" cy="110.9" r="0.45"/><circle cx="100.8" cy="122.3" r="0.35"/><circle cx="72.5" cy="119.8" r="0.45"/><circle cx="79.3" cy="131.7" r="0.56"/><circle cx="78.1" cy="124.7" r="0.34"/><circle cx="68.4" cy="128.2" r="0.45"/><circle cx="65.7" cy="134.9" r="0.50"/><circle cx="85.8" cy="119.2" r="0.50"/><circle cx="86.8" cy="118.6" r="0.27"/><circle cx="76.7" cy="121.1" r="0.50"/><circle cx="66.1" cy="136.7" r="0.56"/><circle cx="65.2" cy="118.5" r="0.31"/><circle cx="85.1" cy="113.6" r="0.49"/><circle cx="89.2" cy="119.8" r="0.51"/><circle cx="79.7" cy="122.6" r="0.53"/><circle cx="102.3" cy="141.4" r="0.34"/><circle cx="90.9" cy="141.4" r="0.45"/><circle cx="88.6" cy="117.6" r="0.35"/><circle cx="80.0" cy="113.9" r="0.56"/><circle cx="67.0" cy="122.4" r="0.58"/><circle cx="64.0" cy="126.8" r="0.26"/><circle cx="94.1" cy="146.0" r="0.39"/><circle cx="76.5" cy="128.4" r="0.39"/><circle cx="98.1" cy="114.1" r="0.37"/><circle cx="68.4" cy="130.5" r="0.37"/><circle cx="101.0" cy="129.0" r="0.27"/><circle cx="70.3" cy="120.0" r="0.60"/><circle cx="102.3" cy="130.7" r="0.56"/><circle cx="88.3" cy="108.9" r="0.38"/><circle cx="81.5" cy="147.1" r="0.58"/><circle cx="80.2" cy="115.5" r="0.51"/><circle cx="67.2" cy="126.0" r="0.44"/><circle cx="80.8" cy="130.2" r="0.36"/><circle cx="86.8" cy="128.5" r="0.41"/><circle cx="69.2" cy="132.8" r="0.31"/><circle cx="83.0" cy="110.1" r="0.37"/><circle cx="93.1" cy="142.8" r="0.37"/><circle cx="87.8" cy="112.1" r="0.27"/><circle cx="63.8" cy="129.1" r="0.34"/><circle cx="82.5" cy="116.7" r="0.32"/><circle cx="68.4" cy="114.1" r="0.32"/><circle cx="83.2" cy="104.5" r="0.28"/><circle cx="93.4" cy="107.0" r="0.30"/><circle cx="91.9" cy="142.6" r="0.47"/><circle cx="85.4" cy="108.5" r="0.49"/><circle cx="67.7" cy="127.6" r="0.41"/><circle cx="90.9" cy="126.6" r="0.50"/><circle cx="91.4" cy="113.2" r="0.46"/><circle cx="68.0" cy="120.7" r="0.37"/><circle cx="84.8" cy="115.3" r="0.52"/><circle cx="87.6" cy="114.4" r="0.59"/><circle cx="73.9" cy="130.5" r="0.58"/><circle cx="74.2" cy="110.2" r="0.60"/><circle cx="68.4" cy="126.8" r="0.58"/><circle cx="83.8" cy="105.0" r="0.26"/><circle cx="87.5" cy="115.8" r="0.42"/><circle cx="76.6" cy="116.8" r="0.41"/><circle cx="84.9" cy="121.1" r="0.39"/><circle cx="89.2" cy="122.8" r="0.39"/><circle cx="105.0" cy="116.1" r="0.33"/><circle cx="86.7" cy="137.3" r="0.47"/><circle cx="77.2" cy="123.1" r="0.55"/><circle cx="83.3" cy="146.8" r="0.35"/><circle cx="77.6" cy="141.0" r="0.31"/><circle cx="78.2" cy="110.8" r="0.45"/><circle cx="93.3" cy="119.9" r="0.38"/><circle cx="89.5" cy="106.0" r="0.55"/><circle cx="93.1" cy="122.3" r="0.28"/><circle cx="73.7" cy="145.6" r="0.56"/><circle cx="90.5" cy="108.6" r="0.43"/><circle cx="82.0" cy="118.9" r="0.43"/><circle cx="106.7" cy="122.6" r="0.35"/><circle cx="72.5" cy="122.2" r="0.49"/><circle cx="75.8" cy="113.1" r="0.49"/><circle cx="106.9" cy="124.6" r="0.39"/><circle cx="79.3" cy="140.5" r="0.39"/><circle cx="74.4" cy="136.7" r="0.60"/><circle cx="103.4" cy="127.6" r="0.34"/><circle cx="74.7" cy="117.9" r="0.32"/><circle cx="101.2" cy="141.1" r="0.57"/><circle cx="75.2" cy="113.5" r="0.59"/><circle cx="105.4" cy="127.1" r="0.43"/><circle cx="66.3" cy="114.4" r="0.47"/><circle cx="84.9" cy="112.9" r="0.39"/><circle cx="67.7" cy="124.0" r="0.36"/><circle cx="73.8" cy="114.7" r="0.46"/><circle cx="82.5" cy="110.6" r="0.33"/><circle cx="69.0" cy="124.5" r="0.33"/><circle cx="72.2" cy="110.8" r="0.55"/></g>
<g fill="#6d6a50"><circle cx="104.4" cy="86.0" r="0.45"/><circle cx="101.5" cy="87.0" r="0.28"/><circle cx="94.0" cy="90.8" r="0.36"/><circle cx="103.8" cy="87.5" r="0.42"/><circle cx="93.1" cy="86.4" r="0.44"/><circle cx="103.4" cy="90.5" r="0.38"/><circle cx="99.4" cy="90.0" r="0.35"/><circle cx="103.0" cy="84.9" r="0.26"/><circle cx="102.3" cy="91.4" r="0.33"/><circle cx="99.4" cy="92.7" r="0.41"/><circle cx="101.6" cy="81.4" r="0.45"/><circle cx="95.0" cy="80.8" r="0.36"/><circle cx="93.9" cy="90.1" r="0.35"/><circle cx="94.2" cy="78.0" r="0.35"/><circle cx="91.4" cy="80.4" r="0.49"/><circle cx="97.7" cy="79.2" r="0.33"/><circle cx="106.1" cy="87.9" r="0.38"/><circle cx="90.5" cy="84.7" r="0.26"/><circle cx="93.9" cy="81.1" r="0.46"/><circle cx="93.7" cy="87.7" r="0.36"/><circle cx="92.6" cy="84.9" r="0.42"/><circle cx="98.7" cy="78.8" r="0.42"/><circle cx="91.6" cy="81.9" r="0.28"/><circle cx="99.5" cy="87.0" r="0.28"/><circle cx="105.6" cy="88.6" r="0.26"/></g>
<ellipse cx="200" cy="184" rx="18" ry="23" fill="url(#scat)"/>
<path d="M176 163C176 152 181 146 189 146C197 146 202 153 203 162C204 170 205 178 203 185C200 190 194 190 188 186C180 181 176 174 176 163Z" fill="#141414"/>
<g fill="#141414"><circle cx="183.3" cy="153.8" r="0.43"/><circle cx="185.3" cy="156.4" r="1.00"/><circle cx="195.1" cy="152.4" r="0.60"/><circle cx="187.8" cy="165.9" r="0.56"/><circle cx="188.3" cy="174.9" r="0.92"/><circle cx="178.3" cy="162.1" r="0.43"/><circle cx="184.0" cy="180.0" r="0.91"/><circle cx="188.7" cy="173.2" r="0.72"/><circle cx="181.3" cy="173.8" r="0.75"/><circle cx="179.5" cy="176.7" r="0.95"/><circle cx="185.6" cy="164.8" r="0.72"/><circle cx="178.9" cy="172.5" r="0.56"/><circle cx="191.5" cy="157.7" r="0.88"/><circle cx="180.0" cy="160.1" r="0.67"/><circle cx="191.8" cy="163.3" r="0.78"/><circle cx="203.2" cy="170.5" r="0.76"/><circle cx="195.5" cy="179.9" r="0.88"/><circle cx="175.9" cy="166.1" r="0.58"/><circle cx="192.6" cy="180.2" r="0.95"/><circle cx="190.4" cy="170.9" r="0.87"/><circle cx="198.8" cy="162.9" r="0.55"/><circle cx="200.0" cy="158.6" r="0.43"/><circle cx="187.9" cy="162.9" r="0.58"/><circle cx="190.3" cy="178.1" r="0.74"/><circle cx="197.7" cy="178.6" r="0.90"/><circle cx="197.3" cy="177.7" r="0.63"/><circle cx="198.7" cy="168.0" r="0.53"/><circle cx="184.3" cy="164.6" r="0.84"/><circle cx="177.1" cy="171.6" r="0.90"/><circle cx="200.1" cy="176.7" r="0.96"/><circle cx="180.5" cy="164.6" r="0.85"/><circle cx="173.6" cy="166.3" r="0.69"/><circle cx="197.1" cy="156.7" r="0.45"/><circle cx="194.3" cy="172.4" r="0.91"/><circle cx="191.2" cy="181.2" r="0.76"/><circle cx="198.2" cy="164.1" r="0.79"/><circle cx="197.8" cy="168.9" r="0.55"/><circle cx="188.7" cy="159.2" r="0.58"/><circle cx="199.8" cy="171.1" r="0.73"/><circle cx="191.9" cy="154.0" r="0.42"/><circle cx="184.0" cy="165.6" r="0.48"/><circle cx="180.6" cy="161.5" r="0.80"/><circle cx="192.4" cy="171.6" r="0.60"/><circle cx="197.2" cy="153.5" r="0.49"/><circle cx="201.5" cy="174.4" r="0.70"/><circle cx="183.7" cy="164.8" r="0.50"/><circle cx="177.9" cy="163.5" r="0.52"/><circle cx="183.1" cy="170.1" r="0.54"/><circle cx="196.8" cy="157.8" r="0.41"/><circle cx="199.5" cy="162.1" r="0.74"/><circle cx="186.1" cy="158.9" r="0.49"/><circle cx="188.7" cy="168.8" r="0.71"/><circle cx="185.1" cy="180.6" r="0.75"/><circle cx="190.2" cy="178.3" r="0.83"/><circle cx="196.3" cy="169.0" r="0.99"/><circle cx="201.2" cy="169.2" r="0.89"/><circle cx="181.1" cy="178.1" r="0.95"/><circle cx="204.5" cy="167.0" r="0.64"/><circle cx="195.7" cy="170.2" r="0.81"/><circle cx="194.5" cy="173.6" r="0.52"/></g>
<g fill="#111" opacity="1"><circle cx="196.2" cy="176.6" r="0.69"/><circle cx="217.9" cy="199.6" r="0.47"/><circle cx="203.9" cy="199.0" r="0.66"/><circle cx="211.0" cy="191.8" r="0.34"/><circle cx="207.5" cy="202.3" r="0.60"/><circle cx="192.6" cy="195.9" r="0.41"/><circle cx="194.5" cy="208.3" r="0.55"/><circle cx="210.9" cy="166.7" r="0.62"/><circle cx="216.2" cy="205.2" r="0.59"/><circle cx="213.3" cy="200.1" r="0.52"/><circle cx="202.2" cy="201.3" r="0.60"/><circle cx="214.4" cy="174.9" r="0.68"/><circle cx="204.9" cy="207.3" r="0.30"/><circle cx="217.1" cy="199.4" r="0.36"/><circle cx="213.5" cy="171.6" r="0.34"/><circle cx="202.8" cy="171.8" r="0.47"/><circle cx="215.4" cy="194.3" r="0.57"/><circle cx="201.0" cy="199.2" r="0.61"/><circle cx="209.1" cy="207.1" r="0.62"/><circle cx="201.4" cy="164.4" r="0.54"/><circle cx="213.4" cy="177.0" r="0.52"/><circle cx="213.4" cy="199.6" r="0.25"/><circle cx="203.7" cy="160.8" r="0.30"/><circle cx="212.7" cy="180.9" r="0.52"/><circle cx="202.8" cy="176.8" r="0.35"/><circle cx="199.9" cy="202.2" r="0.53"/><circle cx="198.2" cy="164.4" r="0.37"/><circle cx="209.6" cy="182.1" r="0.55"/><circle cx="212.6" cy="166.0" r="0.56"/><circle cx="191.2" cy="201.1" r="0.33"/><circle cx="197.6" cy="207.9" r="0.41"/><circle cx="196.3" cy="204.5" r="0.52"/><circle cx="215.0" cy="179.7" r="0.47"/><circle cx="216.8" cy="185.3" r="0.69"/><circle cx="195.3" cy="201.5" r="0.32"/><circle cx="204.8" cy="160.0" r="0.33"/><circle cx="216.5" cy="182.7" r="0.61"/><circle cx="197.0" cy="177.6" r="0.30"/><circle cx="205.5" cy="203.1" r="0.48"/><circle cx="200.5" cy="206.4" r="0.65"/><circle cx="208.7" cy="163.8" r="0.53"/><circle cx="202.4" cy="207.9" r="0.41"/><circle cx="208.5" cy="191.6" r="0.42"/><circle cx="204.6" cy="193.8" r="0.66"/><circle cx="203.9" cy="178.2" r="0.69"/><circle cx="191.6" cy="201.7" r="0.56"/><circle cx="205.6" cy="182.4" r="0.59"/><circle cx="215.0" cy="196.4" r="0.59"/><circle cx="191.0" cy="176.3" r="0.31"/><circle cx="216.7" cy="204.6" r="0.32"/><circle cx="206.5" cy="188.8" r="0.27"/><circle cx="201.0" cy="197.4" r="0.54"/><circle cx="197.9" cy="198.1" r="0.38"/><circle cx="205.2" cy="181.0" r="0.69"/><circle cx="208.2" cy="200.2" r="0.55"/><circle cx="200.7" cy="208.2" r="0.57"/><circle cx="209.3" cy="173.9" r="0.32"/><circle cx="206.1" cy="201.3" r="0.61"/><circle cx="199.7" cy="167.0" r="0.48"/><circle cx="214.6" cy="168.1" r="0.58"/><circle cx="194.8" cy="175.6" r="0.27"/><circle cx="198.3" cy="179.1" r="0.69"/><circle cx="216.9" cy="169.4" r="0.39"/><circle cx="216.4" cy="169.9" r="0.39"/><circle cx="202.3" cy="165.4" r="0.37"/><circle cx="201.0" cy="179.3" r="0.68"/><circle cx="197.5" cy="170.2" r="0.66"/><circle cx="202.6" cy="201.9" r="0.54"/><circle cx="211.8" cy="175.7" r="0.32"/><circle cx="211.2" cy="183.5" r="0.50"/><circle cx="208.8" cy="197.6" r="0.37"/><circle cx="200.2" cy="205.9" r="0.49"/><circle cx="198.1" cy="191.5" r="0.37"/><circle cx="211.6" cy="162.1" r="0.62"/><circle cx="205.9" cy="177.7" r="0.67"/><circle cx="197.4" cy="172.2" r="0.28"/><circle cx="205.4" cy="197.7" r="0.56"/><circle cx="201.6" cy="200.4" r="0.30"/><circle cx="198.6" cy="192.2" r="0.69"/><circle cx="207.7" cy="194.6" r="0.60"/><circle cx="201.0" cy="207.0" r="0.58"/><circle cx="199.6" cy="179.6" r="0.61"/><circle cx="199.8" cy="169.3" r="0.64"/><circle cx="204.9" cy="186.1" r="0.55"/><circle cx="215.2" cy="166.7" r="0.40"/><circle cx="191.8" cy="180.7" r="0.48"/><circle cx="213.9" cy="193.4" r="0.51"/><circle cx="201.3" cy="188.7" r="0.37"/><circle cx="213.7" cy="199.4" r="0.63"/><circle cx="194.2" cy="193.6" r="0.59"/><circle cx="204.0" cy="204.9" r="0.65"/><circle cx="210.8" cy="201.0" r="0.54"/><circle cx="214.6" cy="166.6" r="0.57"/><circle cx="209.7" cy="190.6" r="0.37"/><circle cx="191.9" cy="190.2" r="0.62"/><circle cx="197.6" cy="170.7" r="0.35"/><circle cx="192.6" cy="193.8" r="0.69"/><circle cx="212.5" cy="178.0" r="0.56"/><circle cx="192.0" cy="201.9" r="0.40"/><circle cx="190.1" cy="191.5" r="0.31"/><circle cx="197.7" cy="163.0" r="0.45"/><circle cx="205.5" cy="200.4" r="0.27"/><circle cx="213.2" cy="165.5" r="0.35"/><circle cx="207.6" cy="177.0" r="0.40"/><circle cx="205.9" cy="170.9" r="0.61"/><circle cx="195.9" cy="202.0" r="0.61"/><circle cx="205.0" cy="161.5" r="0.60"/><circle cx="190.8" cy="185.2" r="0.44"/><circle cx="191.8" cy="191.5" r="0.58"/><circle cx="206.4" cy="180.0" r="0.48"/></g>
<circle cx="230" cy="216.5" r="16.8" fill="#151515"/>
<g fill="#7a7a70"><circle cx="223.9" cy="212.7" r="0.50"/><circle cx="234.9" cy="202.6" r="0.50"/><circle cx="218.1" cy="220.0" r="0.36"/><circle cx="228.7" cy="223.0" r="0.38"/><circle cx="223.8" cy="219.0" r="0.30"/><circle cx="228.9" cy="227.7" r="0.49"/><circle cx="229.8" cy="201.9" r="0.43"/><circle cx="229.3" cy="212.8" r="0.25"/><circle cx="238.3" cy="206.9" r="0.32"/><circle cx="226.3" cy="221.3" r="0.50"/><circle cx="221.3" cy="227.7" r="0.36"/><circle cx="231.8" cy="206.4" r="0.48"/><circle cx="232.9" cy="206.6" r="0.28"/><circle cx="240.6" cy="209.7" r="0.50"/><circle cx="218.2" cy="221.5" r="0.45"/><circle cx="233.0" cy="211.9" r="0.30"/><circle cx="222.1" cy="211.8" r="0.46"/><circle cx="232.3" cy="206.5" r="0.47"/><circle cx="226.1" cy="215.6" r="0.41"/><circle cx="237.8" cy="209.6" r="0.30"/><circle cx="221.7" cy="207.0" r="0.27"/><circle cx="229.4" cy="213.1" r="0.35"/><circle cx="224.1" cy="205.3" r="0.41"/><circle cx="226.3" cy="206.9" r="0.48"/><circle cx="226.9" cy="214.3" r="0.50"/><circle cx="231.3" cy="225.8" r="0.46"/><circle cx="221.4" cy="206.9" r="0.27"/><circle cx="237.0" cy="218.7" r="0.30"/><circle cx="223.2" cy="203.7" r="0.48"/><circle cx="230.2" cy="211.7" r="0.43"/><circle cx="225.1" cy="216.1" r="0.47"/><circle cx="230.6" cy="216.1" r="0.39"/><circle cx="234.6" cy="206.9" r="0.40"/><circle cx="231.3" cy="212.5" r="0.39"/><circle cx="229.9" cy="214.2" r="0.45"/><circle cx="224.9" cy="217.9" r="0.30"/><circle cx="225.5" cy="218.6" r="0.39"/></g>
<g fill="#111" opacity="1"><circle cx="189.5" cy="149.9" r="1.08"/><circle cx="245.2" cy="229.1" r="0.58"/><circle cx="191.2" cy="171.8" r="1.11"/><circle cx="166.6" cy="203.7" r="1.28"/><circle cx="236.1" cy="140.7" r="0.56"/><circle cx="162.7" cy="212.7" r="0.98"/><circle cx="208.3" cy="187.8" r="0.83"/><circle cx="218.4" cy="208.1" r="1.23"/><circle cx="232.1" cy="223.6" r="1.23"/><circle cx="243.8" cy="215.3" r="0.52"/><circle cx="226.3" cy="229.2" r="0.84"/><circle cx="248.4" cy="158.9" r="1.25"/><circle cx="199.5" cy="214.2" r="0.70"/><circle cx="183.7" cy="176.6" r="0.76"/><circle cx="160.6" cy="186.5" r="1.28"/><circle cx="223.3" cy="237.9" r="1.11"/><circle cx="243.7" cy="244.4" r="1.10"/><circle cx="180.7" cy="166.2" r="0.83"/></g>
<g fill="#111"><circle cx="237" cy="52" r="1.2"/><circle cx="139" cy="84" r="1.5"/><circle cx="137" cy="105" r="1"/><circle cx="179" cy="114" r="1.6"/><circle cx="179" cy="148" r="1.2"/><circle cx="166" cy="139" r="1.2"/><circle cx="152" cy="147" r="1"/><circle cx="199" cy="122" r="0.9"/><circle cx="250" cy="184" r="1.5"/><circle cx="258" cy="190" r="1.4"/><circle cx="263" cy="199" r="1.2"/><circle cx="243" cy="193" r="1.5"/><circle cx="226" cy="176" r="1.1"/><circle cx="187" cy="232" r="1"/><circle cx="207" cy="232" r="1.4"/><circle cx="220" cy="227" r="1"/><circle cx="165" cy="172" r="1"/><circle cx="231" cy="163" r="1.2"/><ellipse cx="241" cy="193" rx="2" ry="1.2" transform="rotate(-30 241 193)"/></g>
<g stroke="#222" stroke-width="0.5" opacity="0.6"><path d="M139 84V72M179 114V140M237 52V68"/></g>
<ellipse cx="189" cy="63.5" rx="15" ry="24" transform="rotate(28 189 63.5)" fill="#151515"/><ellipse cx="215" cy="60" rx="12" ry="12.5" fill="#151515"/><ellipse cx="193" cy="62" rx="8" ry="15" transform="rotate(28 193 62)" fill="#9a9a90" opacity="0.75"/><g fill="#222"><circle cx="200.6" cy="65.9" r="0.37"/><circle cx="191.4" cy="57.7" r="0.45"/><circle cx="185.7" cy="60.9" r="0.60"/><circle cx="188.6" cy="57.6" r="0.62"/><circle cx="199.2" cy="62.4" r="0.58"/><circle cx="190.7" cy="58.9" r="0.61"/><circle cx="193.6" cy="67.9" r="0.38"/><circle cx="185.6" cy="66.8" r="0.39"/><circle cx="192.5" cy="56.6" r="0.61"/><circle cx="196.0" cy="65.1" r="0.41"/><circle cx="196.2" cy="62.7" r="0.47"/><circle cx="199.1" cy="65.2" r="0.53"/><circle cx="188.3" cy="67.9" r="0.37"/><circle cx="191.8" cy="62.1" r="0.36"/><circle cx="187.0" cy="68.4" r="0.63"/><circle cx="188.5" cy="56.4" r="0.69"/><circle cx="195.6" cy="69.4" r="0.40"/><circle cx="196.0" cy="55.7" r="0.65"/><circle cx="189.6" cy="59.9" r="0.51"/><circle cx="192.3" cy="57.4" r="0.30"/><circle cx="196.5" cy="68.7" r="0.39"/><circle cx="192.3" cy="69.6" r="0.31"/><circle cx="199.6" cy="67.7" r="0.36"/><circle cx="189.7" cy="67.6" r="0.47"/><circle cx="188.5" cy="62.6" r="0.33"/><circle cx="194.4" cy="64.3" r="0.58"/><circle cx="192.3" cy="70.0" r="0.44"/><circle cx="189.1" cy="62.2" r="0.52"/><circle cx="196.3" cy="63.1" r="0.45"/><circle cx="192.1" cy="57.8" r="0.62"/><circle cx="198.7" cy="65.8" r="0.58"/><circle cx="195.7" cy="54.5" r="0.34"/><circle cx="189.5" cy="56.2" r="0.38"/><circle cx="190.4" cy="60.5" r="0.40"/><circle cx="192.7" cy="67.8" r="0.59"/><circle cx="200.5" cy="63.5" r="0.42"/><circle cx="188.2" cy="56.2" r="0.66"/><circle cx="194.4" cy="66.8" r="0.40"/><circle cx="195.4" cy="65.6" r="0.63"/><circle cx="191.1" cy="53.4" r="0.42"/></g><g fill="#121212"><circle cx="178.6" cy="34" r="1.6"/><circle cx="202.8" cy="33.3" r="1.6"/><ellipse cx="176" cy="45.6" rx="1.5" ry="2.2"/><circle cx="217" cy="42.7" r="1.4"/><circle cx="219" cy="80.4" r="1.4"/><circle cx="193" cy="94" r="1.8"/><circle cx="203.7" cy="93.4" r="1.8"/><circle cx="212" cy="75.6" r="1"/></g></g><g filter="url(#soft)" transform="translate(795,0)">
<rect width="265" height="265" fill="url(#yel)"/>
<rect width="265" height="265" fill="url(#yel2)"/>
<path d="M117 0H134L130 16L122 26L116 12Z" fill="#f3df6a" opacity="0.45"/>
<path d="M0 0H117L115 16L106 26L101 44L103 64L96 73L88 79L85 93L84 101L78 101.5L72 104L67 108L63.5 113L61.5 119L60.5 125L60.5 165L0 165Z" fill="url(#lig)"/>
<path d="M0 214L8 214L14.5 211L20 209L28 212L36 217L40 223L45 227L50 238L54 251L57 265H0Z" fill="#dadad3"/>
<g stroke="#5a5a40" stroke-width="0.45" opacity="0.3" fill="none"><path d="M38 0V140M57 0V110M80 0V70M28 220V265M84 160V265M102 150V265M66 232V265M123 0V24M160 0V40M195 0V30M238 52V70M168 110V150M12 0V130"/></g>
<g stroke="#b0b0a8" stroke-width="0.45" opacity="0.3" fill="none"><path d="M0 30H90M0 78H80"/></g>
<path d="M0 138L6 132L12 126L16 130L20 120L22 108L26 108L30 124L36 136L44 144L52 147L60 144L60 165L0 165Z" fill="#1c1c1c" opacity="0.4" filter="url(#blur3)"/>
<g fill="#1a1a1a"><circle cx="3.0" cy="133.0" r="0.63"/><circle cx="10.7" cy="119.8" r="0.48"/><circle cx="10.1" cy="118.6" r="0.32"/><circle cx="1.4" cy="137.0" r="0.35"/><circle cx="16.5" cy="136.7" r="0.36"/><circle cx="12.5" cy="128.8" r="0.77"/><circle cx="7.9" cy="141.4" r="0.79"/><circle cx="17.2" cy="117.5" r="0.44"/><circle cx="2.4" cy="124.7" r="0.45"/><circle cx="3.6" cy="147.7" r="0.59"/><circle cx="7.4" cy="143.2" r="0.57"/><circle cx="1.2" cy="119.0" r="0.40"/><circle cx="8.6" cy="144.3" r="0.46"/><circle cx="9.1" cy="141.7" r="0.45"/><circle cx="14.0" cy="147.2" r="0.42"/><circle cx="10.5" cy="141.3" r="0.74"/><circle cx="5.8" cy="145.6" r="0.79"/><circle cx="8.4" cy="123.1" r="0.68"/><circle cx="9.8" cy="125.2" r="0.32"/><circle cx="15.3" cy="144.0" r="0.59"/><circle cx="6.3" cy="149.2" r="0.65"/><circle cx="11.6" cy="141.9" r="0.53"/><circle cx="18.9" cy="148.3" r="0.54"/><circle cx="1.2" cy="143.9" r="0.65"/><circle cx="19.9" cy="143.4" r="0.71"/><circle cx="7.7" cy="131.5" r="0.63"/><circle cx="9.2" cy="114.6" r="0.38"/><circle cx="1.2" cy="123.1" r="0.68"/><circle cx="5.0" cy="123.8" r="0.50"/><circle cx="1.6" cy="149.1" r="0.52"/><circle cx="17.7" cy="140.6" r="0.71"/><circle cx="5.6" cy="148.9" r="0.51"/><circle cx="17.7" cy="134.4" r="0.78"/><circle cx="3.5" cy="125.1" r="0.42"/><circle cx="9.7" cy="129.3" r="0.59"/><circle cx="0.1" cy="130.6" r="0.51"/><circle cx="11.3" cy="134.7" r="0.78"/><circle cx="10.3" cy="144.6" r="0.61"/><circle cx="1.1" cy="144.2" r="0.75"/><circle cx="17.5" cy="146.9" r="0.70"/><circle cx="8.0" cy="135.6" r="0.35"/><circle cx="1.2" cy="143.0" r="0.33"/><circle cx="3.2" cy="128.1" r="0.47"/><circle cx="0.0" cy="118.1" r="0.38"/><circle cx="7.3" cy="122.0" r="0.31"/><circle cx="12.3" cy="149.1" r="0.37"/><circle cx="6.9" cy="130.1" r="0.48"/><circle cx="17.0" cy="123.4" r="0.80"/><circle cx="9.7" cy="138.0" r="0.34"/><circle cx="6.9" cy="122.1" r="0.43"/><circle cx="3.2" cy="148.1" r="0.31"/><circle cx="10.6" cy="150.9" r="0.37"/><circle cx="0.5" cy="140.4" r="0.56"/><circle cx="17.3" cy="151.5" r="0.65"/><circle cx="7.3" cy="130.5" r="0.38"/><circle cx="10.7" cy="146.7" r="0.69"/><circle cx="4.5" cy="133.3" r="0.71"/><circle cx="17.1" cy="151.7" r="0.70"/><circle cx="14.8" cy="147.8" r="0.41"/><circle cx="7.1" cy="139.7" r="0.31"/><circle cx="5.6" cy="115.4" r="0.43"/><circle cx="19.1" cy="144.6" r="0.52"/><circle cx="19.8" cy="150.6" r="0.78"/><circle cx="4.4" cy="134.6" r="0.41"/><circle cx="4.1" cy="127.5" r="0.61"/><circle cx="16.8" cy="149.7" r="0.54"/><circle cx="16.0" cy="143.6" r="0.34"/><circle cx="18.2" cy="143.8" r="0.69"/><circle cx="9.6" cy="146.1" r="0.39"/><circle cx="6.7" cy="147.1" r="0.70"/><circle cx="7.9" cy="151.4" r="0.50"/><circle cx="14.5" cy="150.8" r="0.39"/><circle cx="3.0" cy="123.7" r="0.75"/><circle cx="2.9" cy="147.5" r="0.71"/><circle cx="13.1" cy="151.6" r="0.48"/><circle cx="2.6" cy="140.6" r="0.31"/><circle cx="13.0" cy="151.4" r="0.56"/><circle cx="8.7" cy="150.5" r="0.74"/><circle cx="4.2" cy="148.0" r="0.43"/><circle cx="4.8" cy="131.8" r="0.59"/><circle cx="8.4" cy="130.4" r="0.37"/><circle cx="7.1" cy="150.0" r="0.53"/><circle cx="18.1" cy="141.6" r="0.51"/><circle cx="10.0" cy="150.2" r="0.57"/><circle cx="0.4" cy="139.8" r="0.52"/><circle cx="0.1" cy="126.8" r="0.70"/><circle cx="9.5" cy="126.3" r="0.66"/><circle cx="6.5" cy="140.8" r="0.56"/><circle cx="15.7" cy="140.8" r="0.35"/><circle cx="5.0" cy="140.9" r="0.44"/><circle cx="10.2" cy="146.7" r="0.58"/><circle cx="18.2" cy="146.4" r="0.52"/><circle cx="10.1" cy="142.4" r="0.56"/><circle cx="9.0" cy="144.6" r="0.57"/><circle cx="18.8" cy="138.4" r="0.65"/><circle cx="18.8" cy="149.2" r="0.43"/><circle cx="18.9" cy="140.9" r="0.72"/><circle cx="2.4" cy="124.3" r="0.52"/><circle cx="4.8" cy="119.9" r="0.34"/><circle cx="15.7" cy="144.0" r="0.75"/><circle cx="14.3" cy="125.3" r="0.63"/><circle cx="17.7" cy="124.6" r="0.78"/><circle cx="19.1" cy="128.6" r="0.50"/><circle cx="19.8" cy="138.7" r="0.72"/><circle cx="8.6" cy="125.7" r="0.56"/><circle cx="3.9" cy="133.6" r="0.46"/><circle cx="0.4" cy="145.4" r="0.58"/><circle cx="0.4" cy="137.2" r="0.47"/><circle cx="10.2" cy="142.8" r="0.33"/><circle cx="15.8" cy="151.7" r="0.79"/><circle cx="5.3" cy="122.2" r="0.32"/><circle cx="5.4" cy="146.8" r="0.36"/><circle cx="18.2" cy="136.6" r="0.71"/><circle cx="3.0" cy="130.4" r="0.76"/><circle cx="14.0" cy="141.2" r="0.34"/><circle cx="13.8" cy="118.6" r="0.51"/><circle cx="18.8" cy="119.8" r="0.62"/><circle cx="1.7" cy="147.4" r="0.73"/><circle cx="17.3" cy="119.4" r="0.53"/><circle cx="11.1" cy="133.6" r="0.76"/><circle cx="2.6" cy="130.8" r="0.56"/><circle cx="2.2" cy="129.5" r="0.38"/><circle cx="4.0" cy="117.9" r="0.46"/><circle cx="15.2" cy="132.3" r="0.44"/><circle cx="3.6" cy="139.1" r="0.47"/><circle cx="5.0" cy="113.9" r="0.31"/><circle cx="11.0" cy="145.7" r="0.39"/><circle cx="18.7" cy="138.3" r="0.35"/><circle cx="8.6" cy="147.8" r="0.55"/><circle cx="7.9" cy="148.2" r="0.55"/><circle cx="19.6" cy="144.5" r="0.47"/><circle cx="14.1" cy="148.1" r="0.62"/><circle cx="7.0" cy="136.0" r="0.33"/><circle cx="1.4" cy="123.9" r="0.67"/><circle cx="3.3" cy="130.2" r="0.34"/><circle cx="17.4" cy="148.4" r="0.64"/><circle cx="4.8" cy="131.4" r="0.45"/><circle cx="3.2" cy="137.8" r="0.52"/><circle cx="19.2" cy="130.6" r="0.79"/><circle cx="4.9" cy="140.5" r="0.78"/></g>
<g fill="#1a1a1a"><circle cx="40.7" cy="137.8" r="0.30"/><circle cx="44.2" cy="140.3" r="0.55"/><circle cx="45.1" cy="133.4" r="0.30"/><circle cx="32.7" cy="136.1" r="0.50"/><circle cx="30.7" cy="123.4" r="0.45"/><circle cx="47.6" cy="134.8" r="0.56"/><circle cx="49.7" cy="150.5" r="0.66"/><circle cx="41.7" cy="153.4" r="0.46"/><circle cx="34.5" cy="155.7" r="0.66"/><circle cx="31.3" cy="147.9" r="0.72"/><circle cx="48.8" cy="153.7" r="0.67"/><circle cx="34.2" cy="152.0" r="0.56"/><circle cx="55.0" cy="144.1" r="0.70"/><circle cx="47.5" cy="152.3" r="0.75"/><circle cx="50.8" cy="148.9" r="0.41"/><circle cx="34.0" cy="122.2" r="0.48"/><circle cx="55.1" cy="128.3" r="0.58"/><circle cx="48.8" cy="147.5" r="0.64"/><circle cx="30.1" cy="143.7" r="0.70"/><circle cx="45.1" cy="150.5" r="0.57"/><circle cx="32.0" cy="148.3" r="0.67"/><circle cx="32.2" cy="135.6" r="0.43"/><circle cx="36.2" cy="150.0" r="0.67"/><circle cx="44.8" cy="155.5" r="0.49"/><circle cx="50.5" cy="143.4" r="0.68"/><circle cx="49.3" cy="147.2" r="0.34"/><circle cx="37.6" cy="130.7" r="0.67"/><circle cx="47.0" cy="137.6" r="0.31"/><circle cx="38.1" cy="125.1" r="0.64"/><circle cx="50.3" cy="149.1" r="0.45"/><circle cx="43.9" cy="144.5" r="0.53"/><circle cx="56.8" cy="129.1" r="0.40"/><circle cx="58.1" cy="155.5" r="0.31"/><circle cx="54.6" cy="142.8" r="0.78"/><circle cx="38.1" cy="142.5" r="0.40"/><circle cx="36.3" cy="154.9" r="0.59"/><circle cx="45.7" cy="130.4" r="0.78"/><circle cx="54.6" cy="129.9" r="0.55"/><circle cx="51.1" cy="153.6" r="0.42"/><circle cx="44.6" cy="153.8" r="0.31"/><circle cx="44.8" cy="117.5" r="0.53"/><circle cx="34.2" cy="137.5" r="0.47"/><circle cx="55.2" cy="138.1" r="0.30"/><circle cx="55.2" cy="150.5" r="0.36"/><circle cx="51.4" cy="154.5" r="0.75"/><circle cx="41.2" cy="137.1" r="0.50"/><circle cx="47.7" cy="156.0" r="0.48"/><circle cx="38.3" cy="141.8" r="0.32"/><circle cx="55.0" cy="128.1" r="0.44"/><circle cx="37.5" cy="154.7" r="0.43"/><circle cx="35.7" cy="144.3" r="0.49"/><circle cx="56.5" cy="155.1" r="0.71"/><circle cx="57.4" cy="147.6" r="0.77"/><circle cx="51.6" cy="145.4" r="0.32"/><circle cx="43.5" cy="150.1" r="0.68"/><circle cx="38.6" cy="147.9" r="0.32"/><circle cx="33.8" cy="154.5" r="0.54"/><circle cx="38.9" cy="139.0" r="0.67"/><circle cx="37.8" cy="155.5" r="0.63"/><circle cx="46.7" cy="137.5" r="0.50"/><circle cx="34.8" cy="131.8" r="0.40"/><circle cx="44.9" cy="154.0" r="0.41"/><circle cx="59.9" cy="154.0" r="0.52"/><circle cx="35.8" cy="130.3" r="0.35"/><circle cx="32.7" cy="139.0" r="0.42"/><circle cx="47.1" cy="135.8" r="0.74"/><circle cx="42.4" cy="150.5" r="0.51"/><circle cx="41.3" cy="144.7" r="0.47"/><circle cx="38.3" cy="125.2" r="0.78"/><circle cx="45.1" cy="129.5" r="0.61"/><circle cx="36.5" cy="153.1" r="0.44"/><circle cx="42.0" cy="135.4" r="0.52"/><circle cx="55.5" cy="155.0" r="0.74"/><circle cx="31.0" cy="121.1" r="0.65"/><circle cx="44.2" cy="153.8" r="0.59"/><circle cx="41.7" cy="115.5" r="0.76"/><circle cx="55.7" cy="152.3" r="0.79"/><circle cx="33.3" cy="135.4" r="0.38"/><circle cx="50.5" cy="144.6" r="0.77"/><circle cx="49.4" cy="149.8" r="0.68"/><circle cx="46.5" cy="142.7" r="0.32"/><circle cx="37.0" cy="151.3" r="0.76"/><circle cx="39.1" cy="147.9" r="0.36"/><circle cx="49.1" cy="135.6" r="0.65"/><circle cx="32.1" cy="128.7" r="0.56"/><circle cx="41.6" cy="146.3" r="0.41"/><circle cx="30.3" cy="146.8" r="0.45"/><circle cx="58.8" cy="142.8" r="0.62"/><circle cx="44.3" cy="153.5" r="0.42"/><circle cx="58.8" cy="135.4" r="0.65"/></g>
<path d="M0 150L5 148L10 146L14 142L18 140L20 136L21 125L22 113L23 103L23.5 96L25 96L25.5 103L27 113L29 125L31 135L33 144L36 150L42 153L50 154L56 152L60 146L62 130L110 135L107 146L103 158L99 171L96 160L92 166L88 166L85 153L80 152L76 156L73 178L69 178L68 232L63 233L60 212L55 200L50 206L45 198L40 208L38 217L34 214L30 210L25 214L20 212L17 184L12 184L10 179L5 178L0 174Z" fill="#121212"/>
<circle cx="24" cy="92" r="3.6" fill="#161616"/>
<circle cx="129" cy="49.5" r="25" fill="#151514"/>
<circle cx="99" cy="84.5" r="10" fill="#1a1a16"/>
<circle cx="85.5" cy="127" r="25.5" fill="#151514"/>
<g fill="#8d8d84"><circle cx="122.2" cy="36.2" r="0.48"/><circle cx="121.2" cy="62.2" r="0.32"/><circle cx="134.8" cy="30.6" r="0.32"/><circle cx="141.6" cy="47.1" r="0.33"/><circle cx="131.5" cy="64.1" r="0.58"/><circle cx="142.4" cy="54.8" r="0.56"/><circle cx="126.5" cy="26.7" r="0.37"/><circle cx="137.8" cy="69.9" r="0.26"/><circle cx="121.8" cy="37.3" r="0.37"/><circle cx="138.1" cy="30.7" r="0.27"/><circle cx="115.2" cy="51.8" r="0.32"/><circle cx="111.4" cy="60.5" r="0.26"/><circle cx="134.6" cy="50.7" r="0.34"/><circle cx="128.6" cy="27.7" r="0.35"/><circle cx="126.3" cy="36.8" r="0.25"/><circle cx="129.8" cy="27.5" r="0.58"/><circle cx="137.9" cy="45.2" r="0.51"/><circle cx="137.9" cy="31.4" r="0.36"/><circle cx="123.1" cy="62.0" r="0.28"/><circle cx="118.6" cy="69.7" r="0.60"/><circle cx="109.6" cy="49.7" r="0.33"/><circle cx="113.3" cy="58.5" r="0.51"/><circle cx="139.7" cy="34.1" r="0.54"/><circle cx="128.2" cy="39.3" r="0.34"/><circle cx="122.3" cy="62.3" r="0.43"/><circle cx="131.4" cy="70.0" r="0.60"/><circle cx="141.7" cy="59.0" r="0.54"/><circle cx="136.3" cy="56.3" r="0.45"/><circle cx="141.7" cy="43.5" r="0.41"/><circle cx="127.7" cy="69.7" r="0.29"/><circle cx="114.1" cy="39.2" r="0.38"/><circle cx="113.9" cy="38.6" r="0.25"/><circle cx="125.0" cy="59.1" r="0.44"/><circle cx="111.5" cy="43.8" r="0.31"/><circle cx="124.0" cy="35.6" r="0.36"/><circle cx="119.7" cy="61.1" r="0.60"/><circle cx="122.3" cy="57.2" r="0.32"/><circle cx="135.3" cy="36.3" r="0.41"/><circle cx="115.1" cy="32.5" r="0.47"/><circle cx="125.6" cy="65.7" r="0.29"/><circle cx="108.4" cy="50.7" r="0.32"/><circle cx="144.6" cy="65.5" r="0.42"/><circle cx="143.9" cy="39.2" r="0.31"/><circle cx="131.4" cy="38.9" r="0.55"/><circle cx="133.7" cy="40.9" r="0.39"/><circle cx="114.8" cy="47.9" r="0.34"/><circle cx="125.6" cy="28.0" r="0.45"/><circle cx="129.2" cy="45.0" r="0.29"/><circle cx="115.2" cy="39.5" r="0.36"/><circle cx="113.6" cy="58.0" r="0.48"/><circle cx="114.6" cy="54.5" r="0.47"/><circle cx="117.9" cy="50.2" r="0.52"/><circle cx="119.6" cy="52.0" r="0.29"/><circle cx="113.7" cy="55.4" r="0.47"/><circle cx="146.1" cy="59.2" r="0.43"/><circle cx="137.1" cy="46.9" r="0.60"/><circle cx="126.7" cy="28.9" r="0.59"/><circle cx="106.5" cy="50.6" r="0.31"/><circle cx="134.3" cy="28.0" r="0.37"/><circle cx="129.4" cy="40.3" r="0.35"/><circle cx="132.5" cy="41.5" r="0.57"/><circle cx="140.8" cy="68.4" r="0.56"/><circle cx="111.0" cy="46.0" r="0.56"/><circle cx="112.5" cy="43.5" r="0.29"/><circle cx="132.5" cy="38.2" r="0.45"/><circle cx="133.9" cy="39.0" r="0.59"/><circle cx="112.9" cy="39.9" r="0.25"/><circle cx="137.7" cy="51.4" r="0.40"/><circle cx="107.3" cy="47.8" r="0.33"/><circle cx="127.0" cy="46.7" r="0.37"/><circle cx="113.7" cy="40.6" r="0.47"/><circle cx="120.7" cy="50.8" r="0.34"/><circle cx="133.2" cy="55.2" r="0.55"/><circle cx="131.9" cy="35.2" r="0.25"/><circle cx="118.4" cy="35.9" r="0.48"/><circle cx="108.1" cy="57.2" r="0.34"/><circle cx="119.7" cy="55.7" r="0.52"/><circle cx="146.0" cy="50.8" r="0.30"/><circle cx="115.9" cy="33.4" r="0.36"/><circle cx="127.4" cy="54.3" r="0.52"/><circle cx="128.6" cy="47.7" r="0.51"/><circle cx="109.7" cy="53.8" r="0.33"/><circle cx="118.8" cy="66.6" r="0.55"/><circle cx="126.2" cy="38.0" r="0.40"/><circle cx="133.0" cy="33.3" r="0.47"/><circle cx="139.5" cy="47.2" r="0.26"/><circle cx="128.3" cy="60.7" r="0.58"/><circle cx="128.7" cy="36.4" r="0.36"/><circle cx="130.5" cy="71.4" r="0.49"/><circle cx="117.4" cy="29.9" r="0.54"/><circle cx="122.1" cy="29.3" r="0.50"/><circle cx="117.5" cy="44.0" r="0.47"/><circle cx="136.4" cy="50.8" r="0.37"/><circle cx="122.5" cy="32.4" r="0.51"/><circle cx="137.6" cy="30.5" r="0.27"/><circle cx="143.8" cy="33.3" r="0.29"/><circle cx="140.9" cy="32.6" r="0.54"/><circle cx="120.6" cy="40.4" r="0.28"/><circle cx="129.5" cy="39.1" r="0.40"/><circle cx="126.0" cy="35.9" r="0.59"/><circle cx="107.8" cy="49.0" r="0.26"/><circle cx="116.0" cy="57.4" r="0.37"/><circle cx="124.3" cy="33.3" r="0.55"/><circle cx="139.3" cy="49.6" r="0.59"/><circle cx="131.9" cy="40.0" r="0.37"/><circle cx="134.8" cy="39.3" r="0.35"/><circle cx="133.5" cy="30.8" r="0.47"/><circle cx="134.2" cy="45.2" r="0.26"/><circle cx="132.2" cy="60.9" r="0.43"/><circle cx="113.3" cy="64.4" r="0.41"/><circle cx="109.4" cy="45.6" r="0.48"/><circle cx="139.3" cy="33.9" r="0.31"/><circle cx="110.2" cy="57.1" r="0.29"/><circle cx="108.0" cy="54.6" r="0.32"/><circle cx="122.9" cy="67.8" r="0.30"/><circle cx="119.9" cy="48.2" r="0.32"/><circle cx="149.4" cy="47.4" r="0.40"/><circle cx="112.5" cy="61.6" r="0.43"/><circle cx="118.5" cy="37.9" r="0.46"/><circle cx="112.6" cy="60.7" r="0.40"/><circle cx="111.2" cy="40.6" r="0.33"/><circle cx="125.3" cy="28.3" r="0.50"/><circle cx="140.4" cy="34.3" r="0.41"/><circle cx="111.2" cy="59.3" r="0.47"/><circle cx="118.4" cy="39.3" r="0.58"/><circle cx="136.6" cy="66.5" r="0.39"/><circle cx="106.3" cy="50.9" r="0.44"/><circle cx="139.8" cy="66.7" r="0.43"/><circle cx="125.6" cy="33.4" r="0.54"/><circle cx="114.4" cy="47.5" r="0.32"/><circle cx="123.2" cy="36.3" r="0.29"/><circle cx="116.0" cy="56.8" r="0.37"/><circle cx="128.0" cy="60.3" r="0.58"/><circle cx="118.4" cy="47.7" r="0.39"/><circle cx="131.0" cy="57.5" r="0.53"/><circle cx="118.5" cy="37.7" r="0.33"/><circle cx="142.3" cy="46.4" r="0.54"/><circle cx="135.4" cy="35.1" r="0.44"/><circle cx="136.0" cy="39.9" r="0.34"/><circle cx="120.1" cy="53.9" r="0.50"/><circle cx="114.1" cy="51.4" r="0.48"/><circle cx="114.6" cy="66.4" r="0.27"/><circle cx="139.3" cy="30.2" r="0.30"/><circle cx="138.0" cy="33.5" r="0.25"/><circle cx="131.2" cy="36.1" r="0.57"/><circle cx="131.4" cy="40.4" r="0.46"/><circle cx="132.7" cy="31.1" r="0.53"/><circle cx="134.4" cy="40.8" r="0.44"/><circle cx="128.2" cy="34.3" r="0.44"/><circle cx="123.4" cy="49.7" r="0.30"/><circle cx="112.8" cy="50.4" r="0.55"/><circle cx="111.7" cy="42.3" r="0.38"/><circle cx="109.3" cy="60.5" r="0.47"/><circle cx="126.5" cy="46.6" r="0.49"/><circle cx="141.0" cy="44.0" r="0.43"/><circle cx="107.3" cy="51.6" r="0.50"/><circle cx="119.6" cy="40.0" r="0.38"/><circle cx="112.5" cy="52.2" r="0.32"/><circle cx="115.3" cy="55.4" r="0.54"/><circle cx="117.0" cy="49.2" r="0.59"/><circle cx="117.4" cy="32.6" r="0.36"/><circle cx="123.6" cy="66.3" r="0.52"/><circle cx="147.9" cy="54.4" r="0.44"/><circle cx="137.1" cy="70.0" r="0.48"/><circle cx="134.3" cy="28.2" r="0.47"/><circle cx="115.6" cy="35.8" r="0.49"/><circle cx="129.6" cy="42.2" r="0.26"/><circle cx="132.4" cy="27.8" r="0.38"/><circle cx="138.0" cy="31.2" r="0.34"/><circle cx="112.3" cy="57.3" r="0.27"/><circle cx="124.8" cy="47.6" r="0.53"/><circle cx="109.4" cy="39.5" r="0.25"/><circle cx="115.6" cy="61.0" r="0.59"/><circle cx="114.4" cy="51.8" r="0.48"/><circle cx="135.7" cy="48.1" r="0.30"/><circle cx="128.0" cy="39.6" r="0.52"/><circle cx="124.2" cy="28.8" r="0.28"/><circle cx="115.6" cy="35.5" r="0.58"/><circle cx="128.4" cy="72.1" r="0.25"/><circle cx="147.5" cy="51.2" r="0.28"/><circle cx="139.3" cy="37.2" r="0.38"/><circle cx="115.4" cy="42.6" r="0.30"/><circle cx="133.1" cy="36.2" r="0.47"/><circle cx="116.6" cy="56.5" r="0.58"/><circle cx="132.7" cy="32.6" r="0.27"/><circle cx="148.0" cy="46.4" r="0.37"/><circle cx="111.1" cy="35.5" r="0.46"/><circle cx="123.6" cy="63.5" r="0.38"/><circle cx="121.9" cy="33.1" r="0.53"/><circle cx="113.4" cy="57.7" r="0.56"/><circle cx="149.3" cy="55.0" r="0.55"/><circle cx="118.2" cy="44.2" r="0.53"/><circle cx="120.2" cy="29.3" r="0.28"/><circle cx="109.6" cy="42.7" r="0.51"/><circle cx="139.1" cy="44.9" r="0.49"/><circle cx="118.8" cy="51.8" r="0.51"/><circle cx="133.0" cy="34.4" r="0.53"/><circle cx="130.5" cy="38.5" r="0.56"/><circle cx="120.5" cy="44.2" r="0.31"/><circle cx="124.8" cy="36.3" r="0.39"/><circle cx="120.2" cy="48.5" r="0.60"/><circle cx="123.7" cy="54.8" r="0.53"/><circle cx="125.7" cy="49.1" r="0.60"/><circle cx="139.7" cy="37.5" r="0.34"/><circle cx="131.7" cy="34.7" r="0.52"/><circle cx="138.5" cy="29.0" r="0.26"/><circle cx="145.3" cy="54.9" r="0.41"/><circle cx="117.2" cy="41.1" r="0.59"/><circle cx="128.2" cy="66.8" r="0.58"/><circle cx="122.0" cy="36.9" r="0.31"/><circle cx="146.9" cy="37.0" r="0.27"/><circle cx="133.4" cy="30.6" r="0.59"/><circle cx="137.2" cy="52.5" r="0.58"/><circle cx="123.4" cy="38.2" r="0.52"/><circle cx="129.6" cy="58.2" r="0.25"/><circle cx="126.9" cy="39.6" r="0.57"/><circle cx="133.1" cy="71.3" r="0.56"/><circle cx="148.0" cy="40.4" r="0.41"/><circle cx="123.0" cy="43.2" r="0.27"/><circle cx="125.1" cy="32.8" r="0.55"/><circle cx="135.4" cy="45.1" r="0.27"/><circle cx="116.8" cy="51.2" r="0.32"/><circle cx="113.9" cy="66.7" r="0.57"/><circle cx="139.1" cy="56.6" r="0.27"/><circle cx="127.2" cy="37.2" r="0.26"/><circle cx="133.7" cy="36.9" r="0.25"/><circle cx="137.2" cy="35.0" r="0.40"/><circle cx="135.3" cy="56.9" r="0.50"/></g>
<g fill="#8d8d84"><circle cx="72.9" cy="116.8" r="0.32"/><circle cx="70.8" cy="114.4" r="0.45"/><circle cx="87.2" cy="132.6" r="0.39"/><circle cx="84.5" cy="121.7" r="0.37"/><circle cx="97.2" cy="109.1" r="0.26"/><circle cx="98.9" cy="118.5" r="0.34"/><circle cx="77.5" cy="126.2" r="0.54"/><circle cx="94.1" cy="117.3" r="0.38"/><circle cx="85.5" cy="121.3" r="0.58"/><circle cx="69.0" cy="127.5" r="0.44"/><circle cx="87.1" cy="123.4" r="0.49"/><circle cx="70.8" cy="119.3" r="0.29"/><circle cx="98.8" cy="112.8" r="0.29"/><circle cx="69.2" cy="127.7" r="0.29"/><circle cx="78.4" cy="131.8" r="0.55"/><circle cx="96.0" cy="140.9" r="0.31"/><circle cx="95.7" cy="107.2" r="0.40"/><circle cx="94.4" cy="112.9" r="0.58"/><circle cx="87.8" cy="113.8" r="0.37"/><circle cx="64.6" cy="136.0" r="0.57"/><circle cx="93.9" cy="107.6" r="0.43"/><circle cx="69.4" cy="135.6" r="0.44"/><circle cx="94.0" cy="128.1" r="0.52"/><circle cx="102.4" cy="119.9" r="0.56"/><circle cx="88.7" cy="124.2" r="0.34"/><circle cx="80.3" cy="116.2" r="0.57"/><circle cx="77.2" cy="119.1" r="0.40"/><circle cx="80.7" cy="120.6" r="0.58"/><circle cx="73.6" cy="126.0" r="0.44"/><circle cx="95.1" cy="111.8" r="0.48"/><circle cx="68.3" cy="121.6" r="0.36"/><circle cx="72.4" cy="138.8" r="0.37"/><circle cx="92.8" cy="118.4" r="0.42"/><circle cx="86.8" cy="117.9" r="0.55"/><circle cx="80.2" cy="129.1" r="0.40"/><circle cx="84.8" cy="119.4" r="0.59"/><circle cx="84.9" cy="118.0" r="0.37"/><circle cx="77.3" cy="110.9" r="0.54"/><circle cx="65.9" cy="124.8" r="0.52"/><circle cx="65.4" cy="130.2" r="0.57"/><circle cx="87.2" cy="109.5" r="0.59"/><circle cx="72.1" cy="120.5" r="0.56"/><circle cx="74.4" cy="118.2" r="0.41"/><circle cx="83.4" cy="114.7" r="0.44"/><circle cx="75.7" cy="135.7" r="0.55"/><circle cx="70.2" cy="127.0" r="0.36"/><circle cx="97.2" cy="109.5" r="0.32"/><circle cx="65.9" cy="136.8" r="0.27"/><circle cx="70.6" cy="120.6" r="0.52"/><circle cx="63.2" cy="121.5" r="0.43"/><circle cx="79.8" cy="113.8" r="0.46"/><circle cx="72.2" cy="145.0" r="0.43"/><circle cx="69.4" cy="120.4" r="0.59"/><circle cx="70.3" cy="128.3" r="0.60"/><circle cx="76.2" cy="141.0" r="0.31"/><circle cx="76.1" cy="147.7" r="0.43"/><circle cx="102.2" cy="140.9" r="0.54"/><circle cx="75.5" cy="126.7" r="0.47"/><circle cx="74.6" cy="118.7" r="0.47"/><circle cx="99.7" cy="130.9" r="0.36"/><circle cx="85.0" cy="125.7" r="0.54"/><circle cx="69.4" cy="117.3" r="0.42"/><circle cx="74.3" cy="123.1" r="0.44"/><circle cx="92.1" cy="133.3" r="0.29"/><circle cx="93.5" cy="110.9" r="0.27"/><circle cx="82.6" cy="113.6" r="0.34"/><circle cx="100.3" cy="123.2" r="0.34"/><circle cx="106.8" cy="133.1" r="0.36"/><circle cx="67.5" cy="113.5" r="0.58"/><circle cx="86.1" cy="141.3" r="0.33"/><circle cx="88.5" cy="116.1" r="0.38"/><circle cx="78.3" cy="124.1" r="0.38"/><circle cx="80.7" cy="130.4" r="0.54"/><circle cx="78.6" cy="115.5" r="0.50"/><circle cx="95.5" cy="133.6" r="0.29"/><circle cx="65.8" cy="134.3" r="0.31"/><circle cx="95.6" cy="124.3" r="0.43"/><circle cx="82.3" cy="115.7" r="0.46"/><circle cx="77.8" cy="135.4" r="0.32"/><circle cx="91.1" cy="121.2" r="0.44"/><circle cx="76.0" cy="112.5" r="0.39"/><circle cx="93.8" cy="132.0" r="0.36"/><circle cx="81.5" cy="120.5" r="0.38"/><circle cx="73.0" cy="127.0" r="0.36"/><circle cx="86.7" cy="135.1" r="0.35"/><circle cx="67.5" cy="139.5" r="0.56"/><circle cx="90.9" cy="120.6" r="0.26"/><circle cx="77.5" cy="110.1" r="0.39"/><circle cx="75.1" cy="110.8" r="0.55"/><circle cx="102.0" cy="141.6" r="0.50"/><circle cx="97.9" cy="130.1" r="0.31"/><circle cx="94.8" cy="112.3" r="0.34"/><circle cx="68.0" cy="134.6" r="0.25"/><circle cx="95.7" cy="109.5" r="0.27"/><circle cx="96.4" cy="112.8" r="0.34"/><circle cx="80.6" cy="113.4" r="0.54"/><circle cx="84.2" cy="133.8" r="0.40"/><circle cx="102.8" cy="118.9" r="0.54"/><circle cx="74.8" cy="115.8" r="0.49"/><circle cx="70.7" cy="134.2" r="0.29"/><circle cx="85.9" cy="122.2" r="0.53"/><circle cx="84.3" cy="144.0" r="0.47"/><circle cx="74.4" cy="123.9" r="0.38"/><circle cx="76.7" cy="132.4" r="0.30"/><circle cx="80.5" cy="108.9" r="0.33"/><circle cx="70.2" cy="125.5" r="0.37"/><circle cx="73.3" cy="121.9" r="0.44"/><circle cx="86.1" cy="117.6" r="0.46"/><circle cx="66.0" cy="131.9" r="0.29"/><circle cx="80.9" cy="112.3" r="0.36"/><circle cx="71.9" cy="129.7" r="0.28"/><circle cx="108.4" cy="128.6" r="0.28"/><circle cx="80.8" cy="104.7" r="0.29"/><circle cx="70.4" cy="128.1" r="0.44"/><circle cx="107.5" cy="128.1" r="0.47"/><circle cx="88.7" cy="106.2" r="0.32"/><circle cx="71.8" cy="110.9" r="0.31"/><circle cx="90.0" cy="106.5" r="0.36"/><circle cx="91.0" cy="117.2" r="0.45"/><circle cx="71.1" cy="112.0" r="0.57"/><circle cx="64.3" cy="134.9" r="0.26"/><circle cx="76.2" cy="130.7" r="0.25"/><circle cx="97.0" cy="109.1" r="0.40"/><circle cx="73.7" cy="133.4" r="0.48"/><circle cx="95.6" cy="107.6" r="0.35"/><circle cx="69.3" cy="133.0" r="0.32"/><circle cx="107.1" cy="123.1" r="0.59"/><circle cx="103.1" cy="122.7" r="0.27"/><circle cx="77.5" cy="110.9" r="0.45"/><circle cx="100.8" cy="122.3" r="0.35"/><circle cx="72.5" cy="119.8" r="0.45"/><circle cx="79.3" cy="131.7" r="0.56"/><circle cx="78.1" cy="124.7" r="0.34"/><circle cx="68.4" cy="128.2" r="0.45"/><circle cx="65.7" cy="134.9" r="0.50"/><circle cx="85.8" cy="119.2" r="0.50"/><circle cx="86.8" cy="118.6" r="0.27"/><circle cx="76.7" cy="121.1" r="0.50"/><circle cx="66.1" cy="136.7" r="0.56"/><circle cx="65.2" cy="118.5" r="0.31"/><circle cx="85.1" cy="113.6" r="0.49"/><circle cx="89.2" cy="119.8" r="0.51"/><circle cx="79.7" cy="122.6" r="0.53"/><circle cx="102.3" cy="141.4" r="0.34"/><circle cx="90.9" cy="141.4" r="0.45"/><circle cx="88.6" cy="117.6" r="0.35"/><circle cx="80.0" cy="113.9" r="0.56"/><circle cx="67.0" cy="122.4" r="0.58"/><circle cx="64.0" cy="126.8" r="0.26"/><circle cx="94.1" cy="146.0" r="0.39"/><circle cx="76.5" cy="128.4" r="0.39"/><circle cx="98.1" cy="114.1" r="0.37"/><circle cx="68.4" cy="130.5" r="0.37"/><circle cx="101.0" cy="129.0" r="0.27"/><circle cx="70.3" cy="120.0" r="0.60"/><circle cx="102.3" cy="130.7" r="0.56"/><circle cx="88.3" cy="108.9" r="0.38"/><circle cx="81.5" cy="147.1" r="0.58"/><circle cx="80.2" cy="115.5" r="0.51"/><circle cx="67.2" cy="126.0" r="0.44"/><circle cx="80.8" cy="130.2" r="0.36"/><circle cx="86.8" cy="128.5" r="0.41"/><circle cx="69.2" cy="132.8" r="0.31"/><circle cx="83.0" cy="110.1" r="0.37"/><circle cx="93.1" cy="142.8" r="0.37"/><circle cx="87.8" cy="112.1" r="0.27"/><circle cx="63.8" cy="129.1" r="0.34"/><circle cx="82.5" cy="116.7" r="0.32"/><circle cx="68.4" cy="114.1" r="0.32"/><circle cx="83.2" cy="104.5" r="0.28"/><circle cx="93.4" cy="107.0" r="0.30"/><circle cx="91.9" cy="142.6" r="0.47"/><circle cx="85.4" cy="108.5" r="0.49"/><circle cx="67.7" cy="127.6" r="0.41"/><circle cx="90.9" cy="126.6" r="0.50"/><circle cx="91.4" cy="113.2" r="0.46"/><circle cx="68.0" cy="120.7" r="0.37"/><circle cx="84.8" cy="115.3" r="0.52"/><circle cx="87.6" cy="114.4" r="0.59"/><circle cx="73.9" cy="130.5" r="0.58"/><circle cx="74.2" cy="110.2" r="0.60"/><circle cx="68.4" cy="126.8" r="0.58"/><circle cx="83.8" cy="105.0" r="0.26"/><circle cx="87.5" cy="115.8" r="0.42"/><circle cx="76.6" cy="116.8" r="0.41"/><circle cx="84.9" cy="121.1" r="0.39"/><circle cx="89.2" cy="122.8" r="0.39"/><circle cx="105.0" cy="116.1" r="0.33"/><circle cx="86.7" cy="137.3" r="0.47"/><circle cx="77.2" cy="123.1" r="0.55"/><circle cx="83.3" cy="146.8" r="0.35"/><circle cx="77.6" cy="141.0" r="0.31"/><circle cx="78.2" cy="110.8" r="0.45"/><circle cx="93.3" cy="119.9" r="0.38"/><circle cx="89.5" cy="106.0" r="0.55"/><circle cx="93.1" cy="122.3" r="0.28"/><circle cx="73.7" cy="145.6" r="0.56"/><circle cx="90.5" cy="108.6" r="0.43"/><circle cx="82.0" cy="118.9" r="0.43"/><circle cx="106.7" cy="122.6" r="0.35"/><circle cx="72.5" cy="122.2" r="0.49"/><circle cx="75.8" cy="113.1" r="0.49"/><circle cx="106.9" cy="124.6" r="0.39"/><circle cx="79.3" cy="140.5" r="0.39"/><circle cx="74.4" cy="136.7" r="0.60"/><circle cx="103.4" cy="127.6" r="0.34"/><circle cx="74.7" cy="117.9" r="0.32"/><circle cx="101.2" cy="141.1" r="0.57"/><circle cx="75.2" cy="113.5" r="0.59"/><circle cx="105.4" cy="127.1" r="0.43"/><circle cx="66.3" cy="114.4" r="0.47"/><circle cx="84.9" cy="112.9" r="0.39"/><circle cx="67.7" cy="124.0" r="0.36"/><circle cx="73.8" cy="114.7" r="0.46"/><circle cx="82.5" cy="110.6" r="0.33"/><circle cx="69.0" cy="124.5" r="0.33"/><circle cx="72.2" cy="110.8" r="0.55"/></g>
<g fill="#6d6a50"><circle cx="104.4" cy="86.0" r="0.45"/><circle cx="101.5" cy="87.0" r="0.28"/><circle cx="94.0" cy="90.8" r="0.36"/><circle cx="103.8" cy="87.5" r="0.42"/><circle cx="93.1" cy="86.4" r="0.44"/><circle cx="103.4" cy="90.5" r="0.38"/><circle cx="99.4" cy="90.0" r="0.35"/><circle cx="103.0" cy="84.9" r="0.26"/><circle cx="102.3" cy="91.4" r="0.33"/><circle cx="99.4" cy="92.7" r="0.41"/><circle cx="101.6" cy="81.4" r="0.45"/><circle cx="95.0" cy="80.8" r="0.36"/><circle cx="93.9" cy="90.1" r="0.35"/><circle cx="94.2" cy="78.0" r="0.35"/><circle cx="91.4" cy="80.4" r="0.49"/><circle cx="97.7" cy="79.2" r="0.33"/><circle cx="106.1" cy="87.9" r="0.38"/><circle cx="90.5" cy="84.7" r="0.26"/><circle cx="93.9" cy="81.1" r="0.46"/><circle cx="93.7" cy="87.7" r="0.36"/><circle cx="92.6" cy="84.9" r="0.42"/><circle cx="98.7" cy="78.8" r="0.42"/><circle cx="91.6" cy="81.9" r="0.28"/><circle cx="99.5" cy="87.0" r="0.28"/><circle cx="105.6" cy="88.6" r="0.26"/></g>
<ellipse cx="200" cy="184" rx="18" ry="23" fill="url(#scat)"/>
<path d="M176 163C176 152 181 146 189 146C197 146 202 153 203 162C204 170 205 178 203 185C200 190 194 190 188 186C180 181 176 174 176 163Z" fill="#141414"/>
<g fill="#141414"><circle cx="183.3" cy="153.8" r="0.43"/><circle cx="185.3" cy="156.4" r="1.00"/><circle cx="195.1" cy="152.4" r="0.60"/><circle cx="187.8" cy="165.9" r="0.56"/><circle cx="188.3" cy="174.9" r="0.92"/><circle cx="178.3" cy="162.1" r="0.43"/><circle cx="184.0" cy="180.0" r="0.91"/><circle cx="188.7" cy="173.2" r="0.72"/><circle cx="181.3" cy="173.8" r="0.75"/><circle cx="179.5" cy="176.7" r="0.95"/><circle cx="185.6" cy="164.8" r="0.72"/><circle cx="178.9" cy="172.5" r="0.56"/><circle cx="191.5" cy="157.7" r="0.88"/><circle cx="180.0" cy="160.1" r="0.67"/><circle cx="191.8" cy="163.3" r="0.78"/><circle cx="203.2" cy="170.5" r="0.76"/><circle cx="195.5" cy="179.9" r="0.88"/><circle cx="175.9" cy="166.1" r="0.58"/><circle cx="192.6" cy="180.2" r="0.95"/><circle cx="190.4" cy="170.9" r="0.87"/><circle cx="198.8" cy="162.9" r="0.55"/><circle cx="200.0" cy="158.6" r="0.43"/><circle cx="187.9" cy="162.9" r="0.58"/><circle cx="190.3" cy="178.1" r="0.74"/><circle cx="197.7" cy="178.6" r="0.90"/><circle cx="197.3" cy="177.7" r="0.63"/><circle cx="198.7" cy="168.0" r="0.53"/><circle cx="184.3" cy="164.6" r="0.84"/><circle cx="177.1" cy="171.6" r="0.90"/><circle cx="200.1" cy="176.7" r="0.96"/><circle cx="180.5" cy="164.6" r="0.85"/><circle cx="173.6" cy="166.3" r="0.69"/><circle cx="197.1" cy="156.7" r="0.45"/><circle cx="194.3" cy="172.4" r="0.91"/><circle cx="191.2" cy="181.2" r="0.76"/><circle cx="198.2" cy="164.1" r="0.79"/><circle cx="197.8" cy="168.9" r="0.55"/><circle cx="188.7" cy="159.2" r="0.58"/><circle cx="199.8" cy="171.1" r="0.73"/><circle cx="191.9" cy="154.0" r="0.42"/><circle cx="184.0" cy="165.6" r="0.48"/><circle cx="180.6" cy="161.5" r="0.80"/><circle cx="192.4" cy="171.6" r="0.60"/><circle cx="197.2" cy="153.5" r="0.49"/><circle cx="201.5" cy="174.4" r="0.70"/><circle cx="183.7" cy="164.8" r="0.50"/><circle cx="177.9" cy="163.5" r="0.52"/><circle cx="183.1" cy="170.1" r="0.54"/><circle cx="196.8" cy="157.8" r="0.41"/><circle cx="199.5" cy="162.1" r="0.74"/><circle cx="186.1" cy="158.9" r="0.49"/><circle cx="188.7" cy="168.8" r="0.71"/><circle cx="185.1" cy="180.6" r="0.75"/><circle cx="190.2" cy="178.3" r="0.83"/><circle cx="196.3" cy="169.0" r="0.99"/><circle cx="201.2" cy="169.2" r="0.89"/><circle cx="181.1" cy="178.1" r="0.95"/><circle cx="204.5" cy="167.0" r="0.64"/><circle cx="195.7" cy="170.2" r="0.81"/><circle cx="194.5" cy="173.6" r="0.52"/></g>
<g fill="#111" opacity="1"><circle cx="196.2" cy="176.6" r="0.69"/><circle cx="217.9" cy="199.6" r="0.47"/><circle cx="203.9" cy="199.0" r="0.66"/><circle cx="211.0" cy="191.8" r="0.34"/><circle cx="207.5" cy="202.3" r="0.60"/><circle cx="192.6" cy="195.9" r="0.41"/><circle cx="194.5" cy="208.3" r="0.55"/><circle cx="210.9" cy="166.7" r="0.62"/><circle cx="216.2" cy="205.2" r="0.59"/><circle cx="213.3" cy="200.1" r="0.52"/><circle cx="202.2" cy="201.3" r="0.60"/><circle cx="214.4" cy="174.9" r="0.68"/><circle cx="204.9" cy="207.3" r="0.30"/><circle cx="217.1" cy="199.4" r="0.36"/><circle cx="213.5" cy="171.6" r="0.34"/><circle cx="202.8" cy="171.8" r="0.47"/><circle cx="215.4" cy="194.3" r="0.57"/><circle cx="201.0" cy="199.2" r="0.61"/><circle cx="209.1" cy="207.1" r="0.62"/><circle cx="201.4" cy="164.4" r="0.54"/><circle cx="213.4" cy="177.0" r="0.52"/><circle cx="213.4" cy="199.6" r="0.25"/><circle cx="203.7" cy="160.8" r="0.30"/><circle cx="212.7" cy="180.9" r="0.52"/><circle cx="202.8" cy="176.8" r="0.35"/><circle cx="199.9" cy="202.2" r="0.53"/><circle cx="198.2" cy="164.4" r="0.37"/><circle cx="209.6" cy="182.1" r="0.55"/><circle cx="212.6" cy="166.0" r="0.56"/><circle cx="191.2" cy="201.1" r="0.33"/><circle cx="197.6" cy="207.9" r="0.41"/><circle cx="196.3" cy="204.5" r="0.52"/><circle cx="215.0" cy="179.7" r="0.47"/><circle cx="216.8" cy="185.3" r="0.69"/><circle cx="195.3" cy="201.5" r="0.32"/><circle cx="204.8" cy="160.0" r="0.33"/><circle cx="216.5" cy="182.7" r="0.61"/><circle cx="197.0" cy="177.6" r="0.30"/><circle cx="205.5" cy="203.1" r="0.48"/><circle cx="200.5" cy="206.4" r="0.65"/><circle cx="208.7" cy="163.8" r="0.53"/><circle cx="202.4" cy="207.9" r="0.41"/><circle cx="208.5" cy="191.6" r="0.42"/><circle cx="204.6" cy="193.8" r="0.66"/><circle cx="203.9" cy="178.2" r="0.69"/><circle cx="191.6" cy="201.7" r="0.56"/><circle cx="205.6" cy="182.4" r="0.59"/><circle cx="215.0" cy="196.4" r="0.59"/><circle cx="191.0" cy="176.3" r="0.31"/><circle cx="216.7" cy="204.6" r="0.32"/><circle cx="206.5" cy="188.8" r="0.27"/><circle cx="201.0" cy="197.4" r="0.54"/><circle cx="197.9" cy="198.1" r="0.38"/><circle cx="205.2" cy="181.0" r="0.69"/><circle cx="208.2" cy="200.2" r="0.55"/><circle cx="200.7" cy="208.2" r="0.57"/><circle cx="209.3" cy="173.9" r="0.32"/><circle cx="206.1" cy="201.3" r="0.61"/><circle cx="199.7" cy="167.0" r="0.48"/><circle cx="214.6" cy="168.1" r="0.58"/><circle cx="194.8" cy="175.6" r="0.27"/><circle cx="198.3" cy="179.1" r="0.69"/><circle cx="216.9" cy="169.4" r="0.39"/><circle cx="216.4" cy="169.9" r="0.39"/><circle cx="202.3" cy="165.4" r="0.37"/><circle cx="201.0" cy="179.3" r="0.68"/><circle cx="197.5" cy="170.2" r="0.66"/><circle cx="202.6" cy="201.9" r="0.54"/><circle cx="211.8" cy="175.7" r="0.32"/><circle cx="211.2" cy="183.5" r="0.50"/><circle cx="208.8" cy="197.6" r="0.37"/><circle cx="200.2" cy="205.9" r="0.49"/><circle cx="198.1" cy="191.5" r="0.37"/><circle cx="211.6" cy="162.1" r="0.62"/><circle cx="205.9" cy="177.7" r="0.67"/><circle cx="197.4" cy="172.2" r="0.28"/><circle cx="205.4" cy="197.7" r="0.56"/><circle cx="201.6" cy="200.4" r="0.30"/><circle cx="198.6" cy="192.2" r="0.69"/><circle cx="207.7" cy="194.6" r="0.60"/><circle cx="201.0" cy="207.0" r="0.58"/><circle cx="199.6" cy="179.6" r="0.61"/><circle cx="199.8" cy="169.3" r="0.64"/><circle cx="204.9" cy="186.1" r="0.55"/><circle cx="215.2" cy="166.7" r="0.40"/><circle cx="191.8" cy="180.7" r="0.48"/><circle cx="213.9" cy="193.4" r="0.51"/><circle cx="201.3" cy="188.7" r="0.37"/><circle cx="213.7" cy="199.4" r="0.63"/><circle cx="194.2" cy="193.6" r="0.59"/><circle cx="204.0" cy="204.9" r="0.65"/><circle cx="210.8" cy="201.0" r="0.54"/><circle cx="214.6" cy="166.6" r="0.57"/><circle cx="209.7" cy="190.6" r="0.37"/><circle cx="191.9" cy="190.2" r="0.62"/><circle cx="197.6" cy="170.7" r="0.35"/><circle cx="192.6" cy="193.8" r="0.69"/><circle cx="212.5" cy="178.0" r="0.56"/><circle cx="192.0" cy="201.9" r="0.40"/><circle cx="190.1" cy="191.5" r="0.31"/><circle cx="197.7" cy="163.0" r="0.45"/><circle cx="205.5" cy="200.4" r="0.27"/><circle cx="213.2" cy="165.5" r="0.35"/><circle cx="207.6" cy="177.0" r="0.40"/><circle cx="205.9" cy="170.9" r="0.61"/><circle cx="195.9" cy="202.0" r="0.61"/><circle cx="205.0" cy="161.5" r="0.60"/><circle cx="190.8" cy="185.2" r="0.44"/><circle cx="191.8" cy="191.5" r="0.58"/><circle cx="206.4" cy="180.0" r="0.48"/></g>
<circle cx="230" cy="216.5" r="16.8" fill="#151515"/>
<g fill="#7a7a70"><circle cx="223.9" cy="212.7" r="0.50"/><circle cx="234.9" cy="202.6" r="0.50"/><circle cx="218.1" cy="220.0" r="0.36"/><circle cx="228.7" cy="223.0" r="0.38"/><circle cx="223.8" cy="219.0" r="0.30"/><circle cx="228.9" cy="227.7" r="0.49"/><circle cx="229.8" cy="201.9" r="0.43"/><circle cx="229.3" cy="212.8" r="0.25"/><circle cx="238.3" cy="206.9" r="0.32"/><circle cx="226.3" cy="221.3" r="0.50"/><circle cx="221.3" cy="227.7" r="0.36"/><circle cx="231.8" cy="206.4" r="0.48"/><circle cx="232.9" cy="206.6" r="0.28"/><circle cx="240.6" cy="209.7" r="0.50"/><circle cx="218.2" cy="221.5" r="0.45"/><circle cx="233.0" cy="211.9" r="0.30"/><circle cx="222.1" cy="211.8" r="0.46"/><circle cx="232.3" cy="206.5" r="0.47"/><circle cx="226.1" cy="215.6" r="0.41"/><circle cx="237.8" cy="209.6" r="0.30"/><circle cx="221.7" cy="207.0" r="0.27"/><circle cx="229.4" cy="213.1" r="0.35"/><circle cx="224.1" cy="205.3" r="0.41"/><circle cx="226.3" cy="206.9" r="0.48"/><circle cx="226.9" cy="214.3" r="0.50"/><circle cx="231.3" cy="225.8" r="0.46"/><circle cx="221.4" cy="206.9" r="0.27"/><circle cx="237.0" cy="218.7" r="0.30"/><circle cx="223.2" cy="203.7" r="0.48"/><circle cx="230.2" cy="211.7" r="0.43"/><circle cx="225.1" cy="216.1" r="0.47"/><circle cx="230.6" cy="216.1" r="0.39"/><circle cx="234.6" cy="206.9" r="0.40"/><circle cx="231.3" cy="212.5" r="0.39"/><circle cx="229.9" cy="214.2" r="0.45"/><circle cx="224.9" cy="217.9" r="0.30"/><circle cx="225.5" cy="218.6" r="0.39"/></g>
<g fill="#111" opacity="1"><circle cx="189.5" cy="149.9" r="1.08"/><circle cx="245.2" cy="229.1" r="0.58"/><circle cx="191.2" cy="171.8" r="1.11"/><circle cx="166.6" cy="203.7" r="1.28"/><circle cx="236.1" cy="140.7" r="0.56"/><circle cx="162.7" cy="212.7" r="0.98"/><circle cx="208.3" cy="187.8" r="0.83"/><circle cx="218.4" cy="208.1" r="1.23"/><circle cx="232.1" cy="223.6" r="1.23"/><circle cx="243.8" cy="215.3" r="0.52"/><circle cx="226.3" cy="229.2" r="0.84"/><circle cx="248.4" cy="158.9" r="1.25"/><circle cx="199.5" cy="214.2" r="0.70"/><circle cx="183.7" cy="176.6" r="0.76"/><circle cx="160.6" cy="186.5" r="1.28"/><circle cx="223.3" cy="237.9" r="1.11"/><circle cx="243.7" cy="244.4" r="1.10"/><circle cx="180.7" cy="166.2" r="0.83"/></g>
<g fill="#111"><circle cx="237" cy="52" r="1.2"/><circle cx="139" cy="84" r="1.5"/><circle cx="137" cy="105" r="1"/><circle cx="179" cy="114" r="1.6"/><circle cx="179" cy="148" r="1.2"/><circle cx="166" cy="139" r="1.2"/><circle cx="152" cy="147" r="1"/><circle cx="199" cy="122" r="0.9"/><circle cx="250" cy="184" r="1.5"/><circle cx="258" cy="190" r="1.4"/><circle cx="263" cy="199" r="1.2"/><circle cx="243" cy="193" r="1.5"/><circle cx="226" cy="176" r="1.1"/><circle cx="187" cy="232" r="1"/><circle cx="207" cy="232" r="1.4"/><circle cx="220" cy="227" r="1"/><circle cx="165" cy="172" r="1"/><circle cx="231" cy="163" r="1.2"/><ellipse cx="241" cy="193" rx="2" ry="1.2" transform="rotate(-30 241 193)"/></g>
<g stroke="#222" stroke-width="0.5" opacity="0.6"><path d="M139 84V72M179 114V140M237 52V68"/></g>
<circle cx="200.5" cy="67" r="14.5" fill="#dad6c6"/><g fill="#333"><circle cx="196.1" cy="77.1" r="0.46"/><circle cx="202.9" cy="68.5" r="0.30"/><circle cx="211.6" cy="61.9" r="0.32"/><circle cx="207.3" cy="73.3" r="0.38"/><circle cx="198.5" cy="57.8" r="0.29"/><circle cx="207.8" cy="70.4" r="0.34"/><circle cx="197.5" cy="61.7" r="0.42"/><circle cx="197.8" cy="55.9" r="0.41"/><circle cx="211.8" cy="61.5" r="0.29"/><circle cx="190.5" cy="69.8" r="0.26"/><circle cx="212.8" cy="65.5" r="0.41"/><circle cx="195.3" cy="62.1" r="0.51"/><circle cx="201.6" cy="58.5" r="0.39"/><circle cx="211.1" cy="74.1" r="0.35"/><circle cx="201.0" cy="62.3" r="0.27"/><circle cx="205.4" cy="75.1" r="0.31"/><circle cx="205.7" cy="77.1" r="0.37"/><circle cx="205.1" cy="71.5" r="0.29"/><circle cx="199.8" cy="78.2" r="0.57"/><circle cx="188.0" cy="69.2" r="0.35"/><circle cx="189.8" cy="69.4" r="0.30"/><circle cx="204.9" cy="78.9" r="0.53"/><circle cx="197.1" cy="72.5" r="0.41"/><circle cx="205.5" cy="66.7" r="0.36"/><circle cx="205.7" cy="76.9" r="0.32"/><circle cx="190.2" cy="72.8" r="0.45"/><circle cx="211.8" cy="67.7" r="0.56"/><circle cx="207.6" cy="64.8" r="0.54"/><circle cx="199.7" cy="74.8" r="0.37"/><circle cx="197.4" cy="70.0" r="0.57"/><circle cx="191.7" cy="72.5" r="0.51"/><circle cx="200.9" cy="79.5" r="0.60"/><circle cx="198.9" cy="55.8" r="0.34"/><circle cx="196.0" cy="60.3" r="0.30"/><circle cx="193.2" cy="65.2" r="0.37"/><circle cx="207.2" cy="57.1" r="0.30"/><circle cx="210.9" cy="62.8" r="0.48"/><circle cx="212.1" cy="70.6" r="0.41"/><circle cx="194.4" cy="76.7" r="0.55"/><circle cx="202.2" cy="74.4" r="0.29"/><circle cx="199.5" cy="68.9" r="0.33"/><circle cx="203.6" cy="68.5" r="0.32"/><circle cx="192.5" cy="68.9" r="0.58"/><circle cx="196.7" cy="76.6" r="0.41"/><circle cx="209.5" cy="60.4" r="0.56"/><circle cx="196.7" cy="65.1" r="0.54"/><circle cx="191.5" cy="65.9" r="0.56"/><circle cx="197.5" cy="61.9" r="0.38"/><circle cx="211.0" cy="64.2" r="0.57"/><circle cx="210.3" cy="69.2" r="0.50"/><circle cx="196.9" cy="68.7" r="0.54"/><circle cx="202.4" cy="59.5" r="0.51"/><circle cx="202.4" cy="61.2" r="0.60"/><circle cx="193.2" cy="70.3" r="0.58"/><circle cx="202.6" cy="73.8" r="0.51"/><circle cx="204.2" cy="75.9" r="0.48"/><circle cx="208.4" cy="77.0" r="0.45"/><circle cx="202.1" cy="61.7" r="0.44"/><circle cx="201.2" cy="54.9" r="0.57"/><circle cx="201.0" cy="68.9" r="0.56"/><circle cx="210.8" cy="59.6" r="0.58"/><circle cx="195.9" cy="65.2" r="0.53"/><circle cx="191.5" cy="71.6" r="0.35"/><circle cx="192.3" cy="71.5" r="0.28"/><circle cx="208.1" cy="67.3" r="0.51"/><circle cx="201.0" cy="73.6" r="0.31"/><circle cx="190.6" cy="59.6" r="0.45"/><circle cx="198.4" cy="55.9" r="0.50"/><circle cx="198.8" cy="78.8" r="0.27"/><circle cx="208.6" cy="64.0" r="0.27"/><circle cx="203.6" cy="56.8" r="0.41"/><circle cx="192.1" cy="57.1" r="0.52"/><circle cx="200.7" cy="72.8" r="0.39"/><circle cx="195.2" cy="62.2" r="0.33"/><circle cx="205.4" cy="69.9" r="0.43"/><circle cx="204.1" cy="75.2" r="0.59"/><circle cx="187.9" cy="68.1" r="0.32"/><circle cx="196.4" cy="64.3" r="0.28"/><circle cx="196.7" cy="54.8" r="0.37"/><circle cx="193.6" cy="70.5" r="0.39"/><circle cx="207.5" cy="76.9" r="0.25"/><circle cx="207.0" cy="58.0" r="0.47"/><circle cx="207.7" cy="63.0" r="0.35"/><circle cx="190.5" cy="63.5" r="0.58"/><circle cx="205.3" cy="73.2" r="0.53"/><circle cx="191.5" cy="61.3" r="0.58"/><circle cx="192.6" cy="64.5" r="0.29"/><circle cx="209.8" cy="60.0" r="0.36"/><circle cx="191.4" cy="68.2" r="0.56"/><circle cx="194.9" cy="74.7" r="0.47"/></g><g fill="#121212"><circle cx="187" cy="55.6" r="2.5"/><path d="M179 50L187 54L186 57Z"/><circle cx="192" cy="92.5" r="2.6"/><path d="M187.5 82L193 90L190 92Z"/><circle cx="177.5" cy="33.3" r="1.3"/><circle cx="183.6" cy="48.7" r="1"/><circle cx="208.6" cy="36" r="1"/><circle cx="212.5" cy="46.6" r="1"/><circle cx="213.3" cy="52" r="1.5"/><circle cx="183" cy="71" r="1.5"/><circle cx="192.7" cy="77.5" r="1.6"/><circle cx="203" cy="86" r="1.2"/><circle cx="167.6" cy="66" r="1"/><circle cx="205" cy="62" r="1.3"/></g></g></svg></div><!--imgend-->
<!-- h scrollbar -->
<div class="a" style="left:236px;top:804px;width:1064px;height:16px;background:#f1f1f1"></div>
<div class="a" style="left:253px;top:806px;width:623px;height:13px;background:#c1c1c1"></div>
<svg class="a" style="left:241px;top:809px" width="6" height="7" viewBox="0 0 6 7"><path d="M5 0V7L0 3.5Z" fill="#a3a3a3"/></svg>
<svg class="a" style="left:1288px;top:808px" width="6" height="8" viewBox="0 0 6 8"><path d="M0 0V8L6 4Z" fill="#505050"/></svg>

<!-- cell 2 -->
<div class="a" style="left:205px;top:830px;width:1096px;height:123px;background:#fff;box-shadow:0 1px 3px rgba(0,0,0,0.22)"></div>
<div class="a" style="left:206px;top:830px;width:30px;height:58px;background:#ececec"></div>
<div class="a" style="left:236px;top:830px;width:1065px;height:58px;background:#f7f7f7"></div>
<svg class="a" style="left:194px;top:840px" width="8" height="6" viewBox="0 0 8 6"><path d="M0.6 3L3 5.3L7.4 0.7" fill="none" stroke="#34a853" stroke-width="1.1"/></svg>
<div class="a" style="left:193px;top:847px;font-size:6.5px;color:#5f6368;letter-spacing:-0.2px">2s</div>
<svg class="a" style="left:214px;top:837px" width="15" height="15" viewBox="0 0 15 15"><circle cx="7.5" cy="7.5" r="6.9" fill="#3c3c3c"/><path d="M5.6 4.2V10.8L10.8 7.5Z" fill="#fff"/></svg>
<div class="a code ln" style="left:221px;top:837px;width:32px;text-align:right;line-height:14.45px">1
2
<span style="color:#000">3</span></div>
<div class="a code" style="left:258px;top:837px;line-height:14.45px"><span class="kw">for</span> i, im <span class="kb">in</span> <span class="fn">enumerate</span><span class="br">(</span>images<span class="br">)</span>:
  im.save<span class="br">(</span><span class="kb">f</span><span class="str">'image</span><span class="num">{</span>i<span class="num">}</span><span class="str">.png'</span><span class="br">)</span>
  <span class="fn">print</span><span class="br">(</span><span class="kb">f</span><span class="str">'image</span><span class="num">{</span>i<span class="num">}</span><span class="str">.png'</span><span class="br">)</span></div>
<svg class="a" style="left:214px;top:893px" width="17" height="14" viewBox="0 0 17 14"><path d="M1.5 4V2.5A1.5 1.5 0 0 1 3 1H10.5A1.5 1.5 0 0 1 12 2.5V4M1.5 10V11.5A1.5 1.5 0 0 0 3 13H10.5A1.5 1.5 0 0 0 12 11.5V10" fill="none" stroke="#5f6368" stroke-width="1.3"/><path d="M0 7H8M5.5 4.5L8 7L5.5 9.5" fill="none" stroke="#5f6368" stroke-width="1.3"/><path d="M11.5 5.5H16.5L14 8Z" fill="#5f6368"/></svg>
<div class="a code" style="left:240px;top:895px;line-height:13.07px">image0.png
image1.png
image2.png
image3.png</div>
<!-- v scrollbar thumb -->
<div class="a" style="left:1304px;top:833px;width:9px;height:107px;background:#dadada;border:1px solid #c8c8c8"></div>
<!-- cell toolbar -->
<div class="a" style="left:1106px;top:815px;width:191px;height:24px;background:#fff;border-radius:3px;box-shadow:0 1px 3px rgba(0,0,0,0.3)"></div>
<svg class="a" style="left:1112px;top:819px" width="180" height="16" viewBox="0 0 180 16">
<path d="M6 14V3M1.5 7.5L6 3L10.5 7.5" fill="none" stroke="#5f6368" stroke-width="1.5"/>
<path d="M30 2V13M25.5 8.5L30 13L34.5 8.5" fill="none" stroke="#b5b5b5" stroke-width="1.3"/>
<path d="M52 5H49A3 3 0 0 0 49 11H52M56 5H59A3 3 0 0 1 59 11H56M50.5 8H57.5" fill="none" stroke="#5f6368" stroke-width="1.4"/>
<path d="M72 2H84V12.5H81.5L84.5 15.5V12.5M72 2V12.5H81.5" fill="none" stroke="#5f6368" stroke-width="1.3"/><path d="M74.5 5H81.5M74.5 7.3H81.5M74.5 9.6H81.5" stroke="#5f6368" stroke-width="1"/>
<g transform="translate(95,1) scale(0.6)"><path fill="#5f6368" d="M19.14 12.94c.04-.3.06-.61.06-.94 0-.32-.02-.64-.07-.94l2.03-1.58a.49.49 0 0 0 .12-.61l-1.92-3.32a.488.488 0 0 0-.59-.22l-2.39.96c-.5-.38-1.03-.7-1.62-.94l-.36-2.540a.484.484 0 0 0-.48-.41h-3.84c-.24 0-.43.17-.47.41l-.36 2.54c-.59.24-1.13.57-1.62.94l-2.39-.96c-.22-.08-.47 0-.59.22L2.74 8.87c-.12.21-.08.47.12.61l2.030 1.58c-.05.3-.09.63-.09.94s.02.64.07.94l-2.03 1.58a.49.49 0 0 0-.12.61l1.92 3.32c.12.22.37.29.59.22l2.39-.96c.5.38 1.03.7 1.62.94l.36 2.54c.05.24.24.41.48.41h3.84c.24 0 .44-.17.47-.41l.36-2.54c.59-.24 1.13-.56 1.62-.94l2.39.96c.22.08.47 0 .59-.22l1.92-3.32c.12-.22.07-.47-.12-.61l-2.01-1.58zM12 15.6c-1.98 0-3.6-1.62-3.6-3.6s1.62-3.6 3.6-3.6 3.6 1.62 3.6 3.6-1.62 3.6-3.6 3.6z"/></g>
<path d="M123 2H131V10H123ZM121 5V15H129" fill="none" stroke="#5f6368" stroke-width="1.2"/><path d="M122.5 12.5L126 9M126 11.5V9H123.5" fill="none" stroke="#5f6368" stroke-width="1"/>
<path d="M145 3.5H155M147 3.5V2H153V3.5M146 3.5L146.7 14.5H153.3L154 3.5M148.8 6V12M151.2 6V12" fill="none" stroke="#5f6368" stroke-width="1.2"/>
<circle cx="173" cy="3" r="1.3" fill="#5f6368"/><circle cx="173" cy="8" r="1.3" fill="#5f6368"/><circle cx="173" cy="13" r="1.3" fill="#5f6368"/>
</svg>
<!-- NB END -->
</body></html>
